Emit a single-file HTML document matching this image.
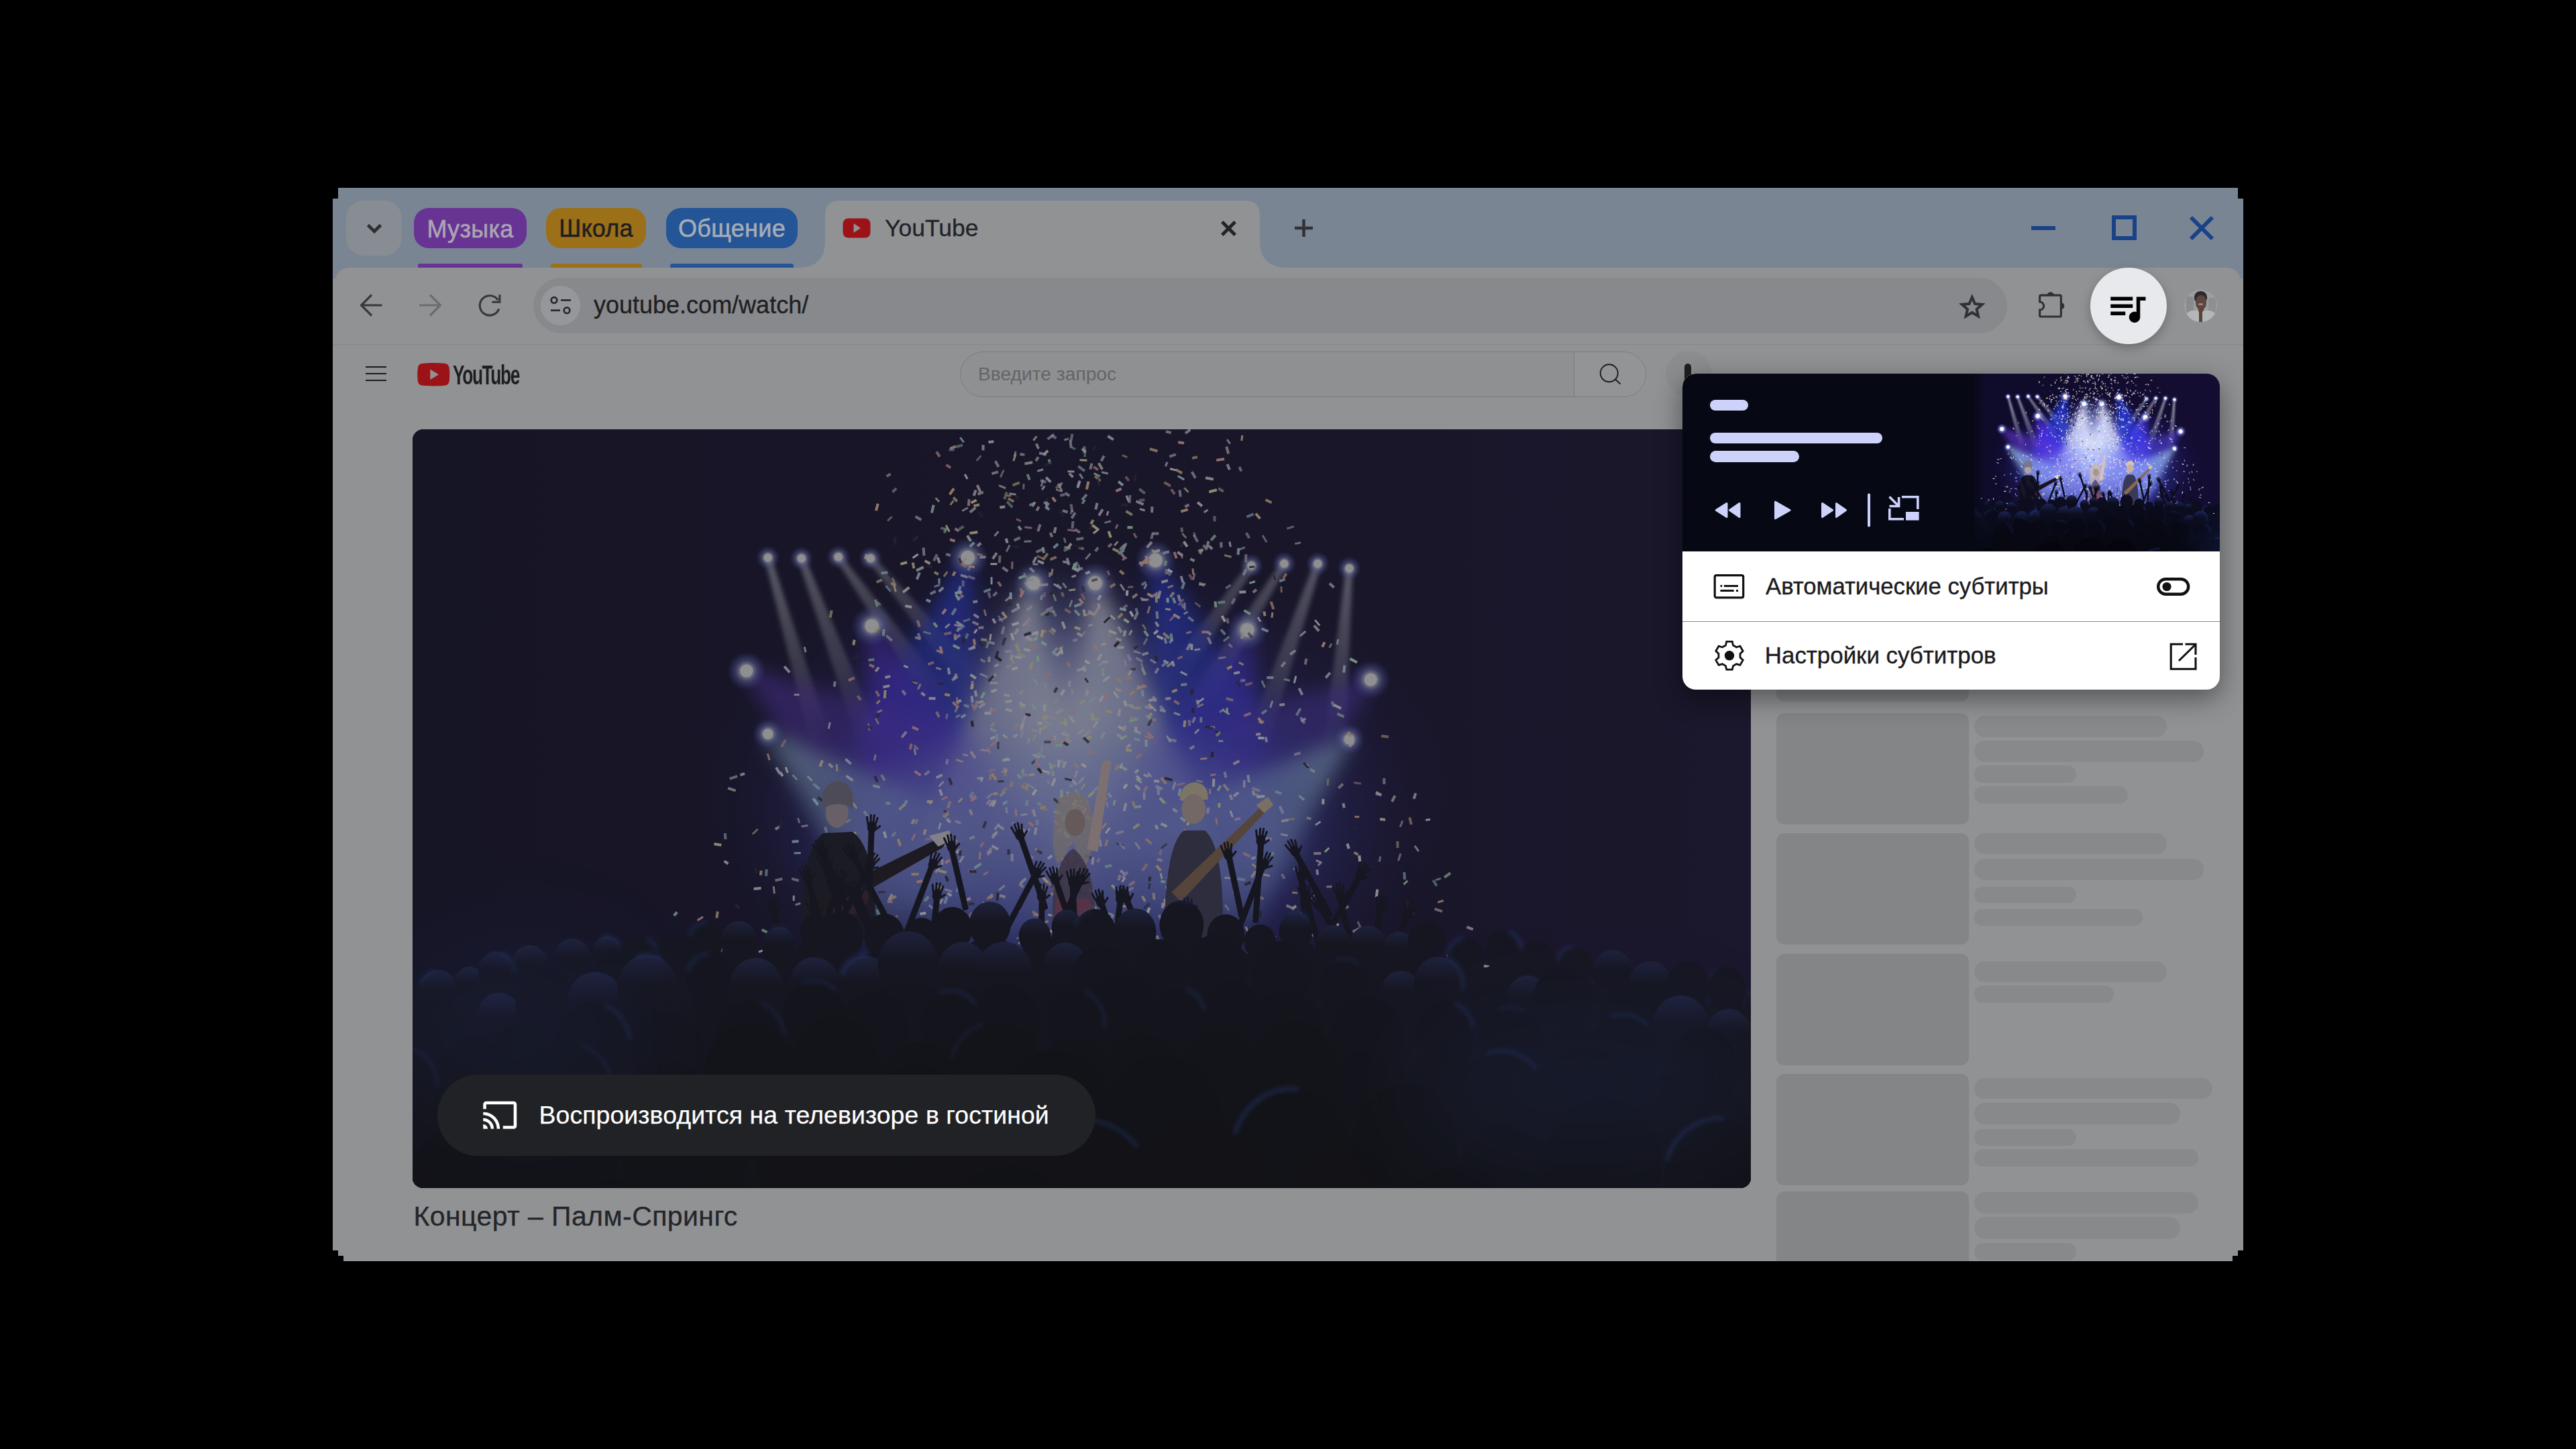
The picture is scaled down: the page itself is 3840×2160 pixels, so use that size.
<!DOCTYPE html>
<html><head><meta charset="utf-8">
<style>
*{margin:0;padding:0;box-sizing:border-box}
html,body{width:3840px;height:2160px;background:#000;overflow:hidden}
body{position:relative;font-family:"Liberation Sans",sans-serif}
.a{position:absolute}
.t{position:absolute;line-height:1;white-space:nowrap;font-family:"Liberation Sans",sans-serif}
svg{position:absolute;overflow:visible}
</style></head><body>
<!-- window -->
<div class="a" id="win" style="left:496px;top:280px;width:2848px;height:1600px;background:#7a8594;overflow:hidden">
</div>
<!-- tab strip items -->
<div class="a" id="dd" style="left:516px;top:299px;width:83px;height:82px;border-radius:26px;background:#888c93"></div>
<svg style="left:546px;top:333px" width="24" height="16"><path d="M2.5 2.5 L12 12 L21.5 2.5" fill="none" stroke="#2c2f33" stroke-width="4.6"/></svg>
<div class="a" style="left:617px;top:310px;width:168px;height:60px;border-radius:22px;background:#673494"></div>
<div class="t" style="left:617px;width:168px;text-align:center;top:323.5px;font-size:36px;color:#aaa4b2;-webkit-text-stroke:0.6px #aaa4b2;letter-spacing:0.3px">Музыка</div>
<div class="a" style="left:623px;top:393px;width:156px;height:6px;border-radius:3px 3px 0 0;background:#673494"></div>
<div class="a" style="left:814px;top:310px;width:149px;height:60px;border-radius:22px;background:#9b7019"></div>
<div class="t" style="left:814px;width:149px;text-align:center;top:323px;font-size:36px;color:#1f1f1f;-webkit-text-stroke:0.6px #1f1f1f;letter-spacing:0.2px">Школа</div>
<div class="a" style="left:821px;top:393px;width:136px;height:6px;border-radius:3px 3px 0 0;background:#9b7019"></div>
<div class="a" style="left:993px;top:310px;width:196px;height:60px;border-radius:22px;background:#235597"></div>
<div class="t" style="left:993px;width:196px;text-align:center;top:323px;font-size:36px;color:#a6acb6;-webkit-text-stroke:0.6px #a6acb6;letter-spacing:0.3px">Общение</div>
<div class="a" style="left:999px;top:393px;width:184px;height:6px;border-radius:3px 3px 0 0;background:#235597"></div>
<!-- active tab -->
<svg style="left:1190px;top:299px" width="760" height="101"><path d="M0 100 Q40 100 40 60 L40 22 Q40 0 62 0 L666 0 Q688 0 688 22 L688 60 Q688 100 728 100 Z" fill="#919294"/></svg>
<svg style="left:1256px;top:325px" width="42" height="30"><rect x="0.5" y="0.5" width="41" height="29" rx="8" fill="#9b1316"/><path d="M16.5 8 L27 15 L16.5 22 Z" fill="#919294"/></svg>
<div class="t" id="tabt" style="left:1319px;top:323px;font-size:35.5px;color:#222327;-webkit-text-stroke:0.3px #222327">YouTube</div>
<svg style="left:1820px;top:328.5px" width="23" height="23"><path d="M1.8 1.8 L21.2 21.2 M21.2 1.8 L1.8 21.2" stroke="#232427" stroke-width="5"/></svg>
<svg style="left:1930px;top:327px" width="27" height="26"><path d="M13.5 0 V26 M0 13 H27" stroke="#303236" stroke-width="4.5"/></svg>
<!-- window controls -->
<div class="a" style="left:3028px;top:337px;width:36px;height:6px;background:#1a4288"></div>
<div class="a" style="left:3148px;top:321px;width:37px;height:37px;border:6px solid #1a4288"></div>
<svg style="left:3264px;top:322px" width="36" height="36"><path d="M2 2 L34 34 M34 2 L2 34" stroke="#1a4288" stroke-width="6"/></svg>
<!-- toolbar -->
<div class="a" id="tb" style="left:500px;top:399px;width:2840px;height:115px;border-radius:20px 20px 0 0;background:#919294"></div>
<div class="a" style="left:496px;top:512px;width:2848px;height:1368px;background:#919294"></div><div class="a" style="left:496px;top:415px;width:8px;height:100px;background:#919294"></div><div class="a" style="left:3336px;top:415px;width:8px;height:100px;background:#919294"></div>
<div class="a" style="left:496px;top:512.5px;width:2848px;height:1.5px;background:#86878a"></div>
<svg style="left:529px;top:431px" width="48" height="48"><path d="M9 24H40.5 M25 8.5 L9.6 24 L25 39.5" fill="none" stroke="#36383b" stroke-width="3.2"/></svg>
<svg style="left:617px;top:431px" width="48" height="48"><path d="M8 24H39.5 M24 8.5 L39.4 24 L24 39.5" fill="none" stroke="#6b6d70" stroke-width="3.2"/></svg>
<svg style="left:706px;top:431px" width="48" height="48"><path d="M37.8 29.4 A14.7 14.7 0 1 1 36.3 16.4" fill="none" stroke="#36383b" stroke-width="3.1"/><path d="M27.5 19.3 H38.9 V8.2" fill="none" stroke="#36383b" stroke-width="3.1"/></svg>
<div class="a" id="omni" style="left:795px;top:414px;width:2197px;height:83px;border-radius:41.5px;background:#88898c"></div>
<div class="a" style="left:806px;top:426px;width:59px;height:59px;border-radius:50%;background:#96979a"></div>
<svg style="left:815px;top:437px" width="42" height="32"><g fill="none" stroke="#27292c" stroke-width="2.7"><circle cx="11" cy="10.5" r="4.3"/><path d="M21 10.5 H36"/><path d="M6 25.7 H20"/><circle cx="30" cy="25.7" r="4.3"/></g></svg>
<div class="t" id="url" style="left:885px;top:437px;font-size:36px;color:#1f2023;-webkit-text-stroke:0.35px #1f2023">youtube.com/watch/</div>
<svg style="left:2916px;top:433.6px" width="47.5" height="47.5" viewBox="0 -960 960 960"><path d="m354-287 126-76 126 77-33-144 111-96-146-13-58-136-58 135-146 13 111 97-33 143ZM233-120l65-281L80-590l288-25 112-265 112 265 288 25-218 189 65 281-247-149-247 149Z" fill="#2f3134"/></svg>
<svg style="left:3030px;top:428px" width="56" height="52"><path d="M12.5 12.15 H40.5 Q42.35 12.15 42.35 14 V42.2 Q42.35 44.05 40.5 44.05 H12.5 Q10.65 44.05 10.65 42.2 V34 A6 6 0 0 0 10.65 22 V14 Q10.65 12.15 12.5 12.15 Z" fill="none" stroke="#2f3134" stroke-width="3.1"/><path d="M21.5 12.5 A5.3 5.3 0 0 1 32.1 12.5 Z M42 22.8 A5.3 5.3 0 0 1 42 33.4 Z" fill="#2f3134"/></svg>
<!-- media button -->
<div class="a" style="left:3116px;top:399px;width:114px;height:114px;border-radius:50%;background:#e8e9ec;box-shadow:0 6px 16px rgba(0,0,0,0.25)"></div>
<svg style="left:3137.5px;top:425.5px" width="66" height="66" viewBox="0 0 24 24"><path d="M15 6H3v2h12V6zm0 4H3v2h12v-2zM3 16h8v-2H3v2zM17 6v8.18c-.31-.11-.65-.18-1-.18-1.66 0-3 1.34-3 3s1.34 3 3 3 3-1.34 3-3V8h3V6h-5z" fill="#000"/></svg>
<!-- avatar -->
<div class="a" id="avatar" style="left:3256px;top:432px;width:49px;height:48px;border-radius:50%;overflow:hidden;background:#9c9ea1">
  <div class="a" style="left:3px;top:10px;width:11px;height:24px;border-radius:4px;background:#85878b;opacity:.8"></div>
  <div class="a" style="left:36px;top:12px;width:11px;height:22px;border-radius:4px;background:#8a8c90;opacity:.8"></div>
  <div class="a" style="left:15px;top:1.5px;width:19px;height:17px;border-radius:50% 50% 35% 35%;background:#2b2a2c"></div>
  <div class="a" style="left:16.5px;top:8px;width:16px;height:22px;border-radius:45% 45% 48% 48%;background:#5e463e"></div>
  <div class="a" style="left:21px;top:20px;width:7px;height:3px;border-radius:2px;background:#b0a0a0;opacity:.7"></div>
  <div class="a" style="left:20.5px;top:27px;width:8px;height:22px;background:#5a423a"></div>
  <div class="a" style="left:3px;top:31px;width:19px;height:22px;border-radius:45% 15% 0 0;background:#b4b6b8"></div>
  <div class="a" style="left:27px;top:31px;width:20px;height:22px;border-radius:15% 45% 0 0;background:#b4b6b8"></div>
</div>
<!-- page header -->
<svg style="left:545px;top:545px" width="32" height="24"><path d="M0 2H31 M0 12H31 M0 22H31" stroke="#1a1a1b" stroke-width="2.2"/></svg>
<svg style="left:622px;top:541px" width="49" height="35"><path d="M47.5 6.5 C47 3.5 44.8 1.3 41.8 0.9 C37 0.3 30 0 24.2 0 C18.4 0 11.5 0.3 6.7 0.9 C3.7 1.3 1.5 3.5 1 6.5 C0.4 10 0.2 13.8 0.2 17.2 C0.2 20.6 0.4 24.5 1 28 C1.5 31 3.7 33.2 6.7 33.6 C11.5 34.2 18.4 34.5 24.2 34.5 C30 34.5 37 34.2 41.8 33.6 C44.8 33.2 47 31 47.5 28 C48.1 24.5 48.3 20.6 48.3 17.2 C48.3 13.8 48.1 10 47.5 6.5 Z" fill="#9b1316"/><path d="M19.3 9.5 L32 17.2 L19.3 24.9 Z" fill="#919294"/></svg>
<div class="t" id="ytw" style="left:675px;top:537.5px;font-size:41.5px;font-weight:bold;color:#1e1f22;letter-spacing:-2.2px;transform:scaleX(0.635);transform-origin:0 0">YouTube</div>
<div class="a" id="search" style="left:1431px;top:524px;width:1023px;height:68px;border-radius:34px;border:1.6px solid #7b7c7e;background:#8f9092"></div>
<div class="a" style="left:2346px;top:525px;width:107px;height:66px;border-radius:0 33px 33px 0;border-left:1.6px solid #7b7c7e;background:#939496"></div>
<div class="t" id="ph" style="left:1458px;top:543px;font-size:28.2px;color:#646567">Введите запрос</div>
<svg style="left:2383px;top:541px" width="36" height="36"><circle cx="15.7" cy="15.3" r="13" fill="none" stroke="#1c1d1f" stroke-width="1.9"/><path d="M25 24.5 L32.5 31.5" stroke="#1c1d1f" stroke-width="1.9"/></svg>
<div class="a" style="left:2483px;top:523px;width:68px;height:68px;border-radius:50%;background:#8c8d8f"></div>
<div class="a" style="left:2511px;top:542px;width:10px;height:30px;border-radius:5px;background:#1e1f21"></div>
<!-- video -->
<div class="a" id="video" style="left:615px;top:640px;width:1995px;height:1131px;border-radius:16px;overflow:hidden;background:#111">
<svg style="left:0;top:0" width="1995" height="1131" viewBox="0 0 1996 1131"><g id="scene">
<defs>
<linearGradient id="sbg" x1="0" y1="0" x2="1" y2="0"><stop offset="0" stop-color="#0d0a26"/><stop offset="0.5" stop-color="#110c2e"/><stop offset="1" stop-color="#160e34"/></linearGradient>
<radialGradient id="glow1" cx="0.5" cy="0.5" r="0.5"><stop offset="0" stop-color="#4a60f8" stop-opacity="1"/><stop offset="0.5" stop-color="#3a3ad0" stop-opacity="0.6"/><stop offset="1" stop-color="#2a1a80" stop-opacity="0"/></radialGradient>
<radialGradient id="core" cx="0.5" cy="0.5" r="0.5"><stop offset="0" stop-color="#f4f8ff" stop-opacity="1"/><stop offset="0.5" stop-color="#c0ccff" stop-opacity="0.65"/><stop offset="1" stop-color="#7080f0" stop-opacity="0"/></radialGradient>
<radialGradient id="spot" cx="0.5" cy="0.5" r="0.5"><stop offset="0" stop-color="#ffffff"/><stop offset="0.3" stop-color="#f4f6ff"/><stop offset="0.55" stop-color="#9aa6ff" stop-opacity="0.55"/><stop offset="1" stop-color="#5060ff" stop-opacity="0"/></radialGradient>
<filter id="b3" x="-50%" y="-50%" width="200%" height="200%"><feGaussianBlur stdDeviation="3"/></filter>
<filter id="b6" x="-50%" y="-50%" width="200%" height="200%"><feGaussianBlur stdDeviation="6"/></filter>
<filter id="b10" x="-50%" y="-50%" width="200%" height="200%"><feGaussianBlur stdDeviation="14"/></filter>
<filter id="b25" x="-50%" y="-50%" width="200%" height="200%"><feGaussianBlur stdDeviation="28"/></filter>
<filter id="b60" x="-50%" y="-50%" width="200%" height="200%"><feGaussianBlur stdDeviation="70"/></filter>
<linearGradient id="hd" x1="0" y1="0" x2="0" y2="1"><stop offset="0" stop-color="#1c2454"/><stop offset="0.45" stop-color="#0c0d1e"/><stop offset="1" stop-color="#0a0b18"/></linearGradient>
</defs>
<rect width="1996" height="1131" fill="url(#sbg)"/>
<ellipse cx="985" cy="540" rx="560" ry="360" fill="url(#glow1)" opacity="0.6"/>
<ellipse cx="985" cy="590" rx="380" ry="240" fill="#4858f0" opacity="0.45" filter="url(#b60)"/>
<linearGradient id="bm0" gradientUnits="userSpaceOnUse" x1="530" y1="191" x2="610" y2="470"><stop offset="0" stop-color="#e8ecff" stop-opacity="0.6"/><stop offset="0.6" stop-color="#e8ecff" stop-opacity="0.30"/><stop offset="1" stop-color="#e8ecff" stop-opacity="0"/></linearGradient>
<polygon points="525,192 595,474 625,466 535,190" fill="url(#bm0)" filter="url(#b3)"/>
<linearGradient id="bm1" gradientUnits="userSpaceOnUse" x1="580" y1="192" x2="680" y2="460"><stop offset="0" stop-color="#e8ecff" stop-opacity="0.55"/><stop offset="0.6" stop-color="#e8ecff" stop-opacity="0.28"/><stop offset="1" stop-color="#e8ecff" stop-opacity="0"/></linearGradient>
<polygon points="575,194 664,466 696,454 585,190" fill="url(#bm1)" filter="url(#b3)"/>
<linearGradient id="bm2" gradientUnits="userSpaceOnUse" x1="635" y1="190" x2="790" y2="410"><stop offset="0" stop-color="#e8ecff" stop-opacity="0.5"/><stop offset="0.6" stop-color="#e8ecff" stop-opacity="0.25"/><stop offset="1" stop-color="#e8ecff" stop-opacity="0"/></linearGradient>
<polygon points="631,193 775,420 805,400 639,187" fill="url(#bm2)" filter="url(#b3)"/>
<linearGradient id="bm3" gradientUnits="userSpaceOnUse" x1="683" y1="192" x2="830" y2="370"><stop offset="0" stop-color="#e8ecff" stop-opacity="0.45"/><stop offset="0.6" stop-color="#e8ecff" stop-opacity="0.23"/><stop offset="1" stop-color="#e8ecff" stop-opacity="0"/></linearGradient>
<polygon points="679,195 817,381 843,359 687,189" fill="url(#bm3)" filter="url(#b3)"/>
<linearGradient id="bm4" gradientUnits="userSpaceOnUse" x1="1251" y1="203" x2="1130" y2="380"><stop offset="0" stop-color="#e8ecff" stop-opacity="0.45"/><stop offset="0.6" stop-color="#e8ecff" stop-opacity="0.23"/><stop offset="1" stop-color="#e8ecff" stop-opacity="0"/></linearGradient>
<polygon points="1247,200 1116,370 1144,390 1255,206" fill="url(#bm4)" filter="url(#b3)"/>
<linearGradient id="bm5" gradientUnits="userSpaceOnUse" x1="1300" y1="200" x2="1165" y2="420"><stop offset="0" stop-color="#e8ecff" stop-opacity="0.5"/><stop offset="0.6" stop-color="#e8ecff" stop-opacity="0.25"/><stop offset="1" stop-color="#e8ecff" stop-opacity="0"/></linearGradient>
<polygon points="1296,197 1150,411 1180,429 1304,203" fill="url(#bm5)" filter="url(#b3)"/>
<linearGradient id="bm6" gradientUnits="userSpaceOnUse" x1="1350" y1="200" x2="1260" y2="465"><stop offset="0" stop-color="#e8ecff" stop-opacity="0.55"/><stop offset="0.6" stop-color="#e8ecff" stop-opacity="0.28"/><stop offset="1" stop-color="#e8ecff" stop-opacity="0"/></linearGradient>
<polygon points="1345,198 1244,460 1276,470 1355,202" fill="url(#bm6)" filter="url(#b3)"/>
<linearGradient id="bm7" gradientUnits="userSpaceOnUse" x1="1397" y1="207" x2="1375" y2="470"><stop offset="0" stop-color="#e8ecff" stop-opacity="0.6"/><stop offset="0.6" stop-color="#e8ecff" stop-opacity="0.30"/><stop offset="1" stop-color="#e8ecff" stop-opacity="0"/></linearGradient>
<polygon points="1392,207 1359,469 1391,471 1402,207" fill="url(#bm7)" filter="url(#b3)"/>
<linearGradient id="bm8" gradientUnits="userSpaceOnUse" x1="828" y1="191" x2="730" y2="580"><stop offset="0" stop-color="#2840ff" stop-opacity="0.85"/><stop offset="0.6" stop-color="#2840ff" stop-opacity="0.42"/><stop offset="1" stop-color="#2840ff" stop-opacity="0"/></linearGradient>
<polygon points="823,190 604,548 856,612 833,192" fill="url(#bm8)" filter="url(#b10)"/>
<linearGradient id="bm9" gradientUnits="userSpaceOnUse" x1="1108" y1="195" x2="1220" y2="580"><stop offset="0" stop-color="#2840ff" stop-opacity="0.85"/><stop offset="0.6" stop-color="#2840ff" stop-opacity="0.42"/><stop offset="1" stop-color="#2840ff" stop-opacity="0"/></linearGradient>
<polygon points="1103,196 1095,616 1345,544 1113,194" fill="url(#bm9)" filter="url(#b10)"/>
<linearGradient id="bm10" gradientUnits="userSpaceOnUse" x1="926" y1="229" x2="860" y2="720"><stop offset="0" stop-color="#f8faff" stop-opacity="1.0"/><stop offset="0.6" stop-color="#f8faff" stop-opacity="0.50"/><stop offset="1" stop-color="#f8faff" stop-opacity="0"/></linearGradient>
<polygon points="921,228 711,700 1009,740 931,230" fill="url(#bm10)" filter="url(#b10)"/>
<linearGradient id="bm11" gradientUnits="userSpaceOnUse" x1="1018" y1="229" x2="1090" y2="720"><stop offset="0" stop-color="#f8faff" stop-opacity="1.0"/><stop offset="0.6" stop-color="#f8faff" stop-opacity="0.50"/><stop offset="1" stop-color="#f8faff" stop-opacity="0"/></linearGradient>
<polygon points="1013,230 942,742 1238,698 1023,228" fill="url(#bm11)" filter="url(#b10)"/>
<linearGradient id="bm12" gradientUnits="userSpaceOnUse" x1="685" y1="293" x2="830" y2="720"><stop offset="0" stop-color="#5a30ff" stop-opacity="0.7"/><stop offset="0.6" stop-color="#5a30ff" stop-opacity="0.35"/><stop offset="1" stop-color="#5a30ff" stop-opacity="0"/></linearGradient>
<polygon points="680,295 660,778 1000,662 690,291" fill="url(#bm12)" filter="url(#b10)"/>
<linearGradient id="bm13" gradientUnits="userSpaceOnUse" x1="1245" y1="299" x2="1120" y2="720"><stop offset="0" stop-color="#4a38ff" stop-opacity="0.7"/><stop offset="0.6" stop-color="#4a38ff" stop-opacity="0.35"/><stop offset="1" stop-color="#4a38ff" stop-opacity="0"/></linearGradient>
<polygon points="1240,298 947,669 1293,771 1250,300" fill="url(#bm13)" filter="url(#b10)"/>
<linearGradient id="bm14" gradientUnits="userSpaceOnUse" x1="498" y1="360" x2="800" y2="590"><stop offset="0" stop-color="#6a38e0" stop-opacity="0.65"/><stop offset="0.6" stop-color="#6a38e0" stop-opacity="0.33"/><stop offset="1" stop-color="#6a38e0" stop-opacity="0"/></linearGradient>
<polygon points="495,364 709,709 891,471 501,356" fill="url(#bm14)" filter="url(#b10)"/>
<linearGradient id="bm15" gradientUnits="userSpaceOnUse" x1="1429" y1="373" x2="1150" y2="590"><stop offset="0" stop-color="#5a40e0" stop-opacity="0.65"/><stop offset="0.6" stop-color="#5a40e0" stop-opacity="0.33"/><stop offset="1" stop-color="#5a40e0" stop-opacity="0"/></linearGradient>
<polygon points="1426,369 1058,472 1242,708 1432,377" fill="url(#bm15)" filter="url(#b10)"/>
<linearGradient id="bm16" gradientUnits="userSpaceOnUse" x1="530" y1="454" x2="840" y2="730"><stop offset="0" stop-color="#a8d8ff" stop-opacity="0.7"/><stop offset="0.6" stop-color="#a8d8ff" stop-opacity="0.35"/><stop offset="1" stop-color="#a8d8ff" stop-opacity="0"/></linearGradient>
<polygon points="527,458 747,835 933,625 533,450" fill="url(#bm16)" filter="url(#b10)"/>
<linearGradient id="bm17" gradientUnits="userSpaceOnUse" x1="1397" y1="462" x2="1110" y2="720"><stop offset="0" stop-color="#a8d8ff" stop-opacity="0.7"/><stop offset="0.6" stop-color="#a8d8ff" stop-opacity="0.35"/><stop offset="1" stop-color="#a8d8ff" stop-opacity="0"/></linearGradient>
<polygon points="1394,458 1016,616 1204,824 1400,466" fill="url(#bm17)" filter="url(#b10)"/>
<ellipse cx="972" cy="450" rx="170" ry="250" fill="url(#core)" filter="url(#b25)"/>
<ellipse cx="975" cy="610" rx="340" ry="150" fill="#90a0ff" opacity="0.45" filter="url(#b25)"/>
<circle cx="530" cy="191" r="18" fill="url(#spot)" opacity="0.85"/>
<circle cx="530" cy="191" r="6.0" fill="#ffffff"/>
<circle cx="580" cy="192" r="18" fill="url(#spot)" opacity="0.85"/>
<circle cx="580" cy="192" r="6.0" fill="#ffffff"/>
<circle cx="635" cy="190" r="18" fill="url(#spot)" opacity="0.85"/>
<circle cx="635" cy="190" r="6.0" fill="#ffffff"/>
<circle cx="683" cy="192" r="18" fill="url(#spot)" opacity="0.85"/>
<circle cx="683" cy="192" r="6.0" fill="#ffffff"/>
<circle cx="828" cy="191" r="31" fill="url(#spot)" opacity="0.85"/>
<circle cx="828" cy="191" r="10.2" fill="#ffffff"/>
<circle cx="926" cy="229" r="31" fill="url(#spot)" opacity="0.85"/>
<circle cx="926" cy="229" r="10.2" fill="#ffffff"/>
<circle cx="1018" cy="229" r="31" fill="url(#spot)" opacity="0.85"/>
<circle cx="1018" cy="229" r="10.2" fill="#ffffff"/>
<circle cx="1108" cy="195" r="31" fill="url(#spot)" opacity="0.85"/>
<circle cx="1108" cy="195" r="10.2" fill="#ffffff"/>
<circle cx="1251" cy="203" r="18" fill="url(#spot)" opacity="0.85"/>
<circle cx="1251" cy="203" r="6.0" fill="#ffffff"/>
<circle cx="1300" cy="200" r="18" fill="url(#spot)" opacity="0.85"/>
<circle cx="1300" cy="200" r="6.0" fill="#ffffff"/>
<circle cx="1350" cy="200" r="18" fill="url(#spot)" opacity="0.85"/>
<circle cx="1350" cy="200" r="6.0" fill="#ffffff"/>
<circle cx="1397" cy="207" r="18" fill="url(#spot)" opacity="0.85"/>
<circle cx="1397" cy="207" r="6.0" fill="#ffffff"/>
<circle cx="685" cy="293" r="31" fill="url(#spot)" opacity="0.85"/>
<circle cx="685" cy="293" r="10.2" fill="#ffffff"/>
<circle cx="1245" cy="299" r="31" fill="url(#spot)" opacity="0.85"/>
<circle cx="1245" cy="299" r="10.2" fill="#ffffff"/>
<circle cx="498" cy="360" r="29" fill="url(#spot)" opacity="0.85"/>
<circle cx="498" cy="360" r="9.3" fill="#ffffff"/>
<circle cx="1429" cy="373" r="29" fill="url(#spot)" opacity="0.85"/>
<circle cx="1429" cy="373" r="9.3" fill="#ffffff"/>
<circle cx="530" cy="454" r="23" fill="url(#spot)" opacity="0.85"/>
<circle cx="530" cy="454" r="7.6" fill="#ffffff"/>
<circle cx="1397" cy="462" r="23" fill="url(#spot)" opacity="0.85"/>
<circle cx="1397" cy="462" r="7.6" fill="#ffffff"/>
<g><rect x="1149" y="259" width="7" height="4" fill="#f0f0ff" opacity="0.6" transform="rotate(66 1149 259)"/><rect x="1189" y="172" width="7" height="4" fill="#ffffff" opacity="0.8" transform="rotate(43 1189 172)"/><rect x="1131" y="661" width="10" height="4" fill="#c8ecff" opacity="0.8" transform="rotate(104 1131 661)"/><rect x="1059" y="37" width="8" height="3" fill="#ffd0a0" opacity="0.7" transform="rotate(21 1059 37)"/><rect x="788" y="145" width="9" height="4" fill="#c8ecff" opacity="0.6" transform="rotate(11 788 145)"/><rect x="836" y="397" width="10" height="4" fill="#e8d8ff" opacity="1.0" transform="rotate(84 836 397)"/><rect x="1068" y="240" width="8" height="4" fill="#ffffff" opacity="1.0" transform="rotate(95 1068 240)"/><rect x="719" y="230" width="12" height="3" fill="#fff0b0" opacity="0.9" transform="rotate(75 719 230)"/><rect x="1164" y="62" width="11" height="4" fill="#ffffff" opacity="0.7" transform="rotate(61 1164 62)"/><rect x="558" y="464" width="12" height="4" fill="#ffb8b8" opacity="0.6" transform="rotate(120 558 464)"/><rect x="1118" y="518" width="12" height="4" fill="#ffd0a0" opacity="0.8" transform="rotate(51 1118 518)"/><rect x="1158" y="278" width="10" height="4" fill="#c8ecff" opacity="0.7" transform="rotate(39 1158 278)"/><rect x="921" y="318" width="12" height="4" fill="#ffb8b8" opacity="0.8" transform="rotate(30 921 318)"/><rect x="1233" y="707" width="8" height="4" fill="#c8ecff" opacity="1.0" transform="rotate(65 1233 707)"/><rect x="679" y="186" width="8" height="4" fill="#ffffff" opacity="0.7" transform="rotate(106 679 186)"/><rect x="884" y="117" width="8" height="4" fill="#ffffff" opacity="0.9" transform="rotate(171 884 117)"/><rect x="872" y="365" width="11" height="4" fill="#c8ffd8" opacity="0.8" transform="rotate(123 872 365)"/><rect x="1218" y="319" width="7" height="3" fill="#e8d8ff" opacity="0.7" transform="rotate(38 1218 319)"/><rect x="1195" y="481" width="8" height="4" fill="#302838" opacity="1.0" transform="rotate(97 1195 481)"/><rect x="932" y="20" width="8" height="4" fill="#ffffff" opacity="0.6" transform="rotate(66 932 20)"/><rect x="875" y="794" width="9" height="4" fill="#e8d8ff" opacity="0.6" transform="rotate(15 875 794)"/><rect x="590" y="592" width="10" height="3" fill="#f0f0ff" opacity="0.7" transform="rotate(171 590 592)"/><rect x="1051" y="731" width="11" height="3" fill="#ffb8b8" opacity="0.6" transform="rotate(116 1051 731)"/><rect x="1166" y="415" width="8" height="4" fill="#302838" opacity="0.9" transform="rotate(90 1166 415)"/><rect x="849" y="649" width="12" height="4" fill="#c8ecff" opacity="0.9" transform="rotate(145 849 649)"/><rect x="721" y="160" width="12" height="4" fill="#302838" opacity="0.7" transform="rotate(85 721 160)"/><rect x="1012" y="765" width="9" height="4" fill="#e8d8ff" opacity="1.0" transform="rotate(178 1012 765)"/><rect x="861" y="376" width="12" height="4" fill="#e8d8ff" opacity="1.0" transform="rotate(0 861 376)"/><rect x="1258" y="640" width="7" height="4" fill="#c8ecff" opacity="0.9" transform="rotate(164 1258 640)"/><rect x="1155" y="382" width="9" height="4" fill="#c8ffd8" opacity="0.8" transform="rotate(175 1155 382)"/><rect x="1409" y="595" width="7" height="3" fill="#302838" opacity="0.6" transform="rotate(179 1409 595)"/><rect x="1047" y="724" width="11" height="4" fill="#f0f0ff" opacity="0.7" transform="rotate(118 1047 724)"/><rect x="869" y="439" width="7" height="4" fill="#fff0b0" opacity="0.6" transform="rotate(131 869 439)"/><rect x="1260" y="347" width="8" height="3" fill="#302838" opacity="0.7" transform="rotate(53 1260 347)"/><rect x="735" y="261" width="10" height="4" fill="#ffffff" opacity="0.9" transform="rotate(11 735 261)"/><rect x="1109" y="530" width="11" height="4" fill="#f0f0ff" opacity="0.7" transform="rotate(24 1109 530)"/><rect x="810" y="146" width="7" height="4" fill="#ffe0e8" opacity="0.8" transform="rotate(31 810 146)"/><rect x="862" y="445" width="10" height="4" fill="#c8ecff" opacity="0.8" transform="rotate(19 862 445)"/><rect x="1167" y="153" width="7" height="3" fill="#ffe0e8" opacity="0.6" transform="rotate(81 1167 153)"/><rect x="801" y="355" width="10" height="4" fill="#ffffff" opacity="0.8" transform="rotate(81 801 355)"/><rect x="819" y="406" width="8" height="4" fill="#f0f0ff" opacity="1.0" transform="rotate(158 819 406)"/><rect x="1083" y="714" width="9" height="4" fill="#c8ffd8" opacity="0.9" transform="rotate(57 1083 714)"/><rect x="1139" y="58" width="11" height="4" fill="#ffd0a0" opacity="0.9" transform="rotate(28 1139 58)"/><rect x="988" y="293" width="9" height="4" fill="#fff0b0" opacity="1.0" transform="rotate(17 988 293)"/><rect x="1157" y="792" width="11" height="3" fill="#e8d8ff" opacity="0.8" transform="rotate(78 1157 792)"/><rect x="934" y="337" width="9" height="4" fill="#c8ffd8" opacity="0.9" transform="rotate(83 934 337)"/><rect x="1055" y="265" width="10" height="4" fill="#c8ecff" opacity="1.0" transform="rotate(12 1055 265)"/><rect x="1179" y="777" width="7" height="4" fill="#c8ffd8" opacity="0.7" transform="rotate(49 1179 777)"/><rect x="1126" y="680" width="10" height="4" fill="#f0f0ff" opacity="0.8" transform="rotate(73 1126 680)"/><rect x="959" y="456" width="7" height="4" fill="#ffffff" opacity="0.6" transform="rotate(77 959 456)"/><rect x="889" y="508" width="11" height="3" fill="#ffe0e8" opacity="0.6" transform="rotate(154 889 508)"/><rect x="847" y="363" width="12" height="3" fill="#c8ecff" opacity="0.8" transform="rotate(23 847 363)"/><rect x="1311" y="751" width="12" height="3" fill="#ffd0a0" opacity="1.0" transform="rotate(33 1311 751)"/><rect x="999" y="244" width="10" height="3" fill="#ffb8b8" opacity="0.6" transform="rotate(62 999 244)"/><rect x="807" y="405" width="12" height="4" fill="#ffd0a0" opacity="0.8" transform="rotate(44 807 405)"/><rect x="695" y="655" width="11" height="4" fill="#c8ecff" opacity="0.9" transform="rotate(91 695 655)"/><rect x="1083" y="274" width="11" height="4" fill="#e8d8ff" opacity="0.8" transform="rotate(114 1083 274)"/><rect x="1017" y="786" width="10" height="4" fill="#ffd0a0" opacity="0.6" transform="rotate(78 1017 786)"/><rect x="949" y="673" width="11" height="4" fill="#ffb8b8" opacity="0.7" transform="rotate(51 949 673)"/><rect x="1160" y="215" width="9" height="4" fill="#ffb8b8" opacity="0.6" transform="rotate(58 1160 215)"/><rect x="994" y="174" width="8" height="4" fill="#ffd0a0" opacity="0.7" transform="rotate(15 994 174)"/><rect x="973" y="161" width="8" height="3" fill="#ffffff" opacity="0.6" transform="rotate(72 973 161)"/><rect x="989" y="240" width="10" height="3" fill="#fff0b0" opacity="0.9" transform="rotate(172 989 240)"/><rect x="882" y="526" width="9" height="3" fill="#302838" opacity="0.7" transform="rotate(177 882 526)"/><rect x="496" y="515" width="7" height="4" fill="#f0f0ff" opacity="0.9" transform="rotate(161 496 515)"/><rect x="696" y="111" width="11" height="4" fill="#ffd0a0" opacity="1.0" transform="rotate(105 696 111)"/><rect x="974" y="765" width="10" height="3" fill="#ffe0e8" opacity="0.9" transform="rotate(8 974 765)"/><rect x="929" y="301" width="7" height="4" fill="#ffffff" opacity="0.7" transform="rotate(44 929 301)"/><rect x="1017" y="638" width="11" height="4" fill="#ffe0e8" opacity="0.9" transform="rotate(96 1017 638)"/><rect x="516" y="597" width="11" height="3" fill="#ffd0a0" opacity="0.7" transform="rotate(136 516 597)"/><rect x="1081" y="781" width="9" height="4" fill="#ffffff" opacity="0.9" transform="rotate(86 1081 781)"/><rect x="930" y="494" width="8" height="3" fill="#302838" opacity="0.7" transform="rotate(134 930 494)"/><rect x="942" y="107" width="9" height="4" fill="#ffffff" opacity="0.7" transform="rotate(18 942 107)"/><rect x="787" y="233" width="9" height="3" fill="#ffe0e8" opacity="0.7" transform="rotate(161 787 233)"/><rect x="955" y="749" width="7" height="4" fill="#ffffff" opacity="1.0" transform="rotate(148 955 749)"/><rect x="468" y="795" width="12" height="3" fill="#ffb8b8" opacity="0.9" transform="rotate(16 468 795)"/><rect x="1428" y="762" width="8" height="4" fill="#e8d8ff" opacity="1.0" transform="rotate(92 1428 762)"/><rect x="1149" y="185" width="7" height="3" fill="#ffb8b8" opacity="0.8" transform="rotate(89 1149 185)"/><rect x="810" y="582" width="9" height="4" fill="#e8d8ff" opacity="0.7" transform="rotate(22 810 582)"/><rect x="1061" y="601" width="12" height="4" fill="#e8d8ff" opacity="0.7" transform="rotate(162 1061 601)"/><rect x="867" y="696" width="7" height="4" fill="#ffb8b8" opacity="0.9" transform="rotate(136 867 696)"/><rect x="913" y="81" width="8" height="3" fill="#e8d8ff" opacity="0.7" transform="rotate(92 913 81)"/><rect x="1335" y="342" width="9" height="4" fill="#ffe0e8" opacity="0.7" transform="rotate(100 1335 342)"/><rect x="1033" y="40" width="9" height="4" fill="#ffffff" opacity="0.7" transform="rotate(116 1033 40)"/><rect x="819" y="730" width="9" height="3" fill="#ffd0a0" opacity="0.9" transform="rotate(46 819 730)"/><rect x="956" y="208" width="10" height="3" fill="#fff0b0" opacity="0.8" transform="rotate(100 956 208)"/><rect x="1248" y="515" width="11" height="4" fill="#ffffff" opacity="0.7" transform="rotate(82 1248 515)"/><rect x="1101" y="342" width="10" height="3" fill="#e8d8ff" opacity="0.8" transform="rotate(31 1101 342)"/><rect x="978" y="191" width="11" height="4" fill="#f0f0ff" opacity="0.8" transform="rotate(74 978 191)"/><rect x="1208" y="168" width="8" height="4" fill="#e8d8ff" opacity="0.8" transform="rotate(90 1208 168)"/><rect x="781" y="101" width="8" height="3" fill="#ffffff" opacity="0.8" transform="rotate(45 781 101)"/><rect x="689" y="345" width="9" height="4" fill="#c8ffd8" opacity="0.7" transform="rotate(174 689 345)"/><rect x="1221" y="568" width="10" height="3" fill="#f0f0ff" opacity="1.0" transform="rotate(70 1221 568)"/><rect x="794" y="684" width="12" height="3" fill="#f0f0ff" opacity="0.7" transform="rotate(20 794 684)"/><rect x="1431" y="778" width="11" height="4" fill="#ffffff" opacity="0.6" transform="rotate(161 1431 778)"/><rect x="1265" y="456" width="7" height="4" fill="#f0f0ff" opacity="0.9" transform="rotate(173 1265 456)"/><rect x="952" y="509" width="7" height="4" fill="#c8ecff" opacity="0.8" transform="rotate(105 952 509)"/><rect x="864" y="632" width="7" height="4" fill="#e8d8ff" opacity="0.7" transform="rotate(179 864 632)"/><rect x="1198" y="516" width="8" height="3" fill="#ffb8b8" opacity="0.9" transform="rotate(173 1198 516)"/><rect x="771" y="708" width="10" height="3" fill="#e8d8ff" opacity="0.8" transform="rotate(41 771 708)"/><rect x="1142" y="181" width="9" height="4" fill="#f0f0ff" opacity="0.9" transform="rotate(36 1142 181)"/><rect x="1017" y="54" width="8" height="4" fill="#ffb8b8" opacity="0.8" transform="rotate(35 1017 54)"/><rect x="807" y="608" width="9" height="3" fill="#ffd0a0" opacity="0.8" transform="rotate(40 807 608)"/><rect x="1051" y="738" width="10" height="4" fill="#ffffff" opacity="0.7" transform="rotate(128 1051 738)"/><rect x="1011" y="719" width="11" height="4" fill="#e8d8ff" opacity="1.0" transform="rotate(180 1011 719)"/><rect x="875" y="153" width="9" height="3" fill="#e8d8ff" opacity="0.9" transform="rotate(131 875 153)"/><rect x="781" y="354" width="8" height="3" fill="#ffe0e8" opacity="0.8" transform="rotate(15 781 354)"/><rect x="1002" y="449" width="11" height="3" fill="#ffffff" opacity="0.6" transform="rotate(145 1002 449)"/><rect x="829" y="157" width="10" height="4" fill="#ffffff" opacity="0.9" transform="rotate(58 829 157)"/><rect x="998" y="649" width="7" height="3" fill="#ffe0e8" opacity="0.7" transform="rotate(166 998 649)"/><rect x="906" y="719" width="9" height="3" fill="#ffb8b8" opacity="0.8" transform="rotate(172 906 719)"/><rect x="767" y="597" width="8" height="4" fill="#ffe0e8" opacity="0.9" transform="rotate(107 767 597)"/><rect x="1276" y="765" width="8" height="4" fill="#fff0b0" opacity="1.0" transform="rotate(89 1276 765)"/><rect x="953" y="7" width="9" height="4" fill="#e8d8ff" opacity="0.7" transform="rotate(27 953 7)"/><rect x="1050" y="369" width="10" height="4" fill="#ffd0a0" opacity="0.8" transform="rotate(29 1050 369)"/><rect x="811" y="27" width="9" height="4" fill="#ffb8b8" opacity="1.0" transform="rotate(159 811 27)"/><rect x="1056" y="500" width="12" height="4" fill="#ffffff" opacity="0.7" transform="rotate(31 1056 500)"/><rect x="1234" y="496" width="10" height="4" fill="#ffe0e8" opacity="0.9" transform="rotate(152 1234 496)"/><rect x="930" y="624" width="8" height="3" fill="#fff0b0" opacity="0.8" transform="rotate(47 930 624)"/><rect x="1126" y="196" width="8" height="4" fill="#c8ffd8" opacity="0.7" transform="rotate(104 1126 196)"/><rect x="995" y="201" width="10" height="3" fill="#ffffff" opacity="0.6" transform="rotate(84 995 201)"/><rect x="1253" y="380" width="11" height="4" fill="#ffb8b8" opacity="0.6" transform="rotate(165 1253 380)"/><rect x="1211" y="186" width="11" height="3" fill="#fff0b0" opacity="0.8" transform="rotate(14 1211 186)"/><rect x="1079" y="359" width="8" height="4" fill="#302838" opacity="0.6" transform="rotate(170 1079 359)"/><rect x="948" y="568" width="9" height="3" fill="#ffd0a0" opacity="0.6" transform="rotate(180 948 568)"/><rect x="1056" y="731" width="11" height="4" fill="#302838" opacity="0.7" transform="rotate(74 1056 731)"/><rect x="1086" y="250" width="10" height="3" fill="#f0f0ff" opacity="0.8" transform="rotate(18 1086 250)"/><rect x="1259" y="124" width="10" height="4" fill="#ffd0a0" opacity="1.0" transform="rotate(49 1259 124)"/><rect x="1144" y="246" width="10" height="4" fill="#e8d8ff" opacity="0.9" transform="rotate(75 1144 246)"/><rect x="928" y="516" width="9" height="4" fill="#fff0b0" opacity="0.8" transform="rotate(170 928 516)"/><rect x="1080" y="339" width="11" height="4" fill="#f0f0ff" opacity="0.6" transform="rotate(29 1080 339)"/><rect x="846" y="114" width="9" height="4" fill="#fff0b0" opacity="0.9" transform="rotate(167 846 114)"/><rect x="1086" y="417" width="9" height="4" fill="#fff0b0" opacity="0.7" transform="rotate(174 1086 417)"/><rect x="929" y="670" width="7" height="4" fill="#ffd0a0" opacity="0.8" transform="rotate(57 929 670)"/><rect x="1219" y="310" width="11" height="3" fill="#c8ffd8" opacity="0.7" transform="rotate(141 1219 310)"/><rect x="800" y="492" width="8" height="4" fill="#f0f0ff" opacity="0.6" transform="rotate(102 800 492)"/><rect x="1031" y="120" width="11" height="4" fill="#e8d8ff" opacity="0.9" transform="rotate(121 1031 120)"/><rect x="899" y="94" width="10" height="4" fill="#302838" opacity="0.8" transform="rotate(55 899 94)"/><rect x="862" y="199" width="10" height="3" fill="#ffffff" opacity="1.0" transform="rotate(1 862 199)"/><rect x="1096" y="188" width="11" height="4" fill="#ffffff" opacity="0.7" transform="rotate(82 1096 188)"/><rect x="1164" y="320" width="9" height="4" fill="#ffffff" opacity="0.9" transform="rotate(91 1164 320)"/><rect x="1084" y="509" width="7" height="4" fill="#ffffff" opacity="0.8" transform="rotate(140 1084 509)"/><rect x="1295" y="602" width="11" height="3" fill="#ffe0e8" opacity="0.8" transform="rotate(12 1295 602)"/><rect x="843" y="155" width="12" height="4" fill="#fff0b0" opacity="1.0" transform="rotate(172 843 155)"/><rect x="958" y="549" width="11" height="4" fill="#302838" opacity="0.7" transform="rotate(45 958 549)"/><rect x="865" y="220" width="11" height="3" fill="#c8ecff" opacity="1.0" transform="rotate(90 865 220)"/><rect x="860" y="474" width="9" height="3" fill="#ffb8b8" opacity="0.9" transform="rotate(73 860 474)"/><rect x="866" y="544" width="11" height="3" fill="#f0f0ff" opacity="0.6" transform="rotate(141 866 544)"/><rect x="1139" y="39" width="10" height="4" fill="#f0f0ff" opacity="0.7" transform="rotate(161 1139 39)"/><rect x="934" y="504" width="9" height="4" fill="#302838" opacity="1.0" transform="rotate(48 934 504)"/><rect x="1185" y="492" width="10" height="3" fill="#ffd0a0" opacity="0.9" transform="rotate(174 1185 492)"/><rect x="926" y="717" width="11" height="4" fill="#ffd0a0" opacity="0.7" transform="rotate(40 926 717)"/><rect x="948" y="522" width="7" height="3" fill="#e8d8ff" opacity="0.6" transform="rotate(64 948 522)"/><rect x="826" y="427" width="8" height="4" fill="#ffffff" opacity="0.7" transform="rotate(149 826 427)"/><rect x="1121" y="749" width="8" height="3" fill="#ffd0a0" opacity="0.9" transform="rotate(17 1121 749)"/><rect x="817" y="626" width="7" height="4" fill="#ffd0a0" opacity="0.7" transform="rotate(101 817 626)"/><rect x="1096" y="463" width="10" height="4" fill="#ffffff" opacity="0.7" transform="rotate(89 1096 463)"/><rect x="906" y="35" width="7" height="4" fill="#c8ecff" opacity="0.8" transform="rotate(2 906 35)"/><rect x="1088" y="486" width="10" height="4" fill="#ffb8b8" opacity="0.7" transform="rotate(146 1088 486)"/><rect x="1217" y="51" width="9" height="4" fill="#ffffff" opacity="0.8" transform="rotate(68 1217 51)"/><rect x="981" y="64" width="8" height="4" fill="#ffe0e8" opacity="0.9" transform="rotate(47 981 64)"/><rect x="989" y="268" width="11" height="4" fill="#c8ffd8" opacity="0.8" transform="rotate(48 989 268)"/><rect x="599" y="549" width="12" height="4" fill="#c8ecff" opacity="1.0" transform="rotate(53 599 549)"/><rect x="1142" y="68" width="11" height="3" fill="#c8ecff" opacity="1.0" transform="rotate(29 1142 68)"/><rect x="1538" y="704" width="9" height="3" fill="#ffd0a0" opacity="0.9" transform="rotate(163 1538 704)"/><rect x="680" y="673" width="10" height="3" fill="#c8ecff" opacity="1.0" transform="rotate(5 680 673)"/><rect x="930" y="456" width="9" height="3" fill="#fff0b0" opacity="0.6" transform="rotate(112 930 456)"/><rect x="944" y="85" width="7" height="3" fill="#ffe0e8" opacity="0.9" transform="rotate(125 944 85)"/><rect x="1110" y="589" width="7" height="4" fill="#f0f0ff" opacity="0.9" transform="rotate(65 1110 589)"/><rect x="1525" y="713" width="12" height="4" fill="#ffe0e8" opacity="0.7" transform="rotate(19 1525 713)"/><rect x="1100" y="27" width="12" height="4" fill="#ffd0a0" opacity="0.9" transform="rotate(16 1100 27)"/><rect x="1057" y="230" width="11" height="3" fill="#ffffff" opacity="0.8" transform="rotate(57 1057 230)"/><rect x="1041" y="281" width="12" height="3" fill="#302838" opacity="1.0" transform="rotate(137 1041 281)"/><rect x="1172" y="403" width="7" height="4" fill="#e8d8ff" opacity="0.9" transform="rotate(79 1172 403)"/><rect x="751" y="375" width="7" height="4" fill="#302838" opacity="0.9" transform="rotate(129 751 375)"/><rect x="997" y="656" width="8" height="4" fill="#ffffff" opacity="0.6" transform="rotate(176 997 656)"/><rect x="997" y="77" width="11" height="4" fill="#f0f0ff" opacity="1.0" transform="rotate(107 997 77)"/><rect x="1126" y="208" width="8" height="4" fill="#ffd0a0" opacity="0.6" transform="rotate(90 1126 208)"/><rect x="914" y="613" width="9" height="4" fill="#e8d8ff" opacity="0.6" transform="rotate(101 914 613)"/><rect x="832" y="284" width="11" height="3" fill="#c8ecff" opacity="0.6" transform="rotate(160 832 284)"/><rect x="1097" y="243" width="9" height="4" fill="#ffd0a0" opacity="1.0" transform="rotate(31 1097 243)"/><rect x="784" y="187" width="11" height="4" fill="#e8d8ff" opacity="0.7" transform="rotate(116 784 187)"/><rect x="1057" y="417" width="11" height="4" fill="#ffffff" opacity="0.7" transform="rotate(100 1057 417)"/><rect x="1030" y="351" width="8" height="4" fill="#c8ecff" opacity="0.7" transform="rotate(159 1030 351)"/><rect x="758" y="214" width="11" height="4" fill="#c8ecff" opacity="0.9" transform="rotate(111 758 214)"/><rect x="798" y="579" width="8" height="4" fill="#ffe0e8" opacity="1.0" transform="rotate(47 798 579)"/><rect x="901" y="132" width="8" height="3" fill="#ffb8b8" opacity="0.7" transform="rotate(27 901 132)"/><rect x="1088" y="348" width="8" height="3" fill="#c8ffd8" opacity="0.6" transform="rotate(70 1088 348)"/><rect x="1372" y="683" width="9" height="3" fill="#ffffff" opacity="0.7" transform="rotate(177 1372 683)"/><rect x="779" y="113" width="12" height="4" fill="#c8ffd8" opacity="0.9" transform="rotate(103 779 113)"/><rect x="1251" y="677" width="10" height="4" fill="#302838" opacity="0.9" transform="rotate(158 1251 677)"/><rect x="816" y="682" width="9" height="3" fill="#c8ffd8" opacity="0.6" transform="rotate(113 816 682)"/><rect x="765" y="194" width="9" height="4" fill="#ffffff" opacity="0.9" transform="rotate(28 765 194)"/><rect x="833" y="364" width="10" height="4" fill="#ffffff" opacity="0.9" transform="rotate(33 833 364)"/><rect x="848" y="311" width="9" height="4" fill="#fff0b0" opacity="0.8" transform="rotate(7 848 311)"/><rect x="1155" y="573" width="9" height="4" fill="#ffffff" opacity="0.7" transform="rotate(82 1155 573)"/><rect x="945" y="410" width="10" height="4" fill="#ffffff" opacity="0.8" transform="rotate(94 945 410)"/><rect x="923" y="168" width="11" height="3" fill="#ffffff" opacity="0.7" transform="rotate(177 923 168)"/><rect x="830" y="202" width="9" height="3" fill="#ffd0a0" opacity="1.0" transform="rotate(14 830 202)"/><rect x="870" y="559" width="8" height="4" fill="#c8ecff" opacity="0.8" transform="rotate(169 870 559)"/><rect x="1184" y="795" width="12" height="4" fill="#ffe0e8" opacity="1.0" transform="rotate(30 1184 795)"/><rect x="784" y="648" width="10" height="3" fill="#ffd0a0" opacity="0.7" transform="rotate(173 784 648)"/><rect x="755" y="665" width="11" height="4" fill="#ffd0a0" opacity="0.9" transform="rotate(179 755 665)"/><rect x="808" y="100" width="8" height="4" fill="#fff0b0" opacity="0.8" transform="rotate(46 808 100)"/><rect x="1324" y="385" width="11" height="4" fill="#e8d8ff" opacity="0.9" transform="rotate(64 1324 385)"/><rect x="712" y="384" width="10" height="4" fill="#ffffff" opacity="0.9" transform="rotate(167 712 384)"/><rect x="1080" y="68" width="9" height="4" fill="#302838" opacity="0.7" transform="rotate(96 1080 68)"/><rect x="863" y="761" width="8" height="3" fill="#e8d8ff" opacity="0.9" transform="rotate(42 863 761)"/><rect x="819" y="628" width="8" height="4" fill="#302838" opacity="0.8" transform="rotate(96 819 628)"/><rect x="1545" y="782" width="10" height="4" fill="#c8ecff" opacity="0.8" transform="rotate(53 1545 782)"/><rect x="1251" y="425" width="11" height="4" fill="#ffb8b8" opacity="0.8" transform="rotate(159 1251 425)"/><rect x="1098" y="335" width="10" height="4" fill="#c8ecff" opacity="0.9" transform="rotate(163 1098 335)"/><rect x="770" y="399" width="10" height="4" fill="#ffffff" opacity="0.9" transform="rotate(1 770 399)"/><rect x="776" y="557" width="9" height="4" fill="#fff0b0" opacity="0.9" transform="rotate(180 776 557)"/><rect x="993" y="510" width="10" height="3" fill="#e8d8ff" opacity="0.9" transform="rotate(110 993 510)"/><rect x="1253" y="647" width="11" height="3" fill="#fff0b0" opacity="0.8" transform="rotate(38 1253 647)"/><rect x="1112" y="271" width="11" height="4" fill="#c8ecff" opacity="0.8" transform="rotate(85 1112 271)"/><rect x="915" y="227" width="7" height="3" fill="#e8d8ff" opacity="0.8" transform="rotate(64 915 227)"/><rect x="1131" y="403" width="8" height="4" fill="#ffe0e8" opacity="0.9" transform="rotate(175 1131 403)"/><rect x="925" y="265" width="10" height="4" fill="#f0f0ff" opacity="0.6" transform="rotate(141 925 265)"/><rect x="1213" y="708" width="10" height="3" fill="#c8ecff" opacity="0.6" transform="rotate(54 1213 708)"/><rect x="522" y="658" width="7" height="4" fill="#fff0b0" opacity="0.8" transform="rotate(98 522 658)"/><rect x="1055" y="501" width="10" height="4" fill="#ffd0a0" opacity="0.7" transform="rotate(123 1055 501)"/><rect x="884" y="507" width="10" height="4" fill="#ffd0a0" opacity="0.6" transform="rotate(76 884 507)"/><rect x="932" y="11" width="8" height="3" fill="#fff0b0" opacity="0.9" transform="rotate(128 932 11)"/><rect x="899" y="337" width="10" height="4" fill="#ffffff" opacity="0.8" transform="rotate(10 899 337)"/><rect x="1259" y="660" width="11" height="4" fill="#ffe0e8" opacity="0.8" transform="rotate(125 1259 660)"/><rect x="759" y="380" width="9" height="3" fill="#fff0b0" opacity="0.7" transform="rotate(116 759 380)"/><rect x="960" y="502" width="10" height="4" fill="#ffe0e8" opacity="0.7" transform="rotate(155 960 502)"/><rect x="1006" y="575" width="8" height="4" fill="#fff0b0" opacity="0.6" transform="rotate(34 1006 575)"/><rect x="1307" y="584" width="11" height="4" fill="#ffffff" opacity="0.7" transform="rotate(168 1307 584)"/><rect x="1174" y="574" width="7" height="3" fill="#ffe0e8" opacity="0.9" transform="rotate(117 1174 574)"/><rect x="886" y="311" width="12" height="4" fill="#302838" opacity="0.7" transform="rotate(110 886 311)"/><rect x="1316" y="582" width="9" height="3" fill="#ffd0a0" opacity="0.6" transform="rotate(174 1316 582)"/><rect x="716" y="131" width="9" height="3" fill="#ffb8b8" opacity="0.7" transform="rotate(136 716 131)"/><rect x="1025" y="49" width="11" height="4" fill="#ffffff" opacity="0.8" transform="rotate(60 1025 49)"/><rect x="797" y="665" width="9" height="4" fill="#302838" opacity="0.9" transform="rotate(68 797 665)"/><rect x="853" y="617" width="8" height="4" fill="#ffb8b8" opacity="0.7" transform="rotate(124 853 617)"/><rect x="666" y="338" width="11" height="3" fill="#302838" opacity="0.9" transform="rotate(150 666 338)"/><rect x="841" y="118" width="11" height="4" fill="#f0f0ff" opacity="0.8" transform="rotate(140 841 118)"/><rect x="1019" y="68" width="11" height="4" fill="#ffd0a0" opacity="0.8" transform="rotate(42 1019 68)"/><rect x="861" y="316" width="11" height="4" fill="#c8ffd8" opacity="0.6" transform="rotate(106 861 316)"/><rect x="1319" y="368" width="11" height="3" fill="#f0f0ff" opacity="1.0" transform="rotate(104 1319 368)"/><rect x="1168" y="257" width="10" height="3" fill="#ffb8b8" opacity="0.6" transform="rotate(38 1168 257)"/><rect x="808" y="290" width="10" height="3" fill="#e8d8ff" opacity="1.0" transform="rotate(8 808 290)"/><rect x="876" y="693" width="9" height="4" fill="#ffffff" opacity="0.7" transform="rotate(15 876 693)"/><rect x="951" y="276" width="7" height="4" fill="#302838" opacity="0.8" transform="rotate(156 951 276)"/><rect x="986" y="171" width="12" height="3" fill="#302838" opacity="0.8" transform="rotate(17 986 171)"/><rect x="1197" y="655" width="7" height="3" fill="#ffffff" opacity="0.6" transform="rotate(33 1197 655)"/><rect x="945" y="564" width="9" height="4" fill="#ffd0a0" opacity="0.9" transform="rotate(161 945 564)"/><rect x="1362" y="318" width="8" height="4" fill="#ffd0a0" opacity="1.0" transform="rotate(115 1362 318)"/><rect x="1373" y="405" width="8" height="4" fill="#c8ecff" opacity="0.7" transform="rotate(67 1373 405)"/><rect x="1042" y="138" width="10" height="3" fill="#f0f0ff" opacity="0.7" transform="rotate(165 1042 138)"/><rect x="957" y="568" width="10" height="4" fill="#ffffff" opacity="0.7" transform="rotate(10 957 568)"/><rect x="878" y="752" width="10" height="4" fill="#ffb8b8" opacity="0.7" transform="rotate(19 878 752)"/><rect x="839" y="312" width="9" height="4" fill="#ffd0a0" opacity="0.9" transform="rotate(79 839 312)"/><rect x="1111" y="639" width="8" height="4" fill="#e8d8ff" opacity="0.8" transform="rotate(14 1111 639)"/><rect x="1192" y="711" width="7" height="4" fill="#ffffff" opacity="0.9" transform="rotate(152 1192 711)"/><rect x="1246" y="778" width="9" height="3" fill="#e8d8ff" opacity="0.7" transform="rotate(21 1246 778)"/><rect x="1242" y="177" width="10" height="3" fill="#c8ffd8" opacity="0.7" transform="rotate(157 1242 177)"/><rect x="1086" y="197" width="7" height="4" fill="#ffb8b8" opacity="0.9" transform="rotate(53 1086 197)"/><rect x="794" y="393" width="8" height="4" fill="#ffd0a0" opacity="1.0" transform="rotate(10 794 393)"/><rect x="1573" y="740" width="10" height="4" fill="#e8d8ff" opacity="0.9" transform="rotate(21 1573 740)"/><rect x="979" y="346" width="8" height="4" fill="#ffb8b8" opacity="0.7" transform="rotate(75 979 346)"/><rect x="1105" y="115" width="9" height="4" fill="#f0f0ff" opacity="0.8" transform="rotate(92 1105 115)"/><rect x="957" y="229" width="9" height="3" fill="#f0f0ff" opacity="0.9" transform="rotate(33 957 229)"/><rect x="1050" y="616" width="11" height="3" fill="#302838" opacity="0.6" transform="rotate(14 1050 616)"/><rect x="1001" y="585" width="8" height="4" fill="#ffb8b8" opacity="0.7" transform="rotate(113 1001 585)"/><rect x="887" y="162" width="7" height="4" fill="#ffffff" opacity="0.9" transform="rotate(73 887 162)"/><rect x="885" y="415" width="10" height="4" fill="#ffffff" opacity="0.8" transform="rotate(16 885 415)"/><rect x="1092" y="107" width="8" height="4" fill="#e8d8ff" opacity="0.6" transform="rotate(177 1092 107)"/><rect x="1128" y="460" width="12" height="4" fill="#c8ecff" opacity="0.7" transform="rotate(13 1128 460)"/><rect x="788" y="653" width="11" height="3" fill="#ffffff" opacity="0.8" transform="rotate(128 788 653)"/><rect x="1221" y="233" width="9" height="3" fill="#c8ecff" opacity="0.7" transform="rotate(145 1221 233)"/><rect x="1299" y="774" width="8" height="3" fill="#ffffff" opacity="0.7" transform="rotate(18 1299 774)"/><rect x="983" y="16" width="11" height="4" fill="#ffffff" opacity="0.7" transform="rotate(84 983 16)"/><rect x="875" y="82" width="11" height="3" fill="#f0f0ff" opacity="0.8" transform="rotate(22 875 82)"/><rect x="1095" y="609" width="11" height="4" fill="#ffd0a0" opacity="0.7" transform="rotate(41 1095 609)"/><rect x="1066" y="458" width="11" height="3" fill="#c8ffd8" opacity="1.0" transform="rotate(149 1066 458)"/><rect x="706" y="555" width="7" height="4" fill="#c8ffd8" opacity="0.7" transform="rotate(9 706 555)"/><rect x="855" y="192" width="9" height="4" fill="#e8d8ff" opacity="0.9" transform="rotate(177 855 192)"/><rect x="1043" y="652" width="10" height="4" fill="#c8ffd8" opacity="0.7" transform="rotate(168 1043 652)"/><rect x="922" y="530" width="7" height="3" fill="#c8ecff" opacity="0.7" transform="rotate(34 922 530)"/><rect x="1110" y="404" width="12" height="4" fill="#ffffff" opacity="0.9" transform="rotate(169 1110 404)"/><rect x="1000" y="27" width="8" height="4" fill="#ffffff" opacity="0.8" transform="rotate(49 1000 27)"/><rect x="989" y="497" width="9" height="4" fill="#ffd0a0" opacity="0.7" transform="rotate(52 989 497)"/><rect x="1357" y="767" width="12" height="4" fill="#fff0b0" opacity="0.8" transform="rotate(15 1357 767)"/><rect x="556" y="352" width="12" height="4" fill="#f0f0ff" opacity="0.9" transform="rotate(49 556 352)"/><rect x="962" y="230" width="9" height="4" fill="#f0f0ff" opacity="0.8" transform="rotate(40 962 230)"/><rect x="675" y="568" width="10" height="4" fill="#c8ecff" opacity="0.7" transform="rotate(56 675 568)"/><rect x="1040" y="151" width="10" height="4" fill="#fff0b0" opacity="1.0" transform="rotate(71 1040 151)"/><rect x="1016" y="689" width="9" height="3" fill="#ffffff" opacity="0.7" transform="rotate(178 1016 689)"/><rect x="1355" y="697" width="9" height="3" fill="#ffe0e8" opacity="0.8" transform="rotate(70 1355 697)"/><rect x="1326" y="417" width="12" height="4" fill="#c8ecff" opacity="0.7" transform="rotate(120 1326 417)"/><rect x="966" y="493" width="11" height="4" fill="#ffffff" opacity="0.9" transform="rotate(93 966 493)"/><rect x="818" y="215" width="11" height="4" fill="#f0f0ff" opacity="0.8" transform="rotate(19 818 215)"/><rect x="746" y="469" width="9" height="4" fill="#ffb8b8" opacity="0.8" transform="rotate(103 746 469)"/><rect x="771" y="698" width="9" height="4" fill="#c8ffd8" opacity="0.7" transform="rotate(130 771 698)"/><rect x="853" y="421" width="10" height="4" fill="#ffffff" opacity="0.9" transform="rotate(1 853 421)"/><rect x="914" y="305" width="11" height="4" fill="#e8d8ff" opacity="0.7" transform="rotate(68 914 305)"/><rect x="1212" y="259" width="11" height="4" fill="#c8ffd8" opacity="0.7" transform="rotate(173 1212 259)"/><rect x="1054" y="713" width="8" height="4" fill="#ffb8b8" opacity="0.8" transform="rotate(54 1054 713)"/><rect x="976" y="431" width="12" height="4" fill="#c8ffd8" opacity="0.9" transform="rotate(93 976 431)"/><rect x="1300" y="371" width="9" height="3" fill="#c8ffd8" opacity="0.7" transform="rotate(12 1300 371)"/><rect x="1065" y="300" width="9" height="4" fill="#c8ffd8" opacity="1.0" transform="rotate(103 1065 300)"/><rect x="707" y="389" width="12" height="4" fill="#fff0b0" opacity="0.9" transform="rotate(95 707 389)"/><rect x="1090" y="290" width="9" height="3" fill="#ffd0a0" opacity="0.7" transform="rotate(56 1090 290)"/><rect x="791" y="716" width="12" height="4" fill="#ffb8b8" opacity="0.7" transform="rotate(76 791 716)"/><rect x="513" y="653" width="8" height="4" fill="#302838" opacity="0.6" transform="rotate(74 513 653)"/><rect x="531" y="483" width="10" height="3" fill="#ffb8b8" opacity="0.9" transform="rotate(74 531 483)"/><rect x="1190" y="442" width="7" height="3" fill="#f0f0ff" opacity="0.7" transform="rotate(5 1190 442)"/><rect x="874" y="454" width="11" height="4" fill="#c8ecff" opacity="0.7" transform="rotate(93 874 454)"/><rect x="1076" y="329" width="11" height="3" fill="#f0f0ff" opacity="0.7" transform="rotate(18 1076 329)"/><rect x="1078" y="392" width="9" height="4" fill="#ffd0a0" opacity="0.9" transform="rotate(144 1078 392)"/><rect x="802" y="616" width="9" height="3" fill="#302838" opacity="0.6" transform="rotate(48 802 616)"/><rect x="1335" y="499" width="7" height="3" fill="#ffffff" opacity="0.9" transform="rotate(71 1335 499)"/><rect x="875" y="352" width="7" height="4" fill="#ffffff" opacity="0.7" transform="rotate(154 875 352)"/><rect x="894" y="243" width="10" height="4" fill="#c8ecff" opacity="1.0" transform="rotate(89 894 243)"/><rect x="838" y="542" width="9" height="4" fill="#c8ecff" opacity="0.6" transform="rotate(128 838 542)"/><rect x="756" y="303" width="7" height="4" fill="#e8d8ff" opacity="0.7" transform="rotate(71 756 303)"/><rect x="817" y="427" width="7" height="3" fill="#c8ecff" opacity="0.7" transform="rotate(149 817 427)"/><rect x="1124" y="310" width="9" height="4" fill="#ffffff" opacity="0.7" transform="rotate(78 1124 310)"/><rect x="1157" y="273" width="7" height="3" fill="#ffffff" opacity="0.7" transform="rotate(150 1157 273)"/><rect x="1268" y="374" width="11" height="3" fill="#c8ffd8" opacity="0.7" transform="rotate(66 1268 374)"/><rect x="1121" y="302" width="12" height="4" fill="#fff0b0" opacity="0.8" transform="rotate(41 1121 302)"/><rect x="937" y="754" width="12" height="4" fill="#f0f0ff" opacity="1.0" transform="rotate(79 937 754)"/><rect x="896" y="197" width="11" height="3" fill="#ffb8b8" opacity="0.8" transform="rotate(92 896 197)"/><rect x="876" y="589" width="11" height="3" fill="#ffffff" opacity="0.7" transform="rotate(129 876 589)"/><rect x="1097" y="312" width="11" height="3" fill="#f0f0ff" opacity="0.6" transform="rotate(119 1097 312)"/><rect x="1085" y="731" width="11" height="4" fill="#ffe0e8" opacity="0.9" transform="rotate(35 1085 731)"/><rect x="1180" y="181" width="8" height="4" fill="#ffd0a0" opacity="0.9" transform="rotate(164 1180 181)"/><rect x="1312" y="689" width="8" height="3" fill="#ffd0a0" opacity="0.9" transform="rotate(5 1312 689)"/><rect x="1036" y="553" width="11" height="4" fill="#ffd0a0" opacity="0.8" transform="rotate(180 1036 553)"/><rect x="966" y="217" width="10" height="3" fill="#302838" opacity="0.8" transform="rotate(122 966 217)"/><rect x="952" y="242" width="9" height="4" fill="#302838" opacity="0.9" transform="rotate(32 952 242)"/><rect x="1032" y="398" width="10" height="4" fill="#ffffff" opacity="0.8" transform="rotate(121 1032 398)"/><rect x="809" y="89" width="11" height="4" fill="#ffd0a0" opacity="1.0" transform="rotate(125 809 89)"/><rect x="723" y="89" width="8" height="4" fill="#c8ffd8" opacity="0.6" transform="rotate(135 723 89)"/><rect x="826" y="798" width="10" height="4" fill="#e8d8ff" opacity="0.8" transform="rotate(171 826 798)"/><rect x="871" y="553" width="11" height="4" fill="#ffffff" opacity="0.8" transform="rotate(113 871 553)"/><rect x="1093" y="541" width="11" height="4" fill="#f0f0ff" opacity="0.7" transform="rotate(88 1093 541)"/><rect x="1245" y="209" width="10" height="4" fill="#c8ecff" opacity="0.8" transform="rotate(115 1245 209)"/><rect x="1128" y="771" width="7" height="4" fill="#ffffff" opacity="0.9" transform="rotate(25 1128 771)"/><rect x="1191" y="536" width="8" height="3" fill="#ffd0a0" opacity="0.8" transform="rotate(93 1191 536)"/><rect x="867" y="281" width="8" height="4" fill="#f0f0ff" opacity="0.9" transform="rotate(60 867 281)"/><rect x="1399" y="340" width="12" height="4" fill="#c8ffd8" opacity="1.0" transform="rotate(28 1399 340)"/><rect x="1164" y="665" width="9" height="3" fill="#c8ecff" opacity="0.7" transform="rotate(11 1164 665)"/><rect x="1155" y="770" width="8" height="4" fill="#f0f0ff" opacity="0.7" transform="rotate(102 1155 770)"/><rect x="990" y="794" width="11" height="4" fill="#ffffff" opacity="0.6" transform="rotate(101 990 794)"/><rect x="863" y="765" width="9" height="4" fill="#ffe0e8" opacity="0.7" transform="rotate(58 863 765)"/><rect x="590" y="516" width="10" height="3" fill="#ffffff" opacity="0.7" transform="rotate(44 590 516)"/><rect x="480" y="770" width="10" height="4" fill="#ffb8b8" opacity="0.6" transform="rotate(123 480 770)"/><rect x="912" y="594" width="11" height="3" fill="#e8d8ff" opacity="0.8" transform="rotate(66 912 594)"/><rect x="1149" y="670" width="8" height="3" fill="#c8ffd8" opacity="0.9" transform="rotate(19 1149 670)"/><rect x="1312" y="724" width="9" height="3" fill="#ffe0e8" opacity="0.8" transform="rotate(54 1312 724)"/><rect x="929" y="111" width="9" height="4" fill="#c8ecff" opacity="0.8" transform="rotate(153 929 111)"/><rect x="1489" y="578" width="11" height="4" fill="#ffd0a0" opacity="0.7" transform="rotate(77 1489 578)"/><rect x="995" y="44" width="11" height="3" fill="#fff0b0" opacity="1.0" transform="rotate(2 995 44)"/><rect x="1115" y="723" width="9" height="4" fill="#ffe0e8" opacity="0.7" transform="rotate(63 1115 723)"/><rect x="1154" y="434" width="10" height="4" fill="#fff0b0" opacity="0.9" transform="rotate(96 1154 434)"/><rect x="1403" y="779" width="11" height="3" fill="#ffb8b8" opacity="0.8" transform="rotate(122 1403 779)"/><rect x="913" y="452" width="9" height="4" fill="#e8d8ff" opacity="0.7" transform="rotate(118 913 452)"/><rect x="698" y="424" width="8" height="4" fill="#302838" opacity="0.7" transform="rotate(124 698 424)"/><rect x="705" y="298" width="10" height="4" fill="#c8ffd8" opacity="0.8" transform="rotate(95 705 298)"/><rect x="1056" y="209" width="8" height="4" fill="#ffd0a0" opacity="0.9" transform="rotate(40 1056 209)"/><rect x="768" y="201" width="8" height="4" fill="#302838" opacity="0.8" transform="rotate(20 768 201)"/><rect x="1010" y="453" width="11" height="4" fill="#f0f0ff" opacity="0.7" transform="rotate(144 1010 453)"/><rect x="905" y="440" width="8" height="4" fill="#ffd0a0" opacity="0.6" transform="rotate(130 905 440)"/><rect x="661" y="314" width="8" height="4" fill="#fff0b0" opacity="0.9" transform="rotate(101 661 314)"/><rect x="843" y="299" width="7" height="3" fill="#ffffff" opacity="1.0" transform="rotate(126 843 299)"/><rect x="863" y="240" width="11" height="4" fill="#c8ecff" opacity="0.8" transform="rotate(160 863 240)"/><rect x="1397" y="450" width="8" height="4" fill="#ffd0a0" opacity="0.9" transform="rotate(61 1397 450)"/><rect x="817" y="191" width="10" height="4" fill="#302838" opacity="0.8" transform="rotate(64 817 191)"/><rect x="884" y="283" width="10" height="3" fill="#e8d8ff" opacity="0.7" transform="rotate(164 884 283)"/><rect x="1106" y="155" width="9" height="4" fill="#ffffff" opacity="0.6" transform="rotate(105 1106 155)"/><rect x="1141" y="390" width="8" height="4" fill="#fff0b0" opacity="0.9" transform="rotate(157 1141 390)"/><rect x="1072" y="471" width="8" height="4" fill="#ffffff" opacity="0.7" transform="rotate(137 1072 471)"/><rect x="1187" y="121" width="7" height="3" fill="#c8ffd8" opacity="0.9" transform="rotate(147 1187 121)"/><rect x="628" y="674" width="12" height="4" fill="#302838" opacity="0.7" transform="rotate(81 628 674)"/><rect x="814" y="414" width="9" height="3" fill="#e8d8ff" opacity="0.7" transform="rotate(112 814 414)"/><rect x="1235" y="582" width="9" height="4" fill="#e8d8ff" opacity="0.7" transform="rotate(169 1235 582)"/><rect x="966" y="463" width="9" height="4" fill="#ffd0a0" opacity="0.7" transform="rotate(8 966 463)"/><rect x="1015" y="51" width="9" height="4" fill="#ffffff" opacity="0.7" transform="rotate(105 1015 51)"/><rect x="1098" y="732" width="8" height="4" fill="#ffb8b8" opacity="0.6" transform="rotate(103 1098 732)"/><rect x="920" y="634" width="8" height="4" fill="#e8d8ff" opacity="0.6" transform="rotate(25 920 634)"/><rect x="617" y="592" width="9" height="4" fill="#e8d8ff" opacity="0.6" transform="rotate(73 617 592)"/><rect x="970" y="537" width="11" height="4" fill="#c8ecff" opacity="1.0" transform="rotate(91 970 537)"/><rect x="1112" y="797" width="11" height="4" fill="#ffb8b8" opacity="0.8" transform="rotate(73 1112 797)"/><rect x="1154" y="744" width="10" height="3" fill="#302838" opacity="0.7" transform="rotate(130 1154 744)"/><rect x="1183" y="441" width="12" height="4" fill="#302838" opacity="0.7" transform="rotate(14 1183 441)"/><rect x="922" y="283" width="9" height="4" fill="#ffe0e8" opacity="0.9" transform="rotate(124 922 283)"/><rect x="916" y="671" width="11" height="4" fill="#c8ecff" opacity="0.9" transform="rotate(137 916 671)"/><rect x="1135" y="564" width="8" height="4" fill="#f0f0ff" opacity="0.8" transform="rotate(36 1135 564)"/><rect x="1122" y="518" width="12" height="4" fill="#302838" opacity="0.9" transform="rotate(14 1122 518)"/><rect x="1284" y="273" width="8" height="3" fill="#ffd0a0" opacity="1.0" transform="rotate(97 1284 273)"/><rect x="1153" y="258" width="11" height="3" fill="#e8d8ff" opacity="0.8" transform="rotate(88 1153 258)"/><rect x="1015" y="140" width="11" height="3" fill="#302838" opacity="0.9" transform="rotate(110 1015 140)"/><rect x="1372" y="320" width="7" height="3" fill="#c8ffd8" opacity="0.7" transform="rotate(118 1372 320)"/><rect x="811" y="491" width="11" height="3" fill="#fff0b0" opacity="0.7" transform="rotate(17 811 491)"/><rect x="1104" y="424" width="9" height="4" fill="#fff0b0" opacity="0.9" transform="rotate(122 1104 424)"/><rect x="793" y="526" width="10" height="3" fill="#ffffff" opacity="0.7" transform="rotate(133 793 526)"/><rect x="1027" y="611" width="11" height="4" fill="#f0f0ff" opacity="0.7" transform="rotate(82 1027 611)"/><rect x="799" y="424" width="8" height="3" fill="#e8d8ff" opacity="0.6" transform="rotate(100 799 424)"/><rect x="1475" y="750" width="10" height="3" fill="#fff0b0" opacity="0.7" transform="rotate(98 1475 750)"/><rect x="763" y="207" width="12" height="4" fill="#f0f0ff" opacity="0.9" transform="rotate(154 763 207)"/><rect x="853" y="23" width="8" height="4" fill="#e8d8ff" opacity="0.9" transform="rotate(90 853 23)"/><rect x="835" y="721" width="11" height="3" fill="#ffd0a0" opacity="0.6" transform="rotate(119 835 721)"/><rect x="1121" y="731" width="10" height="4" fill="#c8ffd8" opacity="0.8" transform="rotate(41 1121 731)"/><rect x="841" y="756" width="8" height="3" fill="#c8ecff" opacity="0.7" transform="rotate(78 841 756)"/><rect x="894" y="261" width="9" height="3" fill="#302838" opacity="0.8" transform="rotate(158 894 261)"/><rect x="1079" y="615" width="12" height="3" fill="#ffffff" opacity="0.6" transform="rotate(54 1079 615)"/><rect x="1090" y="388" width="10" height="4" fill="#c8ecff" opacity="0.8" transform="rotate(82 1090 388)"/><rect x="884" y="681" width="11" height="3" fill="#c8ffd8" opacity="0.8" transform="rotate(139 884 681)"/><rect x="1230" y="691" width="7" height="3" fill="#ffb8b8" opacity="0.6" transform="rotate(175 1230 691)"/><rect x="986" y="121" width="7" height="3" fill="#e8d8ff" opacity="0.6" transform="rotate(123 986 121)"/><rect x="865" y="514" width="9" height="4" fill="#ffd0a0" opacity="0.7" transform="rotate(105 865 514)"/><rect x="770" y="552" width="7" height="4" fill="#ffe0e8" opacity="0.8" transform="rotate(42 770 552)"/><rect x="1518" y="583" width="7" height="3" fill="#f0f0ff" opacity="1.0" transform="rotate(172 1518 583)"/><rect x="1121" y="343" width="8" height="4" fill="#f0f0ff" opacity="0.9" transform="rotate(27 1121 343)"/><rect x="410" y="795" width="12" height="3" fill="#c8ecff" opacity="0.9" transform="rotate(175 410 795)"/><rect x="896" y="585" width="8" height="3" fill="#ffffff" opacity="0.6" transform="rotate(48 896 585)"/><rect x="1269" y="157" width="12" height="3" fill="#ffffff" opacity="0.6" transform="rotate(59 1269 157)"/><rect x="1109" y="435" width="10" height="4" fill="#ffb8b8" opacity="0.9" transform="rotate(177 1109 435)"/><rect x="902" y="319" width="12" height="4" fill="#fff0b0" opacity="0.8" transform="rotate(69 902 319)"/><rect x="1266" y="718" width="10" height="3" fill="#302838" opacity="1.0" transform="rotate(90 1266 718)"/><rect x="1478" y="584" width="10" height="3" fill="#ffffff" opacity="0.6" transform="rotate(112 1478 584)"/><rect x="969" y="325" width="10" height="4" fill="#ffffff" opacity="0.9" transform="rotate(80 969 325)"/><rect x="1495" y="777" width="11" height="4" fill="#c8ecff" opacity="1.0" transform="rotate(107 1495 777)"/><rect x="993" y="660" width="11" height="4" fill="#f0f0ff" opacity="0.6" transform="rotate(64 993 660)"/><rect x="811" y="213" width="7" height="4" fill="#ffb8b8" opacity="1.0" transform="rotate(120 811 213)"/><rect x="711" y="210" width="11" height="4" fill="#302838" opacity="0.8" transform="rotate(63 711 210)"/><rect x="1234" y="177" width="10" height="4" fill="#c8ecff" opacity="0.9" transform="rotate(95 1234 177)"/><rect x="1438" y="539" width="8" height="4" fill="#ffd0a0" opacity="1.0" transform="rotate(32 1438 539)"/><rect x="1260" y="694" width="11" height="4" fill="#ffb8b8" opacity="0.7" transform="rotate(22 1260 694)"/><rect x="1042" y="300" width="9" height="4" fill="#ffd0a0" opacity="0.7" transform="rotate(94 1042 300)"/><rect x="876" y="798" width="9" height="4" fill="#ffd0a0" opacity="0.7" transform="rotate(137 876 798)"/><rect x="832" y="104" width="10" height="4" fill="#ffb8b8" opacity="0.9" transform="rotate(94 832 104)"/><rect x="1126" y="456" width="11" height="3" fill="#ffffff" opacity="0.7" transform="rotate(58 1126 456)"/><rect x="1023" y="73" width="11" height="3" fill="#302838" opacity="0.9" transform="rotate(76 1023 73)"/><rect x="1368" y="625" width="9" height="3" fill="#c8ffd8" opacity="1.0" transform="rotate(136 1368 625)"/><rect x="802" y="519" width="11" height="4" fill="#302838" opacity="0.8" transform="rotate(69 802 519)"/><rect x="1245" y="153" width="9" height="4" fill="#ffffff" opacity="0.6" transform="rotate(59 1245 153)"/><rect x="934" y="304" width="10" height="4" fill="#ffffff" opacity="0.9" transform="rotate(162 934 304)"/><rect x="1203" y="86" width="9" height="4" fill="#c8ffd8" opacity="0.6" transform="rotate(32 1203 86)"/><rect x="855" y="393" width="10" height="4" fill="#c8ffd8" opacity="0.9" transform="rotate(121 855 393)"/><rect x="1160" y="433" width="9" height="4" fill="#ffe0e8" opacity="0.6" transform="rotate(83 1160 433)"/><rect x="903" y="457" width="7" height="4" fill="#ffffff" opacity="0.7" transform="rotate(153 903 457)"/><rect x="951" y="44" width="7" height="4" fill="#c8ffd8" opacity="0.8" transform="rotate(75 951 44)"/><rect x="681" y="653" width="11" height="3" fill="#ffffff" opacity="0.8" transform="rotate(60 681 653)"/><rect x="798" y="149" width="7" height="4" fill="#c8ffd8" opacity="0.7" transform="rotate(120 798 149)"/><rect x="925" y="409" width="9" height="3" fill="#c8ffd8" opacity="0.9" transform="rotate(55 925 409)"/><rect x="982" y="685" width="7" height="4" fill="#ffffff" opacity="0.8" transform="rotate(67 982 685)"/><rect x="1163" y="568" width="8" height="4" fill="#f0f0ff" opacity="0.8" transform="rotate(62 1163 568)"/><rect x="986" y="531" width="7" height="4" fill="#c8ecff" opacity="0.6" transform="rotate(148 986 531)"/><rect x="955" y="637" width="8" height="4" fill="#ffffff" opacity="0.8" transform="rotate(144 955 637)"/><rect x="971" y="325" width="8" height="3" fill="#fff0b0" opacity="0.6" transform="rotate(154 971 325)"/><rect x="799" y="690" width="7" height="4" fill="#f0f0ff" opacity="1.0" transform="rotate(32 799 690)"/><rect x="1085" y="590" width="11" height="4" fill="#fff0b0" opacity="0.8" transform="rotate(144 1085 590)"/><rect x="1085" y="117" width="8" height="3" fill="#ffffff" opacity="0.9" transform="rotate(17 1085 117)"/><rect x="904" y="332" width="12" height="4" fill="#fff0b0" opacity="0.6" transform="rotate(28 904 332)"/><rect x="901" y="33" width="8" height="3" fill="#f0f0ff" opacity="0.7" transform="rotate(105 901 33)"/><rect x="917" y="575" width="10" height="3" fill="#c8ecff" opacity="0.9" transform="rotate(170 917 575)"/><rect x="1134" y="313" width="7" height="4" fill="#f0f0ff" opacity="0.7" transform="rotate(115 1134 313)"/><rect x="1036" y="555" width="8" height="3" fill="#e8d8ff" opacity="0.6" transform="rotate(72 1036 555)"/><rect x="1072" y="98" width="12" height="4" fill="#e8d8ff" opacity="0.7" transform="rotate(95 1072 98)"/><rect x="1216" y="14" width="8" height="3" fill="#ffe0e8" opacity="0.8" transform="rotate(55 1216 14)"/><rect x="755" y="161" width="9" height="4" fill="#302838" opacity="1.0" transform="rotate(138 755 161)"/><rect x="1382" y="740" width="12" height="4" fill="#ffffff" opacity="0.9" transform="rotate(170 1382 740)"/><rect x="1049" y="385" width="9" height="4" fill="#ffe0e8" opacity="0.9" transform="rotate(20 1049 385)"/><rect x="576" y="579" width="8" height="3" fill="#ffffff" opacity="0.6" transform="rotate(71 576 579)"/><rect x="1093" y="411" width="7" height="4" fill="#e8d8ff" opacity="0.8" transform="rotate(24 1093 411)"/><rect x="977" y="61" width="10" height="3" fill="#ffffff" opacity="0.9" transform="rotate(1 977 61)"/><rect x="817" y="243" width="8" height="3" fill="#ffb8b8" opacity="0.7" transform="rotate(43 817 243)"/><rect x="1178" y="429" width="8" height="4" fill="#c8ecff" opacity="0.7" transform="rotate(91 1178 429)"/><rect x="1127" y="227" width="10" height="4" fill="#f0f0ff" opacity="0.9" transform="rotate(164 1127 227)"/><rect x="1020" y="401" width="12" height="4" fill="#c8ecff" opacity="0.8" transform="rotate(142 1020 401)"/><rect x="959" y="673" width="12" height="4" fill="#302838" opacity="0.6" transform="rotate(112 959 673)"/><rect x="1319" y="712" width="8" height="4" fill="#ffffff" opacity="0.9" transform="rotate(141 1319 712)"/><rect x="1175" y="657" width="7" height="4" fill="#fff0b0" opacity="0.7" transform="rotate(18 1175 657)"/><rect x="714" y="652" width="9" height="4" fill="#c8ffd8" opacity="1.0" transform="rotate(2 714 652)"/><rect x="1405" y="629" width="7" height="4" fill="#fff0b0" opacity="0.8" transform="rotate(27 1405 629)"/><rect x="764" y="176" width="12" height="4" fill="#e8d8ff" opacity="0.8" transform="rotate(86 764 176)"/><rect x="874" y="601" width="10" height="4" fill="#e8d8ff" opacity="0.6" transform="rotate(142 874 601)"/><rect x="872" y="466" width="11" height="4" fill="#ffb8b8" opacity="0.8" transform="rotate(139 872 466)"/><rect x="1549" y="663" width="11" height="4" fill="#c8ffd8" opacity="0.8" transform="rotate(144 1549 663)"/><rect x="824" y="309" width="10" height="4" fill="#302838" opacity="0.9" transform="rotate(92 824 309)"/><rect x="1096" y="425" width="12" height="4" fill="#c8ecff" opacity="0.9" transform="rotate(45 1096 425)"/><rect x="961" y="192" width="10" height="4" fill="#ffd0a0" opacity="0.8" transform="rotate(158 961 192)"/><rect x="1397" y="712" width="9" height="4" fill="#c8ffd8" opacity="0.7" transform="rotate(139 1397 712)"/><rect x="1083" y="325" width="7" height="4" fill="#302838" opacity="0.7" transform="rotate(151 1083 325)"/><rect x="766" y="723" width="9" height="4" fill="#ffffff" opacity="1.0" transform="rotate(171 766 723)"/><rect x="1068" y="335" width="10" height="4" fill="#e8d8ff" opacity="0.7" transform="rotate(60 1068 335)"/><rect x="939" y="315" width="9" height="4" fill="#c8ffd8" opacity="1.0" transform="rotate(34 939 315)"/><rect x="1004" y="529" width="11" height="3" fill="#fff0b0" opacity="0.6" transform="rotate(123 1004 529)"/><rect x="933" y="312" width="8" height="4" fill="#c8ffd8" opacity="1.0" transform="rotate(147 933 312)"/><rect x="1082" y="247" width="9" height="4" fill="#fff0b0" opacity="0.8" transform="rotate(142 1082 247)"/><rect x="1382" y="313" width="8" height="3" fill="#e8d8ff" opacity="0.9" transform="rotate(102 1382 313)"/><rect x="1018" y="541" width="12" height="4" fill="#fff0b0" opacity="0.9" transform="rotate(136 1018 541)"/><rect x="1336" y="743" width="7" height="4" fill="#e8d8ff" opacity="1.0" transform="rotate(80 1336 743)"/><rect x="820" y="244" width="11" height="4" fill="#ffffff" opacity="0.9" transform="rotate(169 820 244)"/><rect x="711" y="726" width="12" height="3" fill="#f0f0ff" opacity="0.9" transform="rotate(150 711 726)"/><rect x="992" y="302" width="9" height="4" fill="#ffffff" opacity="0.8" transform="rotate(27 992 302)"/><rect x="1057" y="110" width="10" height="4" fill="#302838" opacity="0.8" transform="rotate(8 1057 110)"/><rect x="904" y="513" width="8" height="4" fill="#c8ffd8" opacity="0.8" transform="rotate(52 904 513)"/><rect x="910" y="439" width="12" height="4" fill="#e8d8ff" opacity="1.0" transform="rotate(89 910 439)"/><rect x="1049" y="553" width="8" height="3" fill="#f0f0ff" opacity="0.9" transform="rotate(104 1049 553)"/><rect x="1138" y="278" width="11" height="3" fill="#ffb8b8" opacity="0.7" transform="rotate(133 1138 278)"/><rect x="1262" y="726" width="10" height="4" fill="#fff0b0" opacity="0.7" transform="rotate(140 1262 726)"/><rect x="1148" y="218" width="10" height="4" fill="#e8d8ff" opacity="0.9" transform="rotate(73 1148 218)"/><rect x="846" y="315" width="9" height="4" fill="#302838" opacity="0.7" transform="rotate(48 846 315)"/><rect x="1146" y="360" width="11" height="3" fill="#ffffff" opacity="0.9" transform="rotate(27 1146 360)"/><rect x="687" y="529" width="11" height="4" fill="#c8ffd8" opacity="0.8" transform="rotate(14 687 529)"/><rect x="914" y="423" width="8" height="4" fill="#302838" opacity="0.9" transform="rotate(7 914 423)"/><rect x="1243" y="244" width="10" height="4" fill="#f0f0ff" opacity="1.0" transform="rotate(176 1243 244)"/><rect x="1122" y="77" width="11" height="4" fill="#ffd0a0" opacity="0.7" transform="rotate(30 1122 77)"/><rect x="549" y="594" width="8" height="4" fill="#e8d8ff" opacity="0.9" transform="rotate(151 549 594)"/><rect x="807" y="320" width="11" height="4" fill="#c8ffd8" opacity="0.9" transform="rotate(26 807 320)"/><rect x="990" y="536" width="12" height="3" fill="#c8ffd8" opacity="0.6" transform="rotate(61 990 536)"/><rect x="1013" y="459" width="8" height="4" fill="#fff0b0" opacity="0.9" transform="rotate(141 1013 459)"/><rect x="1157" y="121" width="11" height="4" fill="#ffd0a0" opacity="1.0" transform="rotate(162 1157 121)"/><rect x="923" y="305" width="11" height="4" fill="#302838" opacity="0.9" transform="rotate(161 923 305)"/><rect x="1325" y="484" width="10" height="4" fill="#e8d8ff" opacity="0.7" transform="rotate(163 1325 484)"/><rect x="1437" y="541" width="9" height="4" fill="#e8d8ff" opacity="0.9" transform="rotate(13 1437 541)"/><rect x="942" y="175" width="9" height="4" fill="#ffffff" opacity="0.8" transform="rotate(80 942 175)"/><rect x="940" y="472" width="10" height="4" fill="#e8d8ff" opacity="0.7" transform="rotate(87 940 472)"/><rect x="946" y="772" width="10" height="3" fill="#ffb8b8" opacity="0.9" transform="rotate(100 946 772)"/><rect x="1116" y="672" width="7" height="4" fill="#c8ffd8" opacity="0.8" transform="rotate(5 1116 672)"/><rect x="762" y="300" width="12" height="3" fill="#c8ffd8" opacity="0.6" transform="rotate(16 762 300)"/><rect x="855" y="410" width="11" height="4" fill="#e8d8ff" opacity="1.0" transform="rotate(145 855 410)"/><rect x="896" y="526" width="8" height="4" fill="#ffd0a0" opacity="0.8" transform="rotate(104 896 526)"/><rect x="851" y="704" width="10" height="3" fill="#ffe0e8" opacity="0.9" transform="rotate(30 851 704)"/><rect x="875" y="589" width="10" height="4" fill="#c8ecff" opacity="0.9" transform="rotate(36 875 589)"/><rect x="1126" y="619" width="11" height="3" fill="#302838" opacity="0.6" transform="rotate(142 1126 619)"/><rect x="1405" y="576" width="7" height="3" fill="#ffd0a0" opacity="0.9" transform="rotate(2 1405 576)"/><rect x="692" y="430" width="10" height="3" fill="#fff0b0" opacity="0.6" transform="rotate(64 692 430)"/><rect x="863" y="553" width="9" height="3" fill="#e8d8ff" opacity="0.9" transform="rotate(128 863 553)"/><rect x="1151" y="729" width="11" height="4" fill="#ffe0e8" opacity="0.7" transform="rotate(148 1151 729)"/><rect x="988" y="423" width="9" height="4" fill="#ffb8b8" opacity="0.7" transform="rotate(169 988 423)"/><rect x="1288" y="756" width="12" height="4" fill="#c8ffd8" opacity="0.8" transform="rotate(132 1288 756)"/><rect x="849" y="171" width="7" height="4" fill="#ffffff" opacity="0.8" transform="rotate(141 849 171)"/><rect x="907" y="163" width="10" height="4" fill="#f0f0ff" opacity="0.7" transform="rotate(155 907 163)"/><rect x="579" y="708" width="8" height="3" fill="#ffe0e8" opacity="0.8" transform="rotate(163 579 708)"/><rect x="1010" y="78" width="12" height="4" fill="#ffd0a0" opacity="1.0" transform="rotate(103 1010 78)"/><rect x="901" y="566" width="11" height="3" fill="#ffd0a0" opacity="0.8" transform="rotate(85 901 566)"/><rect x="1029" y="690" width="12" height="4" fill="#302838" opacity="1.0" transform="rotate(85 1029 690)"/><rect x="945" y="113" width="8" height="4" fill="#c8ecff" opacity="0.8" transform="rotate(41 945 113)"/><rect x="939" y="507" width="11" height="3" fill="#ffffff" opacity="1.0" transform="rotate(17 939 507)"/><rect x="1101" y="192" width="10" height="4" fill="#ffb8b8" opacity="1.0" transform="rotate(115 1101 192)"/><rect x="949" y="33" width="9" height="4" fill="#ffe0e8" opacity="1.0" transform="rotate(137 949 33)"/><rect x="1024" y="150" width="10" height="3" fill="#ffffff" opacity="1.0" transform="rotate(142 1024 150)"/><rect x="852" y="519" width="7" height="4" fill="#f0f0ff" opacity="0.9" transform="rotate(110 852 519)"/><rect x="932" y="436" width="7" height="4" fill="#ffffff" opacity="0.9" transform="rotate(4 932 436)"/><rect x="1153" y="167" width="11" height="4" fill="#302838" opacity="1.0" transform="rotate(121 1153 167)"/><rect x="717" y="781" width="7" height="4" fill="#ffe0e8" opacity="0.9" transform="rotate(153 717 781)"/><rect x="941" y="247" width="8" height="4" fill="#c8ecff" opacity="0.7" transform="rotate(104 941 247)"/><rect x="842" y="91" width="9" height="4" fill="#ffe0e8" opacity="0.9" transform="rotate(110 842 91)"/><rect x="783" y="730" width="11" height="4" fill="#c8ffd8" opacity="0.9" transform="rotate(6 783 730)"/><rect x="1348" y="641" width="8" height="3" fill="#e8d8ff" opacity="0.9" transform="rotate(24 1348 641)"/><rect x="1131" y="757" width="10" height="4" fill="#e8d8ff" opacity="0.9" transform="rotate(112 1131 757)"/><rect x="990" y="219" width="7" height="3" fill="#e8d8ff" opacity="1.0" transform="rotate(160 990 219)"/><rect x="1124" y="1" width="8" height="4" fill="#ffffff" opacity="0.7" transform="rotate(14 1124 1)"/><rect x="838" y="660" width="9" height="4" fill="#f0f0ff" opacity="0.7" transform="rotate(174 838 660)"/><rect x="1171" y="43" width="8" height="4" fill="#ffd0a0" opacity="0.8" transform="rotate(168 1171 43)"/><rect x="1015" y="230" width="8" height="4" fill="#ffffff" opacity="0.7" transform="rotate(178 1015 230)"/><rect x="968" y="491" width="8" height="4" fill="#e8d8ff" opacity="0.8" transform="rotate(51 968 491)"/><rect x="1256" y="206" width="8" height="3" fill="#302838" opacity="0.9" transform="rotate(174 1256 206)"/><rect x="1028" y="62" width="10" height="3" fill="#ffffff" opacity="0.8" transform="rotate(13 1028 62)"/><rect x="485" y="519" width="12" height="4" fill="#c8ffd8" opacity="0.7" transform="rotate(162 485 519)"/><rect x="963" y="327" width="10" height="4" fill="#ffffff" opacity="0.6" transform="rotate(131 963 327)"/><rect x="1014" y="274" width="11" height="3" fill="#ffd0a0" opacity="0.9" transform="rotate(154 1014 274)"/><rect x="949" y="268" width="10" height="4" fill="#ffd0a0" opacity="0.6" transform="rotate(13 949 268)"/><rect x="916" y="529" width="7" height="4" fill="#ffb8b8" opacity="0.6" transform="rotate(151 916 529)"/><rect x="1169" y="522" width="10" height="3" fill="#fff0b0" opacity="0.6" transform="rotate(12 1169 522)"/><rect x="761" y="749" width="8" height="4" fill="#fff0b0" opacity="0.7" transform="rotate(133 761 749)"/><rect x="1211" y="418" width="8" height="3" fill="#c8ffd8" opacity="0.7" transform="rotate(143 1211 418)"/><rect x="1413" y="746" width="11" height="4" fill="#ffffff" opacity="0.7" transform="rotate(154 1413 746)"/><rect x="1038" y="210" width="7" height="3" fill="#ffb8b8" opacity="0.7" transform="rotate(68 1038 210)"/><rect x="974" y="93" width="8" height="4" fill="#ffffff" opacity="0.7" transform="rotate(31 974 93)"/><rect x="913" y="213" width="9" height="3" fill="#f0f0ff" opacity="0.6" transform="rotate(61 913 213)"/><rect x="982" y="178" width="11" height="4" fill="#c8ffd8" opacity="0.6" transform="rotate(154 982 178)"/><rect x="701" y="420" width="8" height="3" fill="#ffe0e8" opacity="0.7" transform="rotate(156 701 420)"/><rect x="1119" y="628" width="8" height="4" fill="#ffb8b8" opacity="0.6" transform="rotate(114 1119 628)"/><rect x="909" y="530" width="12" height="4" fill="#ffd0a0" opacity="0.6" transform="rotate(32 909 530)"/><rect x="1097" y="649" width="12" height="4" fill="#ffd0a0" opacity="0.6" transform="rotate(124 1097 649)"/><rect x="755" y="187" width="10" height="3" fill="#ffffff" opacity="1.0" transform="rotate(145 755 187)"/><rect x="992" y="686" width="9" height="4" fill="#302838" opacity="0.7" transform="rotate(33 992 686)"/><rect x="952" y="367" width="11" height="3" fill="#ffb8b8" opacity="0.9" transform="rotate(176 952 367)"/><rect x="705" y="599" width="10" height="4" fill="#ffffff" opacity="0.9" transform="rotate(72 705 599)"/><rect x="918" y="288" width="9" height="4" fill="#c8ecff" opacity="0.9" transform="rotate(134 918 288)"/><rect x="999" y="497" width="8" height="4" fill="#ffffff" opacity="1.0" transform="rotate(36 999 497)"/><rect x="1286" y="217" width="7" height="3" fill="#302838" opacity="0.9" transform="rotate(74 1286 217)"/><rect x="938" y="299" width="8" height="4" fill="#ffb8b8" opacity="0.8" transform="rotate(0 938 299)"/><rect x="692" y="485" width="9" height="3" fill="#c8ffd8" opacity="0.7" transform="rotate(101 692 485)"/><rect x="1034" y="418" width="10" height="4" fill="#fff0b0" opacity="0.7" transform="rotate(10 1034 418)"/><rect x="1017" y="64" width="10" height="3" fill="#c8ffd8" opacity="0.9" transform="rotate(27 1017 64)"/><rect x="785" y="656" width="12" height="4" fill="#fff0b0" opacity="0.9" transform="rotate(13 785 656)"/><rect x="681" y="696" width="11" height="4" fill="#ffe0e8" opacity="0.8" transform="rotate(118 681 696)"/><rect x="1114" y="357" width="9" height="4" fill="#f0f0ff" opacity="0.7" transform="rotate(122 1114 357)"/><rect x="1032" y="770" width="11" height="4" fill="#ffb8b8" opacity="0.9" transform="rotate(33 1032 770)"/><rect x="1081" y="515" width="9" height="4" fill="#ffffff" opacity="0.9" transform="rotate(46 1081 515)"/><rect x="634" y="499" width="11" height="3" fill="#ffd0a0" opacity="0.9" transform="rotate(86 634 499)"/><rect x="1067" y="712" width="9" height="3" fill="#ffe0e8" opacity="1.0" transform="rotate(175 1067 712)"/><rect x="1073" y="766" width="12" height="4" fill="#e8d8ff" opacity="0.9" transform="rotate(42 1073 766)"/><rect x="1186" y="304" width="9" height="4" fill="#ffb8b8" opacity="0.9" transform="rotate(180 1186 304)"/><rect x="1146" y="90" width="10" height="4" fill="#f0f0ff" opacity="0.7" transform="rotate(82 1146 90)"/><rect x="812" y="285" width="11" height="4" fill="#ffffff" opacity="0.8" transform="rotate(32 812 285)"/><rect x="1039" y="541" width="8" height="4" fill="#c8ecff" opacity="0.8" transform="rotate(53 1039 541)"/><rect x="750" y="508" width="11" height="4" fill="#ffb8b8" opacity="0.9" transform="rotate(35 750 508)"/><rect x="1037" y="519" width="9" height="4" fill="#ffffff" opacity="0.6" transform="rotate(138 1037 519)"/><rect x="1064" y="476" width="9" height="4" fill="#fff0b0" opacity="0.9" transform="rotate(5 1064 476)"/><rect x="1037" y="720" width="7" height="3" fill="#ffffff" opacity="0.7" transform="rotate(16 1037 720)"/><rect x="854" y="268" width="10" height="3" fill="#ffb8b8" opacity="0.8" transform="rotate(75 854 268)"/><rect x="1123" y="266" width="8" height="3" fill="#fff0b0" opacity="1.0" transform="rotate(9 1123 266)"/><rect x="896" y="633" width="11" height="4" fill="#f0f0ff" opacity="0.7" transform="rotate(89 896 633)"/><rect x="994" y="644" width="9" height="3" fill="#ffe0e8" opacity="0.7" transform="rotate(3 994 644)"/><rect x="466" y="642" width="7" height="4" fill="#ffffff" opacity="0.9" transform="rotate(34 466 642)"/><rect x="1004" y="633" width="10" height="4" fill="#302838" opacity="0.7" transform="rotate(25 1004 633)"/><rect x="1064" y="173" width="11" height="4" fill="#f0f0ff" opacity="0.8" transform="rotate(135 1064 173)"/><rect x="981" y="427" width="11" height="3" fill="#ffffff" opacity="0.9" transform="rotate(52 981 427)"/><rect x="930" y="492" width="12" height="3" fill="#ffb8b8" opacity="0.9" transform="rotate(56 930 492)"/><rect x="814" y="370" width="10" height="4" fill="#f0f0ff" opacity="0.8" transform="rotate(145 814 370)"/><rect x="1334" y="577" width="7" height="4" fill="#f0f0ff" opacity="0.6" transform="rotate(16 1334 577)"/><rect x="1100" y="189" width="8" height="3" fill="#f0f0ff" opacity="0.9" transform="rotate(58 1100 189)"/><rect x="1350" y="696" width="10" height="4" fill="#ffd0a0" opacity="0.6" transform="rotate(56 1350 696)"/><rect x="985" y="387" width="8" height="3" fill="#e8d8ff" opacity="0.9" transform="rotate(86 985 387)"/><rect x="1326" y="428" width="11" height="4" fill="#ffffff" opacity="0.6" transform="rotate(57 1326 428)"/><rect x="1183" y="70" width="12" height="4" fill="#ffffff" opacity="0.9" transform="rotate(11 1183 70)"/><rect x="1260" y="240" width="7" height="4" fill="#ffe0e8" opacity="0.8" transform="rotate(139 1260 240)"/><rect x="936" y="116" width="7" height="4" fill="#ffe0e8" opacity="0.8" transform="rotate(121 936 116)"/><rect x="692" y="253" width="11" height="4" fill="#c8ffd8" opacity="0.7" transform="rotate(73 692 253)"/><rect x="773" y="612" width="8" height="3" fill="#ffb8b8" opacity="0.6" transform="rotate(175 773 612)"/><rect x="1112" y="754" width="12" height="4" fill="#fff0b0" opacity="0.7" transform="rotate(70 1112 754)"/><rect x="926" y="483" width="11" height="4" fill="#ffffff" opacity="0.7" transform="rotate(23 926 483)"/><rect x="1152" y="86" width="9" height="3" fill="#fff0b0" opacity="0.8" transform="rotate(46 1152 86)"/><rect x="792" y="781" width="11" height="4" fill="#ffffff" opacity="0.9" transform="rotate(123 792 781)"/><rect x="830" y="657" width="11" height="4" fill="#302838" opacity="0.9" transform="rotate(2 830 657)"/><rect x="1027" y="798" width="11" height="4" fill="#c8ffd8" opacity="0.8" transform="rotate(54 1027 798)"/><rect x="1162" y="303" width="8" height="3" fill="#ffd0a0" opacity="0.8" transform="rotate(164 1162 303)"/><rect x="450" y="616" width="11" height="4" fill="#fff0b0" opacity="1.0" transform="rotate(9 450 616)"/><rect x="751" y="604" width="11" height="3" fill="#ffb8b8" opacity="0.8" transform="rotate(118 751 604)"/><rect x="842" y="107" width="9" height="4" fill="#fff0b0" opacity="1.0" transform="rotate(153 842 107)"/><rect x="1441" y="686" width="12" height="4" fill="#f0f0ff" opacity="1.0" transform="rotate(98 1441 686)"/><rect x="1316" y="783" width="9" height="4" fill="#e8d8ff" opacity="0.9" transform="rotate(151 1316 783)"/><rect x="925" y="199" width="8" height="3" fill="#c8ecff" opacity="0.9" transform="rotate(5 925 199)"/><rect x="817" y="296" width="7" height="4" fill="#ffffff" opacity="0.7" transform="rotate(115 817 296)"/><rect x="756" y="763" width="9" height="4" fill="#e8d8ff" opacity="0.8" transform="rotate(161 756 763)"/><rect x="789" y="587" width="10" height="3" fill="#f0f0ff" opacity="0.9" transform="rotate(106 789 587)"/><rect x="1239" y="9" width="8" height="3" fill="#ffd0a0" opacity="1.0" transform="rotate(98 1239 9)"/><rect x="1390" y="557" width="7" height="4" fill="#c8ffd8" opacity="0.9" transform="rotate(78 1390 557)"/><rect x="1475" y="799" width="8" height="3" fill="#ffe0e8" opacity="0.9" transform="rotate(93 1475 799)"/><rect x="980" y="178" width="8" height="4" fill="#c8ffd8" opacity="0.8" transform="rotate(179 980 178)"/><rect x="550" y="510" width="7" height="4" fill="#f0f0ff" opacity="1.0" transform="rotate(59 550 510)"/><rect x="1117" y="586" width="10" height="4" fill="#f0f0ff" opacity="1.0" transform="rotate(26 1117 586)"/><rect x="1329" y="720" width="8" height="3" fill="#ffe0e8" opacity="1.0" transform="rotate(117 1329 720)"/><rect x="570" y="695" width="8" height="3" fill="#c8ecff" opacity="1.0" transform="rotate(90 570 695)"/><rect x="1375" y="409" width="12" height="4" fill="#ffffff" opacity="0.9" transform="rotate(26 1375 409)"/><rect x="862" y="339" width="8" height="4" fill="#ffe0e8" opacity="0.8" transform="rotate(92 862 339)"/><rect x="865" y="619" width="11" height="4" fill="#f0f0ff" opacity="0.9" transform="rotate(30 865 619)"/><rect x="881" y="204" width="10" height="4" fill="#ffe0e8" opacity="0.8" transform="rotate(36 881 204)"/><rect x="973" y="599" width="11" height="4" fill="#f0f0ff" opacity="0.9" transform="rotate(49 973 599)"/><rect x="935" y="42" width="7" height="4" fill="#ffffff" opacity="0.7" transform="rotate(122 935 42)"/><rect x="1024" y="434" width="9" height="4" fill="#c8ffd8" opacity="0.7" transform="rotate(179 1024 434)"/><rect x="836" y="285" width="10" height="4" fill="#ffe0e8" opacity="0.8" transform="rotate(26 836 285)"/><rect x="1064" y="404" width="8" height="4" fill="#ffffff" opacity="1.0" transform="rotate(79 1064 404)"/><rect x="946" y="378" width="9" height="4" fill="#e8d8ff" opacity="0.7" transform="rotate(90 946 378)"/><rect x="1295" y="561" width="12" height="4" fill="#e8d8ff" opacity="0.8" transform="rotate(64 1295 561)"/><rect x="1189" y="564" width="9" height="4" fill="#ffffff" opacity="0.6" transform="rotate(99 1189 564)"/><rect x="755" y="284" width="10" height="4" fill="#ffb8b8" opacity="0.8" transform="rotate(72 755 284)"/><rect x="990" y="125" width="10" height="4" fill="#e8d8ff" opacity="0.8" transform="rotate(122 990 125)"/><rect x="969" y="472" width="10" height="4" fill="#c8ffd8" opacity="0.8" transform="rotate(170 969 472)"/><rect x="960" y="521" width="12" height="4" fill="#ffffff" opacity="0.9" transform="rotate(111 960 521)"/><rect x="1106" y="397" width="9" height="4" fill="#e8d8ff" opacity="0.8" transform="rotate(63 1106 397)"/><rect x="772" y="511" width="9" height="4" fill="#e8d8ff" opacity="0.7" transform="rotate(141 772 511)"/><rect x="1026" y="640" width="7" height="4" fill="#e8d8ff" opacity="0.6" transform="rotate(113 1026 640)"/><rect x="1005" y="302" width="7" height="3" fill="#ffb8b8" opacity="0.7" transform="rotate(133 1005 302)"/><rect x="1115" y="182" width="11" height="4" fill="#f0f0ff" opacity="1.0" transform="rotate(164 1115 182)"/><rect x="1053" y="441" width="12" height="4" fill="#ffffff" opacity="0.9" transform="rotate(27 1053 441)"/><rect x="1155" y="598" width="7" height="4" fill="#ffb8b8" opacity="0.8" transform="rotate(136 1155 598)"/><rect x="793" y="567" width="10" height="3" fill="#302838" opacity="0.7" transform="rotate(29 793 567)"/><rect x="1110" y="286" width="8" height="4" fill="#ffffff" opacity="0.8" transform="rotate(59 1110 286)"/><rect x="949" y="186" width="12" height="4" fill="#fff0b0" opacity="0.7" transform="rotate(127 949 186)"/><rect x="1101" y="714" width="10" height="4" fill="#ffffff" opacity="1.0" transform="rotate(112 1101 714)"/><rect x="681" y="438" width="11" height="3" fill="#ffd0a0" opacity="0.6" transform="rotate(79 681 438)"/><rect x="627" y="270" width="11" height="4" fill="#fff0b0" opacity="0.7" transform="rotate(101 627 270)"/><rect x="1360" y="551" width="8" height="4" fill="#f0f0ff" opacity="1.0" transform="rotate(90 1360 551)"/><rect x="1149" y="751" width="11" height="3" fill="#e8d8ff" opacity="0.9" transform="rotate(68 1149 751)"/><rect x="752" y="768" width="12" height="4" fill="#c8ffd8" opacity="0.7" transform="rotate(111 752 768)"/><rect x="1103" y="153" width="10" height="4" fill="#e8d8ff" opacity="0.8" transform="rotate(1 1103 153)"/><rect x="985" y="255" width="11" height="3" fill="#f0f0ff" opacity="0.7" transform="rotate(110 985 255)"/><rect x="912" y="391" width="7" height="4" fill="#ffe0e8" opacity="0.7" transform="rotate(136 912 391)"/><rect x="725" y="726" width="12" height="3" fill="#ffb8b8" opacity="0.6" transform="rotate(140 725 726)"/><rect x="833" y="701" width="10" height="4" fill="#ffe0e8" opacity="0.9" transform="rotate(159 833 701)"/><rect x="920" y="584" width="9" height="4" fill="#ffb8b8" opacity="0.9" transform="rotate(39 920 584)"/><rect x="891" y="626" width="8" height="4" fill="#302838" opacity="0.8" transform="rotate(90 891 626)"/><rect x="867" y="554" width="10" height="3" fill="#ffe0e8" opacity="0.9" transform="rotate(123 867 554)"/><rect x="901" y="37" width="11" height="3" fill="#fff0b0" opacity="0.9" transform="rotate(108 901 37)"/><rect x="1217" y="281" width="8" height="4" fill="#ffe0e8" opacity="0.6" transform="rotate(80 1217 281)"/><rect x="540" y="681" width="11" height="3" fill="#ffe0e8" opacity="0.8" transform="rotate(84 540 681)"/><rect x="654" y="583" width="8" height="3" fill="#fff0b0" opacity="0.6" transform="rotate(147 654 583)"/><rect x="1534" y="671" width="8" height="3" fill="#c8ecff" opacity="0.7" transform="rotate(163 1534 671)"/><rect x="1096" y="200" width="12" height="4" fill="#ffd0a0" opacity="0.9" transform="rotate(175 1096 200)"/><rect x="917" y="307" width="10" height="4" fill="#ffffff" opacity="0.8" transform="rotate(38 917 307)"/><rect x="802" y="644" width="8" height="4" fill="#ffb8b8" opacity="1.0" transform="rotate(148 802 644)"/><rect x="751" y="128" width="10" height="4" fill="#ffffff" opacity="0.7" transform="rotate(30 751 128)"/><rect x="1242" y="376" width="7" height="4" fill="#e8d8ff" opacity="0.7" transform="rotate(175 1242 376)"/><rect x="838" y="709" width="9" height="4" fill="#302838" opacity="0.7" transform="rotate(177 838 709)"/><rect x="875" y="226" width="8" height="4" fill="#ffb8b8" opacity="0.8" transform="rotate(57 875 226)"/><rect x="1234" y="364" width="9" height="4" fill="#ffffff" opacity="0.9" transform="rotate(169 1234 364)"/><rect x="739" y="760" width="11" height="4" fill="#ffb8b8" opacity="0.8" transform="rotate(65 739 760)"/><rect x="819" y="234" width="11" height="4" fill="#c8ecff" opacity="0.8" transform="rotate(106 819 234)"/><rect x="1065" y="443" width="8" height="4" fill="#ffe0e8" opacity="0.9" transform="rotate(120 1065 443)"/><rect x="1343" y="794" width="10" height="4" fill="#c8ffd8" opacity="0.6" transform="rotate(0 1343 794)"/><rect x="867" y="716" width="9" height="4" fill="#302838" opacity="0.7" transform="rotate(96 867 716)"/><rect x="802" y="162" width="8" height="4" fill="#ffb8b8" opacity="1.0" transform="rotate(18 802 162)"/><rect x="952" y="468" width="10" height="4" fill="#302838" opacity="0.6" transform="rotate(179 952 468)"/><rect x="1380" y="785" width="8" height="3" fill="#ffffff" opacity="0.9" transform="rotate(66 1380 785)"/><rect x="1317" y="795" width="12" height="4" fill="#e8d8ff" opacity="0.7" transform="rotate(118 1317 795)"/><rect x="679" y="441" width="8" height="3" fill="#302838" opacity="0.7" transform="rotate(28 679 441)"/><rect x="1445" y="637" width="8" height="3" fill="#ffffff" opacity="0.6" transform="rotate(102 1445 637)"/><rect x="956" y="330" width="7" height="4" fill="#c8ecff" opacity="0.9" transform="rotate(43 956 330)"/><rect x="976" y="716" width="9" height="4" fill="#c8ffd8" opacity="0.8" transform="rotate(150 976 716)"/><rect x="1003" y="268" width="10" height="4" fill="#ffffff" opacity="0.8" transform="rotate(81 1003 268)"/><rect x="821" y="483" width="8" height="3" fill="#ffe0e8" opacity="0.7" transform="rotate(15 821 483)"/><rect x="1272" y="271" width="7" height="4" fill="#fff0b0" opacity="0.9" transform="rotate(80 1272 271)"/><rect x="1137" y="244" width="9" height="4" fill="#fff0b0" opacity="0.8" transform="rotate(127 1137 244)"/><rect x="1001" y="588" width="11" height="4" fill="#ffffff" opacity="0.7" transform="rotate(142 1001 588)"/><rect x="1241" y="268" width="11" height="4" fill="#c8ffd8" opacity="0.9" transform="rotate(30 1241 268)"/><rect x="1165" y="207" width="9" height="3" fill="#ffd0a0" opacity="0.9" transform="rotate(84 1165 207)"/><rect x="1018" y="319" width="10" height="4" fill="#ffd0a0" opacity="0.7" transform="rotate(60 1018 319)"/><rect x="1067" y="264" width="7" height="4" fill="#ffe0e8" opacity="0.6" transform="rotate(152 1067 264)"/><rect x="970" y="80" width="9" height="3" fill="#ffffff" opacity="0.8" transform="rotate(121 970 80)"/><rect x="1297" y="234" width="9" height="3" fill="#ffd0a0" opacity="0.7" transform="rotate(87 1297 234)"/><rect x="762" y="788" width="11" height="4" fill="#e8d8ff" opacity="0.6" transform="rotate(142 762 788)"/><rect x="1066" y="192" width="8" height="3" fill="#ffb8b8" opacity="0.8" transform="rotate(149 1066 192)"/><rect x="888" y="106" width="12" height="4" fill="#c8ffd8" opacity="0.6" transform="rotate(47 888 106)"/><rect x="1039" y="122" width="7" height="3" fill="#f0f0ff" opacity="0.9" transform="rotate(106 1039 122)"/><rect x="648" y="515" width="12" height="4" fill="#ffffff" opacity="0.8" transform="rotate(35 648 515)"/><rect x="1161" y="582" width="10" height="4" fill="#fff0b0" opacity="0.9" transform="rotate(112 1161 582)"/><rect x="1137" y="403" width="9" height="4" fill="#ffb8b8" opacity="0.8" transform="rotate(33 1137 403)"/><rect x="852" y="95" width="9" height="4" fill="#f0f0ff" opacity="0.8" transform="rotate(157 852 95)"/><rect x="1049" y="232" width="9" height="4" fill="#ffd0a0" opacity="0.8" transform="rotate(147 1049 232)"/><rect x="839" y="170" width="9" height="4" fill="#c8ecff" opacity="0.9" transform="rotate(136 839 170)"/><rect x="1068" y="661" width="12" height="4" fill="#e8d8ff" opacity="0.7" transform="rotate(132 1068 661)"/><rect x="977" y="555" width="9" height="3" fill="#ffd0a0" opacity="0.8" transform="rotate(173 977 555)"/><rect x="1090" y="695" width="9" height="4" fill="#fff0b0" opacity="0.8" transform="rotate(61 1090 695)"/><rect x="872" y="390" width="9" height="4" fill="#ffffff" opacity="0.9" transform="rotate(161 872 390)"/><rect x="1096" y="231" width="8" height="3" fill="#e8d8ff" opacity="0.9" transform="rotate(115 1096 231)"/><rect x="1302" y="225" width="9" height="4" fill="#c8ecff" opacity="0.8" transform="rotate(160 1302 225)"/><rect x="845" y="122" width="10" height="3" fill="#302838" opacity="0.8" transform="rotate(49 845 122)"/><rect x="1296" y="791" width="8" height="4" fill="#e8d8ff" opacity="0.6" transform="rotate(132 1296 791)"/><rect x="974" y="266" width="10" height="4" fill="#ffd0a0" opacity="0.6" transform="rotate(34 974 266)"/><rect x="1002" y="458" width="11" height="4" fill="#302838" opacity="0.8" transform="rotate(43 1002 458)"/><rect x="1121" y="706" width="8" height="4" fill="#ffe0e8" opacity="0.9" transform="rotate(93 1121 706)"/><rect x="1100" y="408" width="9" height="4" fill="#ffe0e8" opacity="1.0" transform="rotate(65 1100 408)"/><rect x="1081" y="266" width="9" height="4" fill="#c8ecff" opacity="0.7" transform="rotate(76 1081 266)"/><rect x="1333" y="302" width="11" height="3" fill="#ffffff" opacity="0.8" transform="rotate(140 1333 302)"/><rect x="1062" y="182" width="10" height="4" fill="#c8ffd8" opacity="0.8" transform="rotate(152 1062 182)"/><rect x="1255" y="128" width="11" height="4" fill="#c8ecff" opacity="0.7" transform="rotate(158 1255 128)"/><rect x="933" y="555" width="7" height="4" fill="#c8ffd8" opacity="0.6" transform="rotate(33 933 555)"/><rect x="906" y="406" width="10" height="4" fill="#ffffff" opacity="0.8" transform="rotate(30 906 406)"/><rect x="1333" y="433" width="8" height="4" fill="#f0f0ff" opacity="0.8" transform="rotate(153 1333 433)"/><rect x="969" y="451" width="12" height="4" fill="#f0f0ff" opacity="0.9" transform="rotate(21 969 451)"/><rect x="1091" y="513" width="8" height="4" fill="#ffffff" opacity="0.7" transform="rotate(21 1091 513)"/><rect x="793" y="766" width="8" height="4" fill="#c8ffd8" opacity="0.8" transform="rotate(120 793 766)"/><rect x="1127" y="207" width="8" height="4" fill="#ffffff" opacity="1.0" transform="rotate(30 1127 207)"/><rect x="802" y="768" width="9" height="4" fill="#ffd0a0" opacity="0.7" transform="rotate(36 802 768)"/><rect x="613" y="649" width="10" height="4" fill="#e8d8ff" opacity="0.9" transform="rotate(139 613 649)"/><rect x="707" y="232" width="11" height="3" fill="#c8ecff" opacity="0.7" transform="rotate(49 707 232)"/><rect x="913" y="437" width="10" height="4" fill="#ffffff" opacity="0.7" transform="rotate(103 913 437)"/><rect x="932" y="594" width="11" height="4" fill="#ffffff" opacity="0.7" transform="rotate(99 932 594)"/><rect x="1106" y="522" width="8" height="4" fill="#f0f0ff" opacity="1.0" transform="rotate(6 1106 522)"/><rect x="934" y="582" width="8" height="4" fill="#c8ecff" opacity="0.6" transform="rotate(94 934 582)"/><rect x="1392" y="352" width="11" height="4" fill="#c8ecff" opacity="0.9" transform="rotate(96 1392 352)"/><rect x="821" y="251" width="8" height="4" fill="#ffe0e8" opacity="0.6" transform="rotate(164 821 251)"/><rect x="849" y="40" width="10" height="3" fill="#c8ecff" opacity="0.6" transform="rotate(132 849 40)"/><rect x="479" y="792" width="8" height="4" fill="#c8ecff" opacity="0.9" transform="rotate(146 479 792)"/><rect x="1111" y="246" width="12" height="4" fill="#fff0b0" opacity="0.8" transform="rotate(87 1111 246)"/><rect x="804" y="305" width="11" height="4" fill="#ffb8b8" opacity="0.7" transform="rotate(169 804 305)"/><rect x="922" y="596" width="11" height="3" fill="#c8ecff" opacity="0.8" transform="rotate(125 922 596)"/><rect x="745" y="633" width="9" height="4" fill="#e8d8ff" opacity="0.9" transform="rotate(138 745 633)"/><rect x="1035" y="321" width="8" height="4" fill="#fff0b0" opacity="1.0" transform="rotate(164 1035 321)"/><rect x="1275" y="420" width="9" height="4" fill="#c8ecff" opacity="0.7" transform="rotate(142 1275 420)"/><rect x="1347" y="283" width="11" height="3" fill="#ffffff" opacity="0.9" transform="rotate(50 1347 283)"/><rect x="701" y="226" width="9" height="4" fill="#fff0b0" opacity="0.7" transform="rotate(157 701 226)"/><rect x="746" y="442" width="10" height="4" fill="#ffb8b8" opacity="0.9" transform="rotate(23 746 442)"/><rect x="1303" y="348" width="9" height="4" fill="#ffe0e8" opacity="0.8" transform="rotate(128 1303 348)"/><rect x="817" y="717" width="9" height="3" fill="#c8ecff" opacity="0.9" transform="rotate(18 817 717)"/><rect x="1198" y="129" width="8" height="4" fill="#c8ecff" opacity="0.6" transform="rotate(88 1198 129)"/><rect x="1223" y="355" width="8" height="4" fill="#ffd0a0" opacity="1.0" transform="rotate(153 1223 355)"/><rect x="750" y="582" width="8" height="4" fill="#ffffff" opacity="0.7" transform="rotate(117 750 582)"/><rect x="1150" y="646" width="9" height="3" fill="#ffffff" opacity="0.9" transform="rotate(146 1150 646)"/><rect x="970" y="671" width="11" height="3" fill="#ffb8b8" opacity="0.6" transform="rotate(45 970 671)"/><rect x="976" y="667" width="7" height="4" fill="#c8ffd8" opacity="0.7" transform="rotate(40 976 667)"/><rect x="1085" y="87" width="11" height="4" fill="#c8ffd8" opacity="0.6" transform="rotate(38 1085 87)"/><rect x="1175" y="329" width="9" height="3" fill="#ffffff" opacity="0.8" transform="rotate(171 1175 329)"/><rect x="885" y="541" width="10" height="4" fill="#c8ffd8" opacity="0.7" transform="rotate(136 885 541)"/><rect x="1077" y="725" width="7" height="3" fill="#f0f0ff" opacity="1.0" transform="rotate(172 1077 725)"/><rect x="852" y="407" width="8" height="4" fill="#ffffff" opacity="0.8" transform="rotate(162 852 407)"/><rect x="818" y="11" width="9" height="3" fill="#c8ecff" opacity="0.9" transform="rotate(54 818 11)"/><rect x="708" y="306" width="11" height="4" fill="#ffffff" opacity="0.6" transform="rotate(42 708 306)"/><rect x="888" y="536" width="9" height="4" fill="#ffd0a0" opacity="0.6" transform="rotate(145 888 536)"/><rect x="1235" y="55" width="7" height="4" fill="#c8ffd8" opacity="0.7" transform="rotate(66 1235 55)"/><rect x="957" y="509" width="8" height="4" fill="#ffe0e8" opacity="0.8" transform="rotate(88 957 509)"/><rect x="1138" y="182" width="10" height="4" fill="#ffb8b8" opacity="0.9" transform="rotate(71 1138 182)"/><rect x="942" y="667" width="10" height="4" fill="#fff0b0" opacity="1.0" transform="rotate(47 942 667)"/><rect x="1004" y="352" width="8" height="4" fill="#c8ecff" opacity="1.0" transform="rotate(77 1004 352)"/><rect x="874" y="65" width="10" height="4" fill="#ffe0e8" opacity="0.8" transform="rotate(164 874 65)"/><rect x="844" y="82" width="11" height="4" fill="#ffe0e8" opacity="0.9" transform="rotate(66 844 82)"/><rect x="1103" y="178" width="7" height="3" fill="#fff0b0" opacity="0.8" transform="rotate(35 1103 178)"/><rect x="1183" y="232" width="10" height="3" fill="#ffe0e8" opacity="0.8" transform="rotate(174 1183 232)"/><rect x="942" y="435" width="10" height="3" fill="#c8ffd8" opacity="0.6" transform="rotate(11 942 435)"/><rect x="797" y="51" width="8" height="4" fill="#ffb8b8" opacity="0.8" transform="rotate(34 797 51)"/><rect x="813" y="365" width="9" height="4" fill="#ffe0e8" opacity="0.8" transform="rotate(115 813 365)"/><rect x="792" y="641" width="8" height="4" fill="#e8d8ff" opacity="0.9" transform="rotate(91 792 641)"/><rect x="993" y="198" width="12" height="4" fill="#c8ecff" opacity="0.8" transform="rotate(107 993 198)"/><rect x="1213" y="792" width="11" height="4" fill="#ffd0a0" opacity="1.0" transform="rotate(37 1213 792)"/><rect x="949" y="102" width="7" height="3" fill="#302838" opacity="0.7" transform="rotate(127 949 102)"/><rect x="842" y="744" width="10" height="3" fill="#ffd0a0" opacity="0.7" transform="rotate(144 842 744)"/><rect x="1080" y="520" width="10" height="3" fill="#c8ffd8" opacity="1.0" transform="rotate(34 1080 520)"/><rect x="1116" y="548" width="10" height="4" fill="#c8ffd8" opacity="0.9" transform="rotate(51 1116 548)"/><rect x="1301" y="412" width="8" height="4" fill="#f0f0ff" opacity="0.9" transform="rotate(174 1301 412)"/><rect x="1074" y="372" width="11" height="4" fill="#ffb8b8" opacity="0.9" transform="rotate(169 1074 372)"/><rect x="807" y="714" width="9" height="3" fill="#fff0b0" opacity="1.0" transform="rotate(108 807 714)"/><rect x="906" y="676" width="8" height="4" fill="#ffe0e8" opacity="0.7" transform="rotate(38 906 676)"/><rect x="870" y="420" width="8" height="4" fill="#ffb8b8" opacity="0.9" transform="rotate(176 870 420)"/><rect x="970" y="242" width="7" height="4" fill="#ffd0a0" opacity="0.6" transform="rotate(68 970 242)"/><rect x="1187" y="300" width="7" height="4" fill="#ffffff" opacity="0.7" transform="rotate(41 1187 300)"/><rect x="750" y="475" width="10" height="3" fill="#ffffff" opacity="0.7" transform="rotate(81 750 475)"/><rect x="1039" y="298" width="12" height="4" fill="#ffffff" opacity="0.9" transform="rotate(22 1039 298)"/><rect x="558" y="503" width="9" height="3" fill="#ffffff" opacity="1.0" transform="rotate(72 558 503)"/><rect x="799" y="213" width="9" height="3" fill="#ffd0a0" opacity="0.8" transform="rotate(127 799 213)"/><rect x="544" y="503" width="11" height="4" fill="#e8d8ff" opacity="1.0" transform="rotate(59 544 503)"/><rect x="698" y="405" width="7" height="3" fill="#ffb8b8" opacity="1.0" transform="rotate(134 698 405)"/><rect x="1389" y="530" width="9" height="4" fill="#ffe0e8" opacity="0.7" transform="rotate(137 1389 530)"/><rect x="821" y="551" width="8" height="3" fill="#fff0b0" opacity="0.9" transform="rotate(134 821 551)"/><rect x="1053" y="168" width="8" height="3" fill="#ffffff" opacity="0.8" transform="rotate(131 1053 168)"/><rect x="1340" y="505" width="8" height="4" fill="#ffffff" opacity="0.6" transform="rotate(31 1340 505)"/><rect x="983" y="25" width="7" height="3" fill="#c8ffd8" opacity="0.6" transform="rotate(25 983 25)"/><rect x="785" y="190" width="9" height="4" fill="#f0f0ff" opacity="0.9" transform="rotate(71 785 190)"/><rect x="815" y="630" width="12" height="3" fill="#ffffff" opacity="0.9" transform="rotate(152 815 630)"/><rect x="1066" y="558" width="12" height="4" fill="#ffffff" opacity="0.8" transform="rotate(105 1066 558)"/><rect x="775" y="767" width="12" height="4" fill="#ffe0e8" opacity="0.6" transform="rotate(95 775 767)"/><rect x="840" y="324" width="8" height="4" fill="#ffe0e8" opacity="0.8" transform="rotate(144 840 324)"/><rect x="552" y="585" width="11" height="3" fill="#302838" opacity="0.8" transform="rotate(109 552 585)"/><rect x="1048" y="221" width="12" height="4" fill="#302838" opacity="0.7" transform="rotate(161 1048 221)"/><rect x="1230" y="375" width="10" height="3" fill="#302838" opacity="0.7" transform="rotate(55 1230 375)"/><rect x="1162" y="320" width="11" height="4" fill="#f0f0ff" opacity="0.8" transform="rotate(119 1162 320)"/><rect x="870" y="508" width="11" height="3" fill="#ffb8b8" opacity="0.6" transform="rotate(162 870 508)"/><rect x="908" y="758" width="7" height="3" fill="#c8ecff" opacity="0.6" transform="rotate(158 908 758)"/><rect x="1021" y="25" width="9" height="3" fill="#302838" opacity="0.8" transform="rotate(127 1021 25)"/><rect x="802" y="616" width="10" height="3" fill="#ffe0e8" opacity="0.9" transform="rotate(145 802 616)"/><rect x="819" y="198" width="9" height="4" fill="#ffb8b8" opacity="0.8" transform="rotate(31 819 198)"/><rect x="960" y="748" width="7" height="3" fill="#fff0b0" opacity="1.0" transform="rotate(89 960 748)"/><rect x="1524" y="671" width="10" height="4" fill="#c8ffd8" opacity="0.6" transform="rotate(59 1524 671)"/><rect x="993" y="561" width="10" height="3" fill="#fff0b0" opacity="0.8" transform="rotate(144 993 561)"/><rect x="1047" y="390" width="11" height="3" fill="#ffffff" opacity="1.0" transform="rotate(55 1047 390)"/><rect x="866" y="694" width="11" height="3" fill="#ffd0a0" opacity="0.9" transform="rotate(138 866 694)"/><rect x="1209" y="417" width="12" height="3" fill="#c8ffd8" opacity="0.9" transform="rotate(33 1209 417)"/><rect x="783" y="679" width="8" height="4" fill="#fff0b0" opacity="0.9" transform="rotate(24 783 679)"/><rect x="933" y="194" width="10" height="4" fill="#ffffff" opacity="0.9" transform="rotate(22 933 194)"/><rect x="1113" y="245" width="11" height="4" fill="#ffe0e8" opacity="0.7" transform="rotate(147 1113 245)"/><rect x="1066" y="144" width="8" height="4" fill="#c8ffd8" opacity="1.0" transform="rotate(1 1066 144)"/><rect x="1169" y="531" width="9" height="3" fill="#c8ffd8" opacity="0.7" transform="rotate(61 1169 531)"/><rect x="801" y="571" width="11" height="4" fill="#c8ffd8" opacity="0.7" transform="rotate(126 801 571)"/><rect x="1135" y="234" width="9" height="3" fill="#ffb8b8" opacity="0.9" transform="rotate(158 1135 234)"/><rect x="1133" y="304" width="12" height="4" fill="#c8ffd8" opacity="0.8" transform="rotate(81 1133 304)"/><rect x="986" y="205" width="10" height="4" fill="#ffffff" opacity="0.8" transform="rotate(28 986 205)"/><rect x="1091" y="385" width="9" height="4" fill="#ffe0e8" opacity="0.8" transform="rotate(161 1091 385)"/><rect x="974" y="446" width="9" height="3" fill="#e8d8ff" opacity="0.7" transform="rotate(74 974 446)"/><rect x="903" y="357" width="9" height="4" fill="#ffffff" opacity="1.0" transform="rotate(163 903 357)"/><rect x="883" y="490" width="8" height="4" fill="#ffffff" opacity="0.9" transform="rotate(3 883 490)"/><rect x="914" y="220" width="10" height="4" fill="#c8ffd8" opacity="0.9" transform="rotate(158 914 220)"/><rect x="722" y="602" width="8" height="4" fill="#c8ecff" opacity="0.6" transform="rotate(132 722 602)"/><rect x="1028" y="248" width="8" height="4" fill="#ffffff" opacity="0.9" transform="rotate(119 1028 248)"/><rect x="913" y="507" width="7" height="4" fill="#c8ffd8" opacity="0.8" transform="rotate(105 913 507)"/><rect x="1079" y="529" width="10" height="4" fill="#f0f0ff" opacity="0.9" transform="rotate(43 1079 529)"/><rect x="836" y="434" width="9" height="4" fill="#302838" opacity="1.0" transform="rotate(80 836 434)"/><rect x="1066" y="409" width="10" height="4" fill="#ffe0e8" opacity="0.7" transform="rotate(10 1066 409)"/><rect x="1033" y="711" width="9" height="4" fill="#ffe0e8" opacity="0.6" transform="rotate(96 1033 711)"/><rect x="1380" y="422" width="11" height="4" fill="#c8ffd8" opacity="0.7" transform="rotate(25 1380 422)"/><rect x="1179" y="180" width="7" height="4" fill="#ffffff" opacity="0.7" transform="rotate(113 1179 180)"/><rect x="1087" y="788" width="8" height="4" fill="#e8d8ff" opacity="0.9" transform="rotate(29 1087 788)"/><rect x="1271" y="607" width="11" height="4" fill="#e8d8ff" opacity="0.7" transform="rotate(12 1271 607)"/><rect x="1287" y="538" width="10" height="4" fill="#c8ecff" opacity="0.7" transform="rotate(18 1287 538)"/><rect x="976" y="496" width="10" height="4" fill="#ffffff" opacity="0.7" transform="rotate(114 976 496)"/><rect x="1012" y="186" width="11" height="3" fill="#ffffff" opacity="0.7" transform="rotate(130 1012 186)"/><rect x="1261" y="458" width="9" height="4" fill="#ffffff" opacity="1.0" transform="rotate(2 1261 458)"/><rect x="739" y="554" width="9" height="4" fill="#c8ecff" opacity="0.8" transform="rotate(117 739 554)"/><rect x="760" y="391" width="7" height="4" fill="#ffffff" opacity="0.8" transform="rotate(39 760 391)"/><rect x="888" y="556" width="8" height="4" fill="#c8ecff" opacity="0.8" transform="rotate(144 888 556)"/><rect x="1257" y="228" width="9" height="3" fill="#c8ffd8" opacity="1.0" transform="rotate(163 1257 228)"/><rect x="1136" y="274" width="11" height="4" fill="#ffe0e8" opacity="0.9" transform="rotate(31 1136 274)"/><rect x="1093" y="299" width="10" height="4" fill="#c8ffd8" opacity="0.9" transform="rotate(55 1093 299)"/><rect x="1305" y="216" width="8" height="4" fill="#ffb8b8" opacity="0.8" transform="rotate(125 1305 216)"/><rect x="599" y="527" width="12" height="4" fill="#c8ecff" opacity="0.7" transform="rotate(40 599 527)"/><rect x="970" y="638" width="11" height="4" fill="#ffb8b8" opacity="0.8" transform="rotate(51 970 638)"/><rect x="1213" y="510" width="9" height="4" fill="#ffffff" opacity="0.6" transform="rotate(77 1213 510)"/><rect x="813" y="399" width="11" height="3" fill="#ffb8b8" opacity="0.8" transform="rotate(76 813 399)"/><rect x="1198" y="449" width="9" height="3" fill="#302838" opacity="1.0" transform="rotate(24 1198 449)"/><rect x="1007" y="552" width="8" height="3" fill="#ffd0a0" opacity="0.7" transform="rotate(94 1007 552)"/><rect x="1201" y="667" width="9" height="4" fill="#ffd0a0" opacity="0.7" transform="rotate(120 1201 667)"/><rect x="796" y="184" width="7" height="4" fill="#ffffff" opacity="0.7" transform="rotate(15 796 184)"/><rect x="970" y="119" width="8" height="4" fill="#c8ffd8" opacity="0.8" transform="rotate(17 970 119)"/><rect x="1072" y="270" width="9" height="4" fill="#ffffff" opacity="1.0" transform="rotate(62 1072 270)"/><rect x="888" y="94" width="11" height="4" fill="#fff0b0" opacity="0.6" transform="rotate(108 888 94)"/><rect x="968" y="82" width="10" height="4" fill="#ffd0a0" opacity="0.6" transform="rotate(135 968 82)"/><rect x="818" y="308" width="11" height="4" fill="#f0f0ff" opacity="0.7" transform="rotate(146 818 308)"/><rect x="1057" y="665" width="8" height="4" fill="#ffe0e8" opacity="0.7" transform="rotate(105 1057 665)"/><rect x="1165" y="765" width="7" height="4" fill="#ffffff" opacity="0.8" transform="rotate(131 1165 765)"/><rect x="1034" y="529" width="8" height="4" fill="#f0f0ff" opacity="0.8" transform="rotate(74 1034 529)"/><rect x="976" y="796" width="8" height="4" fill="#fff0b0" opacity="0.8" transform="rotate(120 976 796)"/><rect x="841" y="389" width="9" height="4" fill="#f0f0ff" opacity="0.9" transform="rotate(78 841 389)"/><rect x="1598" y="798" width="11" height="4" fill="#ffffff" opacity="0.9" transform="rotate(8 1598 798)"/><rect x="1396" y="617" width="8" height="4" fill="#f0f0ff" opacity="1.0" transform="rotate(73 1396 617)"/><rect x="792" y="701" width="8" height="4" fill="#f0f0ff" opacity="0.8" transform="rotate(117 792 701)"/><rect x="1076" y="428" width="8" height="4" fill="#c8ecff" opacity="0.6" transform="rotate(25 1076 428)"/><rect x="1128" y="251" width="7" height="4" fill="#c8ecff" opacity="1.0" transform="rotate(87 1128 251)"/><rect x="1185" y="607" width="9" height="4" fill="#302838" opacity="0.8" transform="rotate(37 1185 607)"/><rect x="928" y="371" width="10" height="3" fill="#c8ecff" opacity="1.0" transform="rotate(60 928 371)"/><rect x="1001" y="353" width="8" height="4" fill="#f0f0ff" opacity="0.8" transform="rotate(60 1001 353)"/><rect x="1202" y="463" width="7" height="3" fill="#c8ffd8" opacity="0.8" transform="rotate(1 1202 463)"/><rect x="1274" y="458" width="8" height="4" fill="#f0f0ff" opacity="0.8" transform="rotate(76 1274 458)"/><rect x="865" y="415" width="8" height="3" fill="#e8d8ff" opacity="0.8" transform="rotate(110 865 415)"/><rect x="974" y="577" width="9" height="4" fill="#c8ecff" opacity="0.7" transform="rotate(107 974 577)"/><rect x="1034" y="452" width="11" height="4" fill="#c8ecff" opacity="1.0" transform="rotate(121 1034 452)"/><rect x="1064" y="669" width="8" height="3" fill="#ffffff" opacity="0.9" transform="rotate(126 1064 669)"/><rect x="1090" y="355" width="11" height="4" fill="#ffffff" opacity="0.7" transform="rotate(66 1090 355)"/><rect x="1117" y="732" width="12" height="4" fill="#ffffff" opacity="0.9" transform="rotate(39 1117 732)"/><rect x="471" y="533" width="12" height="4" fill="#c8ffd8" opacity="0.8" transform="rotate(18 471 533)"/><rect x="1061" y="327" width="10" height="4" fill="#ffffff" opacity="0.8" transform="rotate(180 1061 327)"/><rect x="838" y="274" width="9" height="4" fill="#e8d8ff" opacity="0.9" transform="rotate(33 838 274)"/><rect x="871" y="773" width="11" height="3" fill="#ffb8b8" opacity="0.6" transform="rotate(157 871 773)"/><rect x="782" y="328" width="9" height="3" fill="#fff0b0" opacity="0.8" transform="rotate(22 782 328)"/><rect x="705" y="691" width="10" height="3" fill="#302838" opacity="0.7" transform="rotate(176 705 691)"/><rect x="606" y="547" width="8" height="4" fill="#302838" opacity="0.8" transform="rotate(38 606 547)"/><rect x="1077" y="154" width="8" height="3" fill="#ffb8b8" opacity="0.8" transform="rotate(60 1077 154)"/><rect x="789" y="323" width="11" height="4" fill="#ffb8b8" opacity="1.0" transform="rotate(77 789 323)"/><rect x="1015" y="141" width="12" height="4" fill="#fff0b0" opacity="1.0" transform="rotate(37 1015 141)"/><rect x="1273" y="103" width="10" height="4" fill="#ffd0a0" opacity="0.9" transform="rotate(25 1273 103)"/><rect x="985" y="616" width="8" height="4" fill="#ffb8b8" opacity="0.7" transform="rotate(135 985 616)"/><rect x="742" y="237" width="12" height="4" fill="#ffffff" opacity="0.9" transform="rotate(142 742 237)"/><rect x="991" y="558" width="11" height="4" fill="#fff0b0" opacity="0.6" transform="rotate(20 991 558)"/><rect x="1052" y="453" width="10" height="4" fill="#f0f0ff" opacity="0.8" transform="rotate(35 1052 453)"/><rect x="910" y="603" width="9" height="3" fill="#ffe0e8" opacity="0.7" transform="rotate(177 910 603)"/><rect x="1055" y="318" width="10" height="4" fill="#302838" opacity="1.0" transform="rotate(134 1055 318)"/><rect x="568" y="514" width="10" height="3" fill="#ffffff" opacity="0.6" transform="rotate(49 568 514)"/><rect x="870" y="460" width="8" height="4" fill="#f0f0ff" opacity="1.0" transform="rotate(156 870 460)"/><rect x="823" y="409" width="8" height="4" fill="#c8ecff" opacity="0.7" transform="rotate(20 823 409)"/><rect x="884" y="294" width="12" height="4" fill="#e8d8ff" opacity="0.7" transform="rotate(104 884 294)"/><rect x="977" y="665" width="7" height="3" fill="#fff0b0" opacity="0.8" transform="rotate(26 977 665)"/><rect x="939" y="681" width="10" height="4" fill="#ffd0a0" opacity="0.7" transform="rotate(74 939 681)"/><rect x="909" y="236" width="8" height="4" fill="#ffb8b8" opacity="0.7" transform="rotate(80 909 236)"/><rect x="750" y="308" width="9" height="4" fill="#ffffff" opacity="0.7" transform="rotate(16 750 308)"/><rect x="875" y="691" width="12" height="4" fill="#302838" opacity="0.9" transform="rotate(96 875 691)"/><rect x="632" y="694" width="8" height="3" fill="#ffe0e8" opacity="0.6" transform="rotate(156 632 694)"/><rect x="906" y="81" width="11" height="4" fill="#fff0b0" opacity="0.7" transform="rotate(159 906 81)"/><rect x="970" y="599" width="9" height="4" fill="#ffd0a0" opacity="0.8" transform="rotate(166 970 599)"/><rect x="1131" y="650" width="9" height="3" fill="#ffffff" opacity="0.9" transform="rotate(92 1131 650)"/><rect x="921" y="283" width="11" height="4" fill="#ffb8b8" opacity="0.7" transform="rotate(100 921 283)"/><rect x="717" y="694" width="10" height="4" fill="#ffffff" opacity="0.8" transform="rotate(118 717 694)"/><rect x="645" y="648" width="10" height="4" fill="#c8ecff" opacity="0.6" transform="rotate(100 645 648)"/><rect x="932" y="538" width="10" height="4" fill="#ffffff" opacity="1.0" transform="rotate(125 932 538)"/><rect x="942" y="180" width="12" height="4" fill="#f0f0ff" opacity="0.7" transform="rotate(158 942 180)"/><rect x="520" y="686" width="11" height="4" fill="#ffffff" opacity="0.9" transform="rotate(174 520 686)"/><rect x="1083" y="768" width="9" height="4" fill="#e8d8ff" opacity="0.9" transform="rotate(88 1083 768)"/><rect x="682" y="349" width="8" height="4" fill="#ffd0a0" opacity="0.8" transform="rotate(23 682 349)"/><rect x="1016" y="423" width="11" height="4" fill="#fff0b0" opacity="0.9" transform="rotate(88 1016 423)"/><rect x="986" y="7" width="11" height="4" fill="#ffffff" opacity="0.6" transform="rotate(102 986 7)"/><rect x="941" y="61" width="9" height="3" fill="#f0f0ff" opacity="0.9" transform="rotate(164 941 61)"/><rect x="1198" y="745" width="10" height="4" fill="#c8ecff" opacity="0.8" transform="rotate(97 1198 745)"/><rect x="1117" y="661" width="9" height="3" fill="#c8ecff" opacity="1.0" transform="rotate(76 1117 661)"/><rect x="1061" y="767" width="8" height="3" fill="#ffffff" opacity="0.7" transform="rotate(4 1061 767)"/><rect x="1059" y="736" width="11" height="4" fill="#fff0b0" opacity="0.9" transform="rotate(103 1059 736)"/><rect x="783" y="377" width="9" height="3" fill="#302838" opacity="0.8" transform="rotate(7 783 377)"/><rect x="843" y="258" width="7" height="4" fill="#c8ecff" opacity="0.9" transform="rotate(168 843 258)"/><rect x="829" y="217" width="11" height="4" fill="#e8d8ff" opacity="0.6" transform="rotate(20 829 217)"/><rect x="616" y="732" width="12" height="4" fill="#ffb8b8" opacity="0.9" transform="rotate(59 616 732)"/><rect x="1159" y="114" width="7" height="4" fill="#e8d8ff" opacity="0.8" transform="rotate(155 1159 114)"/><rect x="1123" y="787" width="9" height="4" fill="#ffb8b8" opacity="1.0" transform="rotate(96 1123 787)"/><rect x="949" y="428" width="7" height="4" fill="#ffe0e8" opacity="0.9" transform="rotate(125 949 428)"/><rect x="708" y="702" width="8" height="4" fill="#ffb8b8" opacity="0.8" transform="rotate(3 708 702)"/><rect x="834" y="204" width="8" height="4" fill="#e8d8ff" opacity="0.6" transform="rotate(117 834 204)"/><rect x="1130" y="57" width="9" height="3" fill="#ffffff" opacity="1.0" transform="rotate(14 1130 57)"/><rect x="1002" y="359" width="11" height="4" fill="#ffffff" opacity="0.7" transform="rotate(168 1002 359)"/><rect x="1147" y="536" width="11" height="4" fill="#c8ecff" opacity="0.9" transform="rotate(101 1147 536)"/><rect x="714" y="68" width="7" height="4" fill="#c8ffd8" opacity="0.7" transform="rotate(149 714 68)"/><rect x="884" y="329" width="10" height="4" fill="#f0f0ff" opacity="0.6" transform="rotate(1 884 329)"/><rect x="1357" y="646" width="8" height="3" fill="#e8d8ff" opacity="0.8" transform="rotate(136 1357 646)"/><rect x="694" y="256" width="7" height="3" fill="#ffffff" opacity="0.6" transform="rotate(43 694 256)"/><rect x="1220" y="167" width="8" height="3" fill="#e8d8ff" opacity="1.0" transform="rotate(79 1220 167)"/><rect x="1136" y="348" width="12" height="4" fill="#fff0b0" opacity="0.8" transform="rotate(143 1136 348)"/><rect x="1025" y="259" width="8" height="4" fill="#ffe0e8" opacity="1.0" transform="rotate(82 1025 259)"/><rect x="823" y="637" width="11" height="3" fill="#ffffff" opacity="0.8" transform="rotate(122 823 637)"/><rect x="1248" y="302" width="9" height="4" fill="#302838" opacity="0.6" transform="rotate(52 1248 302)"/><rect x="1459" y="796" width="10" height="3" fill="#c8ecff" opacity="0.9" transform="rotate(40 1459 796)"/><rect x="748" y="198" width="9" height="4" fill="#fff0b0" opacity="0.9" transform="rotate(79 748 198)"/><rect x="1060" y="276" width="9" height="4" fill="#ffd0a0" opacity="0.9" transform="rotate(134 1060 276)"/><rect x="982" y="375" width="9" height="4" fill="#f0f0ff" opacity="0.7" transform="rotate(94 982 375)"/><rect x="1342" y="752" width="9" height="3" fill="#c8ecff" opacity="0.9" transform="rotate(38 1342 752)"/><rect x="1262" y="434" width="8" height="4" fill="#e8d8ff" opacity="0.7" transform="rotate(1 1262 434)"/><rect x="1041" y="595" width="10" height="3" fill="#ffffff" opacity="1.0" transform="rotate(127 1041 595)"/><rect x="913" y="623" width="9" height="4" fill="#ffffff" opacity="0.8" transform="rotate(76 913 623)"/><rect x="949" y="734" width="8" height="3" fill="#ffd0a0" opacity="0.9" transform="rotate(150 949 734)"/><rect x="660" y="372" width="10" height="4" fill="#ffb8b8" opacity="0.8" transform="rotate(156 660 372)"/><rect x="948" y="272" width="12" height="4" fill="#c8ffd8" opacity="0.6" transform="rotate(147 948 272)"/><rect x="1076" y="685" width="11" height="4" fill="#ffe0e8" opacity="0.6" transform="rotate(151 1076 685)"/><rect x="709" y="215" width="10" height="4" fill="#c8ecff" opacity="0.8" transform="rotate(172 709 215)"/><rect x="1161" y="2" width="9" height="4" fill="#f0f0ff" opacity="0.8" transform="rotate(144 1161 2)"/><rect x="825" y="66" width="8" height="3" fill="#ffffff" opacity="1.0" transform="rotate(61 825 66)"/><rect x="875" y="277" width="11" height="3" fill="#c8ecff" opacity="0.6" transform="rotate(55 875 277)"/><rect x="797" y="269" width="9" height="4" fill="#ffb8b8" opacity="1.0" transform="rotate(126 797 269)"/><rect x="1049" y="310" width="9" height="3" fill="#ffffff" opacity="0.8" transform="rotate(19 1049 310)"/><rect x="857" y="585" width="11" height="4" fill="#302838" opacity="0.7" transform="rotate(111 857 585)"/><rect x="897" y="337" width="8" height="4" fill="#ffffff" opacity="0.7" transform="rotate(116 897 337)"/><rect x="1100" y="746" width="10" height="3" fill="#ffffff" opacity="0.8" transform="rotate(54 1100 746)"/><rect x="1117" y="241" width="12" height="4" fill="#f0f0ff" opacity="0.9" transform="rotate(104 1117 241)"/><rect x="993" y="634" width="8" height="3" fill="#fff0b0" opacity="0.9" transform="rotate(40 993 634)"/><rect x="1078" y="676" width="10" height="4" fill="#ffb8b8" opacity="0.8" transform="rotate(147 1078 676)"/><rect x="1117" y="549" width="11" height="3" fill="#fff0b0" opacity="0.7" transform="rotate(47 1117 549)"/><rect x="979" y="15" width="7" height="3" fill="#c8ecff" opacity="0.8" transform="rotate(162 979 15)"/><rect x="665" y="666" width="9" height="3" fill="#ffe0e8" opacity="0.8" transform="rotate(170 665 666)"/><rect x="1104" y="433" width="11" height="4" fill="#302838" opacity="0.7" transform="rotate(118 1104 433)"/><rect x="1350" y="692" width="12" height="3" fill="#e8d8ff" opacity="0.7" transform="rotate(138 1350 692)"/><rect x="854" y="782" width="8" height="3" fill="#c8ffd8" opacity="0.6" transform="rotate(73 854 782)"/><rect x="932" y="187" width="11" height="3" fill="#ffd0a0" opacity="0.7" transform="rotate(24 932 187)"/><rect x="1067" y="530" width="8" height="4" fill="#ffffff" opacity="1.0" transform="rotate(125 1067 530)"/><rect x="1072" y="428" width="8" height="3" fill="#ffd0a0" opacity="1.0" transform="rotate(63 1072 428)"/><rect x="1152" y="529" width="12" height="3" fill="#ffd0a0" opacity="0.6" transform="rotate(167 1152 529)"/><rect x="942" y="75" width="11" height="3" fill="#e8d8ff" opacity="0.8" transform="rotate(106 942 75)"/><rect x="942" y="299" width="11" height="4" fill="#fff0b0" opacity="1.0" transform="rotate(101 942 299)"/><rect x="576" y="616" width="10" height="4" fill="#c8ecff" opacity="0.9" transform="rotate(175 576 616)"/><rect x="878" y="727" width="9" height="4" fill="#c8ffd8" opacity="0.6" transform="rotate(132 878 727)"/><rect x="970" y="330" width="12" height="4" fill="#ffffff" opacity="0.9" transform="rotate(133 970 330)"/><rect x="1205" y="557" width="7" height="4" fill="#fff0b0" opacity="0.9" transform="rotate(90 1205 557)"/><rect x="952" y="426" width="9" height="3" fill="#e8d8ff" opacity="0.8" transform="rotate(31 952 426)"/><rect x="1085" y="382" width="8" height="4" fill="#ffd0a0" opacity="0.8" transform="rotate(111 1085 382)"/><rect x="1174" y="448" width="9" height="3" fill="#ffffff" opacity="0.8" transform="rotate(134 1174 448)"/><rect x="966" y="119" width="12" height="3" fill="#302838" opacity="0.7" transform="rotate(60 966 119)"/><rect x="701" y="514" width="10" height="4" fill="#fff0b0" opacity="0.6" transform="rotate(60 701 514)"/><rect x="917" y="427" width="11" height="4" fill="#f0f0ff" opacity="0.7" transform="rotate(116 917 427)"/><rect x="954" y="295" width="8" height="4" fill="#ffffff" opacity="0.7" transform="rotate(40 954 295)"/><rect x="837" y="375" width="11" height="4" fill="#ffb8b8" opacity="0.9" transform="rotate(91 837 375)"/><rect x="1414" y="635" width="9" height="4" fill="#ffffff" opacity="1.0" transform="rotate(85 1414 635)"/><rect x="1267" y="295" width="11" height="4" fill="#c8ecff" opacity="0.9" transform="rotate(23 1267 295)"/><rect x="1077" y="459" width="9" height="4" fill="#c8ecff" opacity="0.7" transform="rotate(19 1077 459)"/><rect x="894" y="407" width="10" height="4" fill="#ffffff" opacity="0.8" transform="rotate(172 894 407)"/><rect x="738" y="200" width="10" height="4" fill="#fff0b0" opacity="1.0" transform="rotate(165 738 200)"/><rect x="632" y="376" width="8" height="4" fill="#ffffff" opacity="0.7" transform="rotate(97 632 376)"/><rect x="1101" y="738" width="9" height="4" fill="#ffe0e8" opacity="0.9" transform="rotate(46 1101 738)"/><rect x="984" y="111" width="12" height="4" fill="#ffffff" opacity="0.6" transform="rotate(81 984 111)"/><rect x="904" y="259" width="8" height="4" fill="#ffffff" opacity="0.9" transform="rotate(73 904 259)"/><rect x="1054" y="76" width="9" height="4" fill="#c8ecff" opacity="1.0" transform="rotate(40 1054 76)"/><rect x="878" y="188" width="11" height="4" fill="#ffffff" opacity="0.6" transform="rotate(94 878 188)"/><rect x="1351" y="656" width="8" height="4" fill="#e8d8ff" opacity="0.9" transform="rotate(85 1351 656)"/><rect x="1014" y="270" width="10" height="3" fill="#ffd0a0" opacity="0.7" transform="rotate(60 1014 270)"/><rect x="1355" y="634" width="11" height="4" fill="#ffe0e8" opacity="0.8" transform="rotate(179 1355 634)"/><rect x="984" y="171" width="8" height="4" fill="#ffe0e8" opacity="1.0" transform="rotate(124 984 171)"/><rect x="962" y="778" width="8" height="3" fill="#e8d8ff" opacity="0.6" transform="rotate(156 962 778)"/><rect x="621" y="717" width="7" height="4" fill="#f0f0ff" opacity="0.9" transform="rotate(110 621 717)"/><rect x="905" y="143" width="7" height="4" fill="#c8ffd8" opacity="0.9" transform="rotate(52 905 143)"/><rect x="624" y="437" width="10" height="3" fill="#e8d8ff" opacity="0.9" transform="rotate(102 624 437)"/><rect x="1498" y="543" width="9" height="4" fill="#ffffff" opacity="0.8" transform="rotate(108 1498 543)"/><rect x="875" y="466" width="11" height="3" fill="#302838" opacity="0.7" transform="rotate(91 875 466)"/><rect x="1214" y="399" width="11" height="4" fill="#fff0b0" opacity="0.6" transform="rotate(17 1214 399)"/><rect x="836" y="408" width="11" height="4" fill="#ffb8b8" opacity="0.7" transform="rotate(64 836 408)"/><rect x="948" y="722" width="12" height="3" fill="#ffffff" opacity="0.9" transform="rotate(13 948 722)"/><rect x="932" y="21" width="8" height="3" fill="#ffe0e8" opacity="0.7" transform="rotate(68 932 21)"/><rect x="1323" y="545" width="10" height="3" fill="#ffffff" opacity="0.7" transform="rotate(39 1323 545)"/><rect x="861" y="242" width="9" height="4" fill="#e8d8ff" opacity="0.6" transform="rotate(76 861 242)"/><rect x="823" y="225" width="9" height="4" fill="#e8d8ff" opacity="0.6" transform="rotate(88 823 225)"/><rect x="1041" y="768" width="10" height="4" fill="#c8ffd8" opacity="0.7" transform="rotate(45 1041 768)"/><rect x="1004" y="25" width="10" height="4" fill="#ffffff" opacity="0.6" transform="rotate(90 1004 25)"/><rect x="1115" y="416" width="9" height="4" fill="#c8ecff" opacity="0.9" transform="rotate(16 1115 416)"/><rect x="1006" y="565" width="12" height="4" fill="#ffe0e8" opacity="0.9" transform="rotate(116 1006 565)"/><rect x="1168" y="215" width="10" height="3" fill="#ffe0e8" opacity="0.7" transform="rotate(104 1168 215)"/><rect x="954" y="51" width="12" height="4" fill="#302838" opacity="0.6" transform="rotate(158 954 51)"/><rect x="998" y="262" width="11" height="4" fill="#c8ecff" opacity="0.9" transform="rotate(161 998 262)"/><rect x="1471" y="614" width="10" height="4" fill="#fff0b0" opacity="0.6" transform="rotate(89 1471 614)"/><rect x="1240" y="630" width="11" height="4" fill="#ffb8b8" opacity="0.8" transform="rotate(26 1240 630)"/><rect x="921" y="530" width="8" height="4" fill="#fff0b0" opacity="0.7" transform="rotate(129 921 530)"/><rect x="793" y="237" width="9" height="4" fill="#ffffff" opacity="0.8" transform="rotate(137 793 237)"/><rect x="1011" y="214" width="7" height="4" fill="#ffffff" opacity="0.9" transform="rotate(157 1011 214)"/><rect x="728" y="799" width="12" height="4" fill="#302838" opacity="0.7" transform="rotate(144 728 799)"/><rect x="961" y="146" width="9" height="4" fill="#ffffff" opacity="0.8" transform="rotate(102 961 146)"/><rect x="882" y="394" width="9" height="4" fill="#ffffff" opacity="0.7" transform="rotate(4 882 394)"/><rect x="922" y="205" width="9" height="4" fill="#ffe0e8" opacity="0.8" transform="rotate(44 922 205)"/><rect x="985" y="521" width="10" height="4" fill="#f0f0ff" opacity="0.9" transform="rotate(48 985 521)"/><rect x="1102" y="667" width="7" height="4" fill="#302838" opacity="0.9" transform="rotate(100 1102 667)"/><rect x="841" y="548" width="9" height="4" fill="#e8d8ff" opacity="0.6" transform="rotate(158 841 548)"/><rect x="1127" y="49" width="7" height="3" fill="#e8d8ff" opacity="0.9" transform="rotate(112 1127 49)"/><rect x="717" y="221" width="10" height="3" fill="#f0f0ff" opacity="0.6" transform="rotate(65 717 221)"/><rect x="1007" y="98" width="11" height="4" fill="#c8ecff" opacity="0.8" transform="rotate(130 1007 98)"/><rect x="791" y="517" width="10" height="4" fill="#e8d8ff" opacity="1.0" transform="rotate(156 791 517)"/><rect x="1104" y="169" width="11" height="4" fill="#ffffff" opacity="0.8" transform="rotate(131 1104 169)"/><rect x="883" y="61" width="12" height="3" fill="#f0f0ff" opacity="0.6" transform="rotate(114 883 61)"/><rect x="1180" y="411" width="10" height="3" fill="#fff0b0" opacity="0.7" transform="rotate(156 1180 411)"/><rect x="911" y="758" width="11" height="4" fill="#fff0b0" opacity="0.9" transform="rotate(113 911 758)"/><rect x="637" y="694" width="7" height="4" fill="#ffffff" opacity="0.7" transform="rotate(134 637 694)"/><rect x="1093" y="795" width="9" height="3" fill="#c8ffd8" opacity="0.7" transform="rotate(171 1093 795)"/><rect x="1015" y="292" width="7" height="3" fill="#f0f0ff" opacity="0.8" transform="rotate(160 1015 292)"/><rect x="787" y="222" width="8" height="3" fill="#c8ffd8" opacity="0.9" transform="rotate(91 787 222)"/><rect x="937" y="725" width="11" height="4" fill="#ffb8b8" opacity="0.8" transform="rotate(176 937 725)"/><rect x="1181" y="402" width="11" height="3" fill="#ffffff" opacity="0.9" transform="rotate(144 1181 402)"/><rect x="1202" y="762" width="8" height="3" fill="#e8d8ff" opacity="0.7" transform="rotate(99 1202 762)"/><rect x="783" y="32" width="9" height="4" fill="#ffb8b8" opacity="0.8" transform="rotate(57 783 32)"/><rect x="1492" y="717" width="9" height="4" fill="#302838" opacity="0.7" transform="rotate(59 1492 717)"/><rect x="924" y="446" width="9" height="3" fill="#fff0b0" opacity="0.7" transform="rotate(20 924 446)"/><rect x="647" y="490" width="11" height="4" fill="#c8ecff" opacity="0.9" transform="rotate(42 647 490)"/><rect x="566" y="668" width="11" height="4" fill="#ffffff" opacity="0.6" transform="rotate(15 566 668)"/><rect x="1064" y="343" width="10" height="4" fill="#e8d8ff" opacity="0.6" transform="rotate(79 1064 343)"/><rect x="1088" y="380" width="7" height="4" fill="#ffb8b8" opacity="1.0" transform="rotate(11 1088 380)"/><rect x="950" y="298" width="10" height="3" fill="#ffd0a0" opacity="0.7" transform="rotate(38 950 298)"/><rect x="1011" y="707" width="12" height="4" fill="#fff0b0" opacity="0.8" transform="rotate(30 1011 707)"/><rect x="1149" y="154" width="9" height="3" fill="#fff0b0" opacity="0.7" transform="rotate(48 1149 154)"/><rect x="1149" y="340" width="8" height="3" fill="#ffb8b8" opacity="0.8" transform="rotate(157 1149 340)"/><rect x="1269" y="662" width="10" height="3" fill="#fff0b0" opacity="0.9" transform="rotate(13 1269 662)"/><rect x="947" y="444" width="9" height="4" fill="#fff0b0" opacity="0.7" transform="rotate(147 947 444)"/><rect x="1071" y="410" width="8" height="3" fill="#f0f0ff" opacity="0.7" transform="rotate(39 1071 410)"/><rect x="919" y="66" width="9" height="4" fill="#c8ffd8" opacity="0.8" transform="rotate(70 919 66)"/><rect x="992" y="554" width="10" height="4" fill="#ffffff" opacity="1.0" transform="rotate(128 992 554)"/><rect x="1153" y="228" width="11" height="4" fill="#c8ecff" opacity="0.8" transform="rotate(109 1153 228)"/><rect x="1172" y="107" width="9" height="4" fill="#ffe0e8" opacity="1.0" transform="rotate(40 1172 107)"/><rect x="965" y="793" width="10" height="4" fill="#ffffff" opacity="1.0" transform="rotate(2 965 793)"/><rect x="1188" y="696" width="12" height="3" fill="#302838" opacity="0.9" transform="rotate(22 1188 696)"/><rect x="972" y="465" width="8" height="4" fill="#302838" opacity="0.9" transform="rotate(31 972 465)"/><rect x="922" y="460" width="9" height="4" fill="#c8ecff" opacity="0.8" transform="rotate(106 922 460)"/><rect x="1000" y="209" width="12" height="4" fill="#ffffff" opacity="0.7" transform="rotate(171 1000 209)"/><rect x="1233" y="543" width="9" height="4" fill="#f0f0ff" opacity="0.9" transform="rotate(143 1233 543)"/><rect x="622" y="497" width="8" height="4" fill="#f0f0ff" opacity="0.8" transform="rotate(43 622 497)"/><rect x="1485" y="674" width="8" height="3" fill="#c8ffd8" opacity="0.9" transform="rotate(136 1485 674)"/><rect x="1286" y="632" width="7" height="4" fill="#c8ffd8" opacity="0.6" transform="rotate(132 1286 632)"/><rect x="713" y="370" width="8" height="4" fill="#f0f0ff" opacity="0.9" transform="rotate(167 713 370)"/><rect x="1165" y="387" width="9" height="4" fill="#302838" opacity="0.9" transform="rotate(95 1165 387)"/><rect x="989" y="147" width="9" height="4" fill="#f0f0ff" opacity="0.7" transform="rotate(34 989 147)"/><rect x="434" y="783" width="8" height="4" fill="#ffffff" opacity="0.8" transform="rotate(149 434 783)"/><rect x="1029" y="336" width="11" height="4" fill="#ffffff" opacity="0.8" transform="rotate(119 1029 336)"/><rect x="1181" y="171" width="9" height="4" fill="#ffe0e8" opacity="0.7" transform="rotate(52 1181 171)"/><rect x="1129" y="741" width="10" height="4" fill="#c8ecff" opacity="0.9" transform="rotate(58 1129 741)"/><rect x="1078" y="724" width="9" height="3" fill="#f0f0ff" opacity="0.6" transform="rotate(108 1078 724)"/><rect x="1038" y="8" width="10" height="4" fill="#f0f0ff" opacity="0.9" transform="rotate(33 1038 8)"/><rect x="823" y="146" width="8" height="4" fill="#c8ffd8" opacity="0.6" transform="rotate(146 823 146)"/><rect x="1005" y="30" width="11" height="3" fill="#c8ffd8" opacity="0.6" transform="rotate(95 1005 30)"/><rect x="779" y="211" width="7" height="4" fill="#fff0b0" opacity="0.8" transform="rotate(27 779 211)"/><rect x="958" y="9" width="12" height="4" fill="#ffe0e8" opacity="0.7" transform="rotate(145 958 9)"/><rect x="800" y="28" width="8" height="4" fill="#e8d8ff" opacity="0.6" transform="rotate(1 800 28)"/><rect x="892" y="251" width="9" height="3" fill="#ffe0e8" opacity="0.8" transform="rotate(140 892 251)"/><rect x="987" y="137" width="11" height="4" fill="#e8d8ff" opacity="0.7" transform="rotate(95 987 137)"/><rect x="973" y="99" width="7" height="4" fill="#e8d8ff" opacity="0.7" transform="rotate(169 973 99)"/><rect x="1044" y="678" width="10" height="4" fill="#c8ffd8" opacity="0.9" transform="rotate(43 1044 678)"/><rect x="1167" y="474" width="8" height="4" fill="#f0f0ff" opacity="0.7" transform="rotate(149 1167 474)"/><rect x="952" y="213" width="7" height="3" fill="#ffe0e8" opacity="0.8" transform="rotate(93 952 213)"/><rect x="1370" y="796" width="10" height="4" fill="#302838" opacity="0.8" transform="rotate(29 1370 796)"/><rect x="1346" y="291" width="11" height="4" fill="#ffffff" opacity="0.8" transform="rotate(48 1346 291)"/><rect x="918" y="777" width="11" height="4" fill="#f0f0ff" opacity="0.9" transform="rotate(85 918 777)"/><rect x="434" y="728" width="10" height="3" fill="#ffb8b8" opacity="1.0" transform="rotate(147 434 728)"/><rect x="1127" y="211" width="7" height="4" fill="#f0f0ff" opacity="0.6" transform="rotate(46 1127 211)"/><rect x="1155" y="549" width="9" height="4" fill="#e8d8ff" opacity="1.0" transform="rotate(145 1155 549)"/><rect x="957" y="459" width="9" height="4" fill="#ffb8b8" opacity="0.7" transform="rotate(91 957 459)"/><rect x="665" y="396" width="8" height="4" fill="#ffd0a0" opacity="0.6" transform="rotate(50 665 396)"/><rect x="976" y="459" width="9" height="4" fill="#ffe0e8" opacity="0.8" transform="rotate(37 976 459)"/><rect x="971" y="228" width="9" height="3" fill="#c8ffd8" opacity="0.8" transform="rotate(54 971 228)"/><rect x="960" y="694" width="9" height="4" fill="#ffd0a0" opacity="0.8" transform="rotate(171 960 694)"/><rect x="1318" y="331" width="10" height="4" fill="#e8d8ff" opacity="0.9" transform="rotate(142 1318 331)"/><rect x="1230" y="668" width="12" height="4" fill="#c8ecff" opacity="0.6" transform="rotate(7 1230 668)"/><rect x="919" y="553" width="9" height="4" fill="#c8ecff" opacity="0.7" transform="rotate(101 919 553)"/><rect x="1120" y="733" width="7" height="4" fill="#ffb8b8" opacity="0.9" transform="rotate(21 1120 733)"/><rect x="1323" y="711" width="11" height="3" fill="#302838" opacity="1.0" transform="rotate(98 1323 711)"/><rect x="1263" y="429" width="10" height="4" fill="#ffd0a0" opacity="1.0" transform="rotate(53 1263 429)"/><rect x="870" y="337" width="11" height="4" fill="#302838" opacity="1.0" transform="rotate(33 870 337)"/><rect x="1284" y="405" width="11" height="3" fill="#e8d8ff" opacity="0.9" transform="rotate(108 1284 405)"/><rect x="1255" y="538" width="8" height="4" fill="#f0f0ff" opacity="0.8" transform="rotate(71 1255 538)"/><rect x="1111" y="649" width="10" height="4" fill="#ffd0a0" opacity="1.0" transform="rotate(51 1111 649)"/><rect x="1058" y="90" width="9" height="4" fill="#ffb8b8" opacity="1.0" transform="rotate(156 1058 90)"/><rect x="944" y="243" width="7" height="3" fill="#ffb8b8" opacity="0.6" transform="rotate(90 944 243)"/><rect x="552" y="672" width="11" height="4" fill="#ffe0e8" opacity="0.7" transform="rotate(166 552 672)"/><rect x="799" y="697" width="11" height="4" fill="#c8ecff" opacity="0.8" transform="rotate(108 799 697)"/><rect x="849" y="521" width="7" height="3" fill="#ffffff" opacity="0.7" transform="rotate(172 849 521)"/><rect x="1405" y="468" width="9" height="4" fill="#ffffff" opacity="0.7" transform="rotate(135 1405 468)"/><rect x="873" y="185" width="11" height="4" fill="#ffffff" opacity="0.8" transform="rotate(124 873 185)"/><rect x="1009" y="269" width="10" height="4" fill="#f0f0ff" opacity="0.8" transform="rotate(37 1009 269)"/><rect x="943" y="426" width="8" height="3" fill="#fff0b0" opacity="0.9" transform="rotate(94 943 426)"/><rect x="1189" y="167" width="10" height="4" fill="#f0f0ff" opacity="0.8" transform="rotate(104 1189 167)"/><rect x="956" y="765" width="7" height="3" fill="#c8ffd8" opacity="0.9" transform="rotate(77 956 765)"/><rect x="996" y="251" width="9" height="4" fill="#ffb8b8" opacity="1.0" transform="rotate(53 996 251)"/><rect x="852" y="297" width="8" height="4" fill="#ffe0e8" opacity="0.8" transform="rotate(173 852 297)"/><rect x="1199" y="256" width="9" height="4" fill="#c8ffd8" opacity="0.9" transform="rotate(83 1199 256)"/><rect x="1411" y="733" width="11" height="3" fill="#c8ecff" opacity="0.6" transform="rotate(66 1411 733)"/><rect x="1228" y="253" width="9" height="4" fill="#e8d8ff" opacity="0.7" transform="rotate(118 1228 253)"/><rect x="798" y="549" width="9" height="3" fill="#ffb8b8" opacity="0.9" transform="rotate(151 798 549)"/><rect x="990" y="720" width="7" height="4" fill="#ffe0e8" opacity="0.7" transform="rotate(4 990 720)"/><rect x="1174" y="227" width="9" height="4" fill="#ffe0e8" opacity="0.8" transform="rotate(26 1174 227)"/><rect x="1055" y="616" width="12" height="3" fill="#f0f0ff" opacity="0.6" transform="rotate(45 1055 616)"/><rect x="1443" y="579" width="8" height="4" fill="#ffe0e8" opacity="1.0" transform="rotate(7 1443 579)"/><rect x="1095" y="229" width="8" height="4" fill="#ffffff" opacity="0.6" transform="rotate(145 1095 229)"/><rect x="966" y="435" width="11" height="4" fill="#fff0b0" opacity="0.6" transform="rotate(8 966 435)"/><rect x="1003" y="406" width="8" height="3" fill="#fff0b0" opacity="0.9" transform="rotate(153 1003 406)"/><rect x="889" y="101" width="10" height="4" fill="#ffd0a0" opacity="0.8" transform="rotate(29 889 101)"/><rect x="837" y="380" width="8" height="4" fill="#fff0b0" opacity="1.0" transform="rotate(102 837 380)"/><rect x="1197" y="521" width="12" height="4" fill="#ffffff" opacity="0.9" transform="rotate(93 1197 521)"/><rect x="1125" y="771" width="8" height="4" fill="#c8ecff" opacity="0.9" transform="rotate(5 1125 771)"/><rect x="1304" y="708" width="9" height="4" fill="#ffe0e8" opacity="0.8" transform="rotate(23 1304 708)"/><rect x="865" y="625" width="12" height="4" fill="#ffe0e8" opacity="0.7" transform="rotate(118 865 625)"/><rect x="1101" y="677" width="9" height="3" fill="#302838" opacity="0.8" transform="rotate(99 1101 677)"/><rect x="808" y="107" width="8" height="3" fill="#ffd0a0" opacity="0.9" transform="rotate(127 808 107)"/><rect x="834" y="479" width="12" height="4" fill="#ffe0e8" opacity="0.8" transform="rotate(55 834 479)"/><rect x="1151" y="254" width="12" height="3" fill="#ffe0e8" opacity="0.6" transform="rotate(130 1151 254)"/><rect x="457" y="719" width="10" height="4" fill="#fff0b0" opacity="0.8" transform="rotate(98 457 719)"/><rect x="797" y="142" width="11" height="3" fill="#fff0b0" opacity="1.0" transform="rotate(63 797 142)"/><rect x="594" y="763" width="7" height="4" fill="#fff0b0" opacity="0.7" transform="rotate(4 594 763)"/><rect x="1136" y="421" width="10" height="3" fill="#c8ffd8" opacity="0.9" transform="rotate(20 1136 421)"/><rect x="935" y="33" width="11" height="4" fill="#f0f0ff" opacity="0.8" transform="rotate(14 935 33)"/><rect x="463" y="768" width="11" height="3" fill="#ffb8b8" opacity="0.7" transform="rotate(97 463 768)"/><rect x="833" y="566" width="9" height="4" fill="#ffe0e8" opacity="0.8" transform="rotate(68 833 566)"/><rect x="859" y="661" width="8" height="3" fill="#ffb8b8" opacity="0.8" transform="rotate(147 859 661)"/><rect x="967" y="650" width="11" height="3" fill="#c8ecff" opacity="0.6" transform="rotate(111 967 650)"/><rect x="694" y="770" width="9" height="4" fill="#ffe0e8" opacity="1.0" transform="rotate(21 694 770)"/><rect x="1101" y="762" width="10" height="4" fill="#ffd0a0" opacity="0.7" transform="rotate(5 1101 762)"/><rect x="973" y="519" width="11" height="3" fill="#302838" opacity="0.8" transform="rotate(15 973 519)"/><rect x="1262" y="279" width="8" height="3" fill="#ffffff" opacity="0.9" transform="rotate(60 1262 279)"/><rect x="1389" y="757" width="8" height="4" fill="#ffffff" opacity="1.0" transform="rotate(141 1389 757)"/><rect x="905" y="290" width="11" height="4" fill="#ffffff" opacity="1.0" transform="rotate(162 905 290)"/><rect x="1001" y="164" width="11" height="4" fill="#f0f0ff" opacity="0.7" transform="rotate(171 1001 164)"/><rect x="829" y="118" width="10" height="3" fill="#ffffff" opacity="0.7" transform="rotate(151 829 118)"/><rect x="956" y="268" width="11" height="4" fill="#c8ecff" opacity="0.6" transform="rotate(61 956 268)"/><rect x="1080" y="105" width="12" height="4" fill="#ffffff" opacity="0.8" transform="rotate(24 1080 105)"/><rect x="1057" y="656" width="8" height="4" fill="#ffffff" opacity="0.7" transform="rotate(42 1057 656)"/><rect x="1023" y="436" width="11" height="3" fill="#ffffff" opacity="0.8" transform="rotate(126 1023 436)"/><rect x="905" y="268" width="12" height="4" fill="#e8d8ff" opacity="0.9" transform="rotate(152 905 268)"/><rect x="569" y="394" width="8" height="3" fill="#ffffff" opacity="0.8" transform="rotate(2 569 394)"/><rect x="992" y="509" width="10" height="4" fill="#e8d8ff" opacity="0.6" transform="rotate(100 992 509)"/><rect x="1216" y="415" width="7" height="3" fill="#fff0b0" opacity="1.0" transform="rotate(86 1216 415)"/><rect x="1475" y="633" width="11" height="3" fill="#c8ecff" opacity="0.7" transform="rotate(108 1475 633)"/><rect x="946" y="70" width="10" height="4" fill="#ffffff" opacity="0.9" transform="rotate(44 946 70)"/><rect x="1110" y="337" width="8" height="4" fill="#302838" opacity="0.9" transform="rotate(75 1110 337)"/><rect x="994" y="53" width="12" height="4" fill="#c8ecff" opacity="0.7" transform="rotate(37 994 53)"/><rect x="781" y="243" width="9" height="4" fill="#ffffff" opacity="0.7" transform="rotate(153 781 243)"/><rect x="767" y="252" width="7" height="4" fill="#c8ffd8" opacity="0.9" transform="rotate(25 767 252)"/><rect x="1167" y="156" width="12" height="4" fill="#e8d8ff" opacity="0.7" transform="rotate(62 1167 156)"/><rect x="925" y="51" width="12" height="4" fill="#ffffff" opacity="0.8" transform="rotate(171 925 51)"/><rect x="1007" y="477" width="11" height="4" fill="#ffb8b8" opacity="0.8" transform="rotate(22 1007 477)"/><rect x="1074" y="360" width="9" height="4" fill="#f0f0ff" opacity="0.9" transform="rotate(121 1074 360)"/><rect x="778" y="349" width="9" height="4" fill="#ffd0a0" opacity="0.7" transform="rotate(159 778 349)"/><rect x="1044" y="172" width="7" height="4" fill="#ffe0e8" opacity="0.7" transform="rotate(140 1044 172)"/><rect x="801" y="575" width="11" height="3" fill="#ffb8b8" opacity="0.8" transform="rotate(164 801 575)"/><rect x="1367" y="521" width="10" height="3" fill="#ffd0a0" opacity="0.6" transform="rotate(94 1367 521)"/><rect x="1077" y="447" width="11" height="4" fill="#c8ecff" opacity="1.0" transform="rotate(25 1077 447)"/><rect x="938" y="444" width="10" height="3" fill="#ffffff" opacity="0.6" transform="rotate(95 938 444)"/><rect x="693" y="389" width="9" height="4" fill="#ffd0a0" opacity="0.7" transform="rotate(60 693 389)"/><rect x="689" y="629" width="8" height="4" fill="#ffe0e8" opacity="0.7" transform="rotate(78 689 629)"/><rect x="1282" y="256" width="12" height="4" fill="#ffd0a0" opacity="0.8" transform="rotate(70 1282 256)"/><rect x="871" y="46" width="10" height="4" fill="#e8d8ff" opacity="0.8" transform="rotate(62 871 46)"/><rect x="811" y="305" width="9" height="4" fill="#ffb8b8" opacity="0.9" transform="rotate(87 811 305)"/><rect x="468" y="602" width="9" height="4" fill="#c8ecff" opacity="0.7" transform="rotate(85 468 602)"/><rect x="962" y="402" width="7" height="4" fill="#c8ecff" opacity="0.6" transform="rotate(103 962 402)"/><rect x="749" y="470" width="9" height="3" fill="#ffd0a0" opacity="0.7" transform="rotate(44 749 470)"/><rect x="930" y="109" width="8" height="3" fill="#ffffff" opacity="0.8" transform="rotate(121 930 109)"/><rect x="1169" y="430" width="9" height="4" fill="#ffffff" opacity="0.6" transform="rotate(116 1169 430)"/><rect x="1451" y="520" width="9" height="4" fill="#c8ecff" opacity="0.7" transform="rotate(90 1451 520)"/><rect x="1004" y="370" width="8" height="3" fill="#302838" opacity="0.8" transform="rotate(53 1004 370)"/><rect x="926" y="226" width="9" height="4" fill="#c8ecff" opacity="0.7" transform="rotate(177 926 226)"/><rect x="1241" y="303" width="10" height="4" fill="#ffe0e8" opacity="0.8" transform="rotate(105 1241 303)"/><rect x="1258" y="542" width="9" height="3" fill="#ffd0a0" opacity="0.8" transform="rotate(42 1258 542)"/><rect x="1029" y="782" width="9" height="4" fill="#ffffff" opacity="0.8" transform="rotate(24 1029 782)"/><rect x="1101" y="708" width="12" height="4" fill="#302838" opacity="0.6" transform="rotate(137 1101 708)"/><rect x="1075" y="236" width="8" height="3" fill="#ffb8b8" opacity="0.7" transform="rotate(176 1075 236)"/><rect x="1355" y="586" width="9" height="3" fill="#e8d8ff" opacity="1.0" transform="rotate(146 1355 586)"/><rect x="986" y="633" width="8" height="4" fill="#fff0b0" opacity="0.8" transform="rotate(107 986 633)"/><rect x="398" y="786" width="9" height="4" fill="#e8d8ff" opacity="1.0" transform="rotate(144 398 786)"/><rect x="1087" y="564" width="11" height="4" fill="#c8ffd8" opacity="0.8" transform="rotate(172 1087 564)"/><rect x="913" y="144" width="11" height="3" fill="#ffb8b8" opacity="0.8" transform="rotate(7 913 144)"/><rect x="1185" y="627" width="10" height="4" fill="#302838" opacity="0.6" transform="rotate(88 1185 627)"/><rect x="650" y="609" width="11" height="4" fill="#ffffff" opacity="0.8" transform="rotate(86 650 609)"/><rect x="1024" y="268" width="11" height="4" fill="#ffe0e8" opacity="0.8" transform="rotate(121 1024 268)"/><rect x="864" y="305" width="10" height="3" fill="#ffe0e8" opacity="1.0" transform="rotate(98 864 305)"/><rect x="1244" y="741" width="11" height="3" fill="#ffffff" opacity="0.8" transform="rotate(65 1244 741)"/><rect x="873" y="602" width="11" height="4" fill="#ffffff" opacity="0.7" transform="rotate(130 873 602)"/><rect x="1041" y="370" width="12" height="4" fill="#ffffff" opacity="0.8" transform="rotate(145 1041 370)"/><rect x="938" y="142" width="11" height="4" fill="#e8d8ff" opacity="0.8" transform="rotate(108 938 142)"/><rect x="913" y="241" width="11" height="4" fill="#ffb8b8" opacity="1.0" transform="rotate(116 913 241)"/><rect x="842" y="184" width="9" height="3" fill="#ffd0a0" opacity="0.7" transform="rotate(14 842 184)"/><rect x="1188" y="309" width="11" height="4" fill="#e8d8ff" opacity="0.8" transform="rotate(65 1188 309)"/><rect x="966" y="737" width="8" height="3" fill="#ffe0e8" opacity="0.7" transform="rotate(120 966 737)"/><rect x="627" y="632" width="8" height="4" fill="#ffffff" opacity="0.8" transform="rotate(157 627 632)"/><rect x="848" y="630" width="11" height="3" fill="#ffd0a0" opacity="0.8" transform="rotate(95 848 630)"/><rect x="1404" y="525" width="11" height="3" fill="#ffb8b8" opacity="0.6" transform="rotate(9 1404 525)"/><rect x="934" y="481" width="12" height="4" fill="#c8ecff" opacity="0.9" transform="rotate(34 934 481)"/><rect x="821" y="25" width="10" height="4" fill="#c8ffd8" opacity="0.6" transform="rotate(163 821 25)"/><rect x="889" y="493" width="9" height="4" fill="#ffffff" opacity="0.8" transform="rotate(161 889 493)"/><rect x="1481" y="660" width="11" height="4" fill="#c8ecff" opacity="0.7" transform="rotate(86 1481 660)"/><rect x="905" y="298" width="10" height="4" fill="#ffffff" opacity="0.7" transform="rotate(121 905 298)"/><rect x="893" y="339" width="11" height="3" fill="#fff0b0" opacity="0.7" transform="rotate(60 893 339)"/><rect x="991" y="552" width="8" height="4" fill="#e8d8ff" opacity="0.6" transform="rotate(10 991 552)"/><rect x="1144" y="777" width="9" height="3" fill="#c8ffd8" opacity="1.0" transform="rotate(91 1144 777)"/><rect x="1156" y="743" width="10" height="4" fill="#c8ffd8" opacity="0.7" transform="rotate(62 1156 743)"/><rect x="396" y="721" width="7" height="4" fill="#c8ecff" opacity="0.9" transform="rotate(131 396 721)"/><rect x="715" y="227" width="8" height="4" fill="#ffd0a0" opacity="0.9" transform="rotate(34 715 227)"/><rect x="761" y="675" width="9" height="4" fill="#ffb8b8" opacity="1.0" transform="rotate(167 761 675)"/><rect x="860" y="315" width="9" height="4" fill="#c8ecff" opacity="0.8" transform="rotate(16 860 315)"/><rect x="1038" y="612" width="10" height="4" fill="#ffd0a0" opacity="0.7" transform="rotate(104 1038 612)"/><rect x="1102" y="411" width="11" height="3" fill="#ffffff" opacity="0.8" transform="rotate(45 1102 411)"/><rect x="528" y="776" width="12" height="3" fill="#f0f0ff" opacity="1.0" transform="rotate(157 528 776)"/><rect x="1338" y="703" width="12" height="4" fill="#ffe0e8" opacity="0.8" transform="rotate(135 1338 703)"/><rect x="1161" y="698" width="9" height="4" fill="#ffe0e8" opacity="0.8" transform="rotate(106 1161 698)"/><rect x="984" y="655" width="10" height="4" fill="#ffffff" opacity="0.9" transform="rotate(3 984 655)"/><rect x="1318" y="651" width="7" height="3" fill="#c8ecff" opacity="0.6" transform="rotate(108 1318 651)"/><rect x="1060" y="498" width="9" height="3" fill="#ffffff" opacity="0.7" transform="rotate(115 1060 498)"/><rect x="964" y="80" width="12" height="3" fill="#f0f0ff" opacity="0.8" transform="rotate(61 964 80)"/><rect x="662" y="604" width="7" height="4" fill="#fff0b0" opacity="1.0" transform="rotate(171 662 604)"/><rect x="1200" y="92" width="12" height="4" fill="#fff0b0" opacity="1.0" transform="rotate(166 1200 92)"/><rect x="1002" y="520" width="11" height="3" fill="#e8d8ff" opacity="1.0" transform="rotate(130 1002 520)"/><rect x="665" y="679" width="9" height="4" fill="#ffb8b8" opacity="0.8" transform="rotate(153 665 679)"/><rect x="1116" y="411" width="8" height="4" fill="#f0f0ff" opacity="0.6" transform="rotate(41 1116 411)"/><rect x="948" y="233" width="12" height="4" fill="#ffffff" opacity="0.7" transform="rotate(175 948 233)"/><rect x="884" y="504" width="8" height="3" fill="#ffe0e8" opacity="0.9" transform="rotate(66 884 504)"/><rect x="1439" y="787" width="10" height="4" fill="#ffe0e8" opacity="0.8" transform="rotate(167 1439 787)"/><rect x="958" y="582" width="10" height="4" fill="#ffe0e8" opacity="0.6" transform="rotate(35 958 582)"/><rect x="957" y="245" width="11" height="3" fill="#c8ffd8" opacity="0.7" transform="rotate(69 957 245)"/><rect x="1142" y="17" width="9" height="4" fill="#ffb8b8" opacity="1.0" transform="rotate(8 1142 17)"/><rect x="842" y="550" width="10" height="4" fill="#ffb8b8" opacity="0.9" transform="rotate(146 842 550)"/><rect x="956" y="100" width="8" height="4" fill="#ffb8b8" opacity="1.0" transform="rotate(55 956 100)"/><rect x="912" y="326" width="10" height="4" fill="#ffffff" opacity="0.9" transform="rotate(10 912 326)"/><rect x="1445" y="455" width="11" height="4" fill="#ffd0a0" opacity="0.7" transform="rotate(8 1445 455)"/><rect x="848" y="341" width="8" height="4" fill="#c8ffd8" opacity="0.6" transform="rotate(29 848 341)"/><rect x="985" y="673" width="10" height="4" fill="#ffe0e8" opacity="0.8" transform="rotate(167 985 673)"/><rect x="738" y="452" width="11" height="4" fill="#ffffff" opacity="0.7" transform="rotate(129 738 452)"/><rect x="1271" y="549" width="12" height="4" fill="#ffffff" opacity="0.9" transform="rotate(177 1271 549)"/><rect x="1467" y="547" width="10" height="4" fill="#c8ffd8" opacity="0.8" transform="rotate(117 1467 547)"/><rect x="887" y="563" width="9" height="3" fill="#ffffff" opacity="0.6" transform="rotate(85 887 563)"/><rect x="1066" y="170" width="12" height="3" fill="#c8ecff" opacity="0.9" transform="rotate(114 1066 170)"/><rect x="726" y="610" width="11" height="4" fill="#ffd0a0" opacity="0.9" transform="rotate(71 726 610)"/><rect x="970" y="195" width="9" height="4" fill="#f0f0ff" opacity="0.8" transform="rotate(10 970 195)"/><rect x="952" y="496" width="11" height="4" fill="#c8ffd8" opacity="0.8" transform="rotate(73 952 496)"/><rect x="996" y="65" width="9" height="3" fill="#f0f0ff" opacity="0.8" transform="rotate(57 996 65)"/><rect x="844" y="405" width="11" height="4" fill="#fff0b0" opacity="0.6" transform="rotate(102 844 405)"/><rect x="735" y="561" width="11" height="4" fill="#fff0b0" opacity="0.7" transform="rotate(137 735 561)"/><rect x="1008" y="444" width="10" height="3" fill="#e8d8ff" opacity="0.7" transform="rotate(60 1008 444)"/><rect x="932" y="626" width="9" height="4" fill="#302838" opacity="0.7" transform="rotate(31 932 626)"/><rect x="815" y="735" width="11" height="4" fill="#ffe0e8" opacity="0.6" transform="rotate(106 815 735)"/><rect x="722" y="698" width="10" height="4" fill="#ffd0a0" opacity="0.9" transform="rotate(156 722 698)"/><rect x="1098" y="451" width="11" height="4" fill="#ffb8b8" opacity="0.9" transform="rotate(44 1098 451)"/><rect x="1036" y="588" width="11" height="3" fill="#ffd0a0" opacity="0.9" transform="rotate(132 1036 588)"/><rect x="697" y="296" width="9" height="4" fill="#fff0b0" opacity="0.8" transform="rotate(145 697 296)"/><rect x="896" y="173" width="8" height="3" fill="#302838" opacity="0.8" transform="rotate(9 896 173)"/><rect x="974" y="389" width="10" height="4" fill="#ffffff" opacity="0.9" transform="rotate(123 974 389)"/><rect x="1101" y="264" width="11" height="3" fill="#ffd0a0" opacity="0.8" transform="rotate(107 1101 264)"/><rect x="1007" y="388" width="11" height="3" fill="#e8d8ff" opacity="0.7" transform="rotate(102 1007 388)"/><rect x="1010" y="790" width="9" height="4" fill="#302838" opacity="0.6" transform="rotate(152 1010 790)"/><rect x="788" y="536" width="10" height="4" fill="#ffffff" opacity="0.8" transform="rotate(69 788 536)"/><rect x="893" y="354" width="7" height="3" fill="#ffe0e8" opacity="0.7" transform="rotate(169 893 354)"/><rect x="586" y="324" width="8" height="3" fill="#ffffff" opacity="0.8" transform="rotate(77 586 324)"/><rect x="1065" y="120" width="11" height="4" fill="#fff0b0" opacity="0.8" transform="rotate(31 1065 120)"/><rect x="1369" y="228" width="9" height="4" fill="#f0f0ff" opacity="0.8" transform="rotate(43 1369 228)"/><rect x="1149" y="146" width="7" height="4" fill="#ffe0e8" opacity="0.6" transform="rotate(84 1149 146)"/><rect x="1315" y="146" width="11" height="3" fill="#f0f0ff" opacity="0.6" transform="rotate(163 1315 146)"/><rect x="1179" y="765" width="8" height="4" fill="#ffe0e8" opacity="0.7" transform="rotate(145 1179 765)"/><rect x="1485" y="703" width="10" height="4" fill="#302838" opacity="0.7" transform="rotate(70 1485 703)"/><rect x="932" y="191" width="10" height="4" fill="#ffffff" opacity="0.8" transform="rotate(118 932 191)"/><rect x="1133" y="88" width="9" height="4" fill="#ffb8b8" opacity="0.7" transform="rotate(54 1133 88)"/><rect x="783" y="420" width="9" height="4" fill="#ffd0a0" opacity="0.7" transform="rotate(62 783 420)"/><rect x="1165" y="574" width="9" height="4" fill="#c8ffd8" opacity="0.7" transform="rotate(6 1165 574)"/><rect x="1274" y="368" width="10" height="4" fill="#f0f0ff" opacity="0.8" transform="rotate(0 1274 368)"/><rect x="733" y="351" width="7" height="3" fill="#f0f0ff" opacity="1.0" transform="rotate(19 733 351)"/><rect x="830" y="305" width="8" height="4" fill="#c8ffd8" opacity="0.6" transform="rotate(113 830 305)"/><rect x="1022" y="225" width="9" height="4" fill="#302838" opacity="0.6" transform="rotate(163 1022 225)"/><rect x="937" y="74" width="9" height="4" fill="#c8ecff" opacity="0.7" transform="rotate(18 937 74)"/><rect x="971" y="286" width="11" height="4" fill="#ffffff" opacity="0.9" transform="rotate(70 971 286)"/><rect x="1298" y="662" width="8" height="4" fill="#e8d8ff" opacity="0.6" transform="rotate(59 1298 662)"/><rect x="1209" y="277" width="10" height="4" fill="#ffffff" opacity="1.0" transform="rotate(62 1209 277)"/><rect x="812" y="268" width="11" height="4" fill="#f0f0ff" opacity="0.7" transform="rotate(122 812 268)"/><rect x="1032" y="356" width="12" height="4" fill="#c8ffd8" opacity="0.7" transform="rotate(92 1032 356)"/><rect x="804" y="555" width="11" height="4" fill="#ffd0a0" opacity="0.7" transform="rotate(111 804 555)"/><rect x="866" y="512" width="11" height="4" fill="#ffd0a0" opacity="1.0" transform="rotate(58 866 512)"/><rect x="886" y="97" width="7" height="3" fill="#ffd0a0" opacity="0.8" transform="rotate(3 886 97)"/><rect x="926" y="348" width="11" height="4" fill="#fff0b0" opacity="0.8" transform="rotate(107 926 348)"/><rect x="990" y="200" width="10" height="4" fill="#c8ffd8" opacity="1.0" transform="rotate(109 990 200)"/><rect x="697" y="356" width="8" height="4" fill="#ffffff" opacity="0.8" transform="rotate(129 697 356)"/><rect x="1034" y="392" width="11" height="3" fill="#ffb8b8" opacity="0.9" transform="rotate(93 1034 392)"/><rect x="1098" y="511" width="8" height="3" fill="#ffffff" opacity="0.7" transform="rotate(52 1098 511)"/><rect x="979" y="540" width="8" height="4" fill="#ffffff" opacity="0.7" transform="rotate(85 979 540)"/><rect x="1253" y="533" width="12" height="4" fill="#ffe0e8" opacity="0.6" transform="rotate(19 1253 533)"/><rect x="1062" y="281" width="9" height="4" fill="#ffffff" opacity="0.9" transform="rotate(34 1062 281)"/><rect x="1242" y="523" width="11" height="3" fill="#f0f0ff" opacity="0.9" transform="rotate(91 1242 523)"/><rect x="1004" y="343" width="8" height="4" fill="#ffffff" opacity="1.0" transform="rotate(33 1004 343)"/><rect x="971" y="420" width="12" height="4" fill="#f0f0ff" opacity="0.7" transform="rotate(157 971 420)"/><rect x="895" y="303" width="11" height="4" fill="#ffffff" opacity="1.0" transform="rotate(74 895 303)"/><rect x="960" y="656" width="11" height="3" fill="#ffffff" opacity="0.9" transform="rotate(48 960 656)"/><rect x="827" y="193" width="9" height="3" fill="#ffd0a0" opacity="0.9" transform="rotate(130 827 193)"/><rect x="1066" y="98" width="9" height="3" fill="#f0f0ff" opacity="1.0" transform="rotate(69 1066 98)"/><rect x="1096" y="195" width="10" height="4" fill="#ffd0a0" opacity="0.9" transform="rotate(136 1096 195)"/><rect x="1113" y="301" width="8" height="4" fill="#f0f0ff" opacity="1.0" transform="rotate(137 1113 301)"/><rect x="1126" y="349" width="9" height="4" fill="#c8ecff" opacity="0.7" transform="rotate(142 1126 349)"/><rect x="1152" y="166" width="9" height="4" fill="#f0f0ff" opacity="1.0" transform="rotate(56 1152 166)"/><rect x="840" y="327" width="11" height="4" fill="#ffffff" opacity="0.7" transform="rotate(166 840 327)"/><rect x="1026" y="534" width="10" height="4" fill="#c8ecff" opacity="0.8" transform="rotate(146 1026 534)"/><rect x="972" y="546" width="7" height="4" fill="#fff0b0" opacity="0.7" transform="rotate(135 972 546)"/><rect x="1302" y="795" width="9" height="4" fill="#ffb8b8" opacity="0.8" transform="rotate(178 1302 795)"/><rect x="1058" y="183" width="9" height="4" fill="#ffe0e8" opacity="0.8" transform="rotate(53 1058 183)"/><rect x="812" y="245" width="10" height="4" fill="#c8ffd8" opacity="0.9" transform="rotate(60 812 245)"/><rect x="956" y="267" width="11" height="4" fill="#e8d8ff" opacity="0.7" transform="rotate(156 956 267)"/><rect x="802" y="291" width="9" height="3" fill="#ffffff" opacity="0.8" transform="rotate(138 802 291)"/><rect x="1199" y="159" width="10" height="4" fill="#c8ffd8" opacity="0.8" transform="rotate(132 1199 159)"/><rect x="1040" y="774" width="11" height="4" fill="#c8ecff" opacity="0.8" transform="rotate(62 1040 774)"/><rect x="868" y="369" width="11" height="4" fill="#302838" opacity="0.8" transform="rotate(134 868 369)"/><rect x="1370" y="364" width="10" height="4" fill="#c8ecff" opacity="0.9" transform="rotate(131 1370 364)"/><rect x="839" y="609" width="8" height="4" fill="#f0f0ff" opacity="0.7" transform="rotate(157 839 609)"/><rect x="1496" y="620" width="10" height="3" fill="#f0f0ff" opacity="0.8" transform="rotate(55 1496 620)"/><rect x="1053" y="142" width="7" height="3" fill="#ffb8b8" opacity="0.8" transform="rotate(114 1053 142)"/><rect x="755" y="582" width="8" height="4" fill="#ffd0a0" opacity="0.7" transform="rotate(117 755 582)"/><rect x="1161" y="191" width="7" height="4" fill="#ffffff" opacity="0.8" transform="rotate(29 1161 191)"/><rect x="964" y="172" width="9" height="4" fill="#c8ecff" opacity="0.9" transform="rotate(137 964 172)"/><rect x="635" y="572" width="11" height="3" fill="#f0f0ff" opacity="0.7" transform="rotate(19 635 572)"/><rect x="1042" y="276" width="9" height="3" fill="#ffffff" opacity="0.9" transform="rotate(43 1042 276)"/><rect x="1135" y="345" width="8" height="4" fill="#ffffff" opacity="0.8" transform="rotate(73 1135 345)"/><rect x="1325" y="170" width="9" height="3" fill="#f0f0ff" opacity="0.7" transform="rotate(168 1325 170)"/><rect x="1024" y="177" width="7" height="4" fill="#c8ffd8" opacity="0.7" transform="rotate(125 1024 177)"/><rect x="1002" y="732" width="8" height="4" fill="#ffffff" opacity="0.7" transform="rotate(98 1002 732)"/><rect x="1045" y="176" width="10" height="4" fill="#fff0b0" opacity="0.9" transform="rotate(25 1045 176)"/><rect x="1139" y="526" width="12" height="3" fill="#ffffff" opacity="0.7" transform="rotate(107 1139 526)"/><rect x="1207" y="297" width="10" height="4" fill="#c8ffd8" opacity="0.7" transform="rotate(48 1207 297)"/><rect x="1233" y="346" width="8" height="3" fill="#fff0b0" opacity="0.8" transform="rotate(28 1233 346)"/><rect x="1216" y="25" width="11" height="4" fill="#ffe0e8" opacity="0.8" transform="rotate(76 1216 25)"/><rect x="1017" y="136" width="7" height="4" fill="#fff0b0" opacity="0.9" transform="rotate(122 1017 136)"/><rect x="1211" y="667" width="9" height="3" fill="#f0f0ff" opacity="0.8" transform="rotate(4 1211 667)"/><rect x="989" y="640" width="9" height="4" fill="#ffb8b8" opacity="0.8" transform="rotate(142 989 640)"/><rect x="1076" y="554" width="7" height="4" fill="#ffd0a0" opacity="0.8" transform="rotate(71 1076 554)"/><rect x="1200" y="579" width="10" height="3" fill="#ffb8b8" opacity="0.8" transform="rotate(84 1200 579)"/><rect x="873" y="545" width="7" height="4" fill="#fff0b0" opacity="0.8" transform="rotate(177 873 545)"/><rect x="1001" y="233" width="9" height="4" fill="#302838" opacity="0.6" transform="rotate(74 1001 233)"/><rect x="522" y="744" width="10" height="4" fill="#c8ffd8" opacity="0.8" transform="rotate(29 522 744)"/><rect x="694" y="715" width="10" height="4" fill="#c8ffd8" opacity="0.6" transform="rotate(67 694 715)"/><rect x="613" y="494" width="10" height="4" fill="#fff0b0" opacity="0.9" transform="rotate(110 613 494)"/><rect x="1206" y="453" width="8" height="4" fill="#c8ffd8" opacity="0.7" transform="rotate(139 1206 453)"/><rect x="847" y="476" width="12" height="3" fill="#e8d8ff" opacity="0.8" transform="rotate(8 847 476)"/><rect x="691" y="516" width="10" height="4" fill="#302838" opacity="0.8" transform="rotate(64 691 516)"/><rect x="881" y="454" width="8" height="3" fill="#ffffff" opacity="0.9" transform="rotate(35 881 454)"/><rect x="890" y="94" width="10" height="3" fill="#f0f0ff" opacity="0.9" transform="rotate(8 890 94)"/><rect x="1213" y="341" width="11" height="3" fill="#ffffff" opacity="0.6" transform="rotate(172 1213 341)"/><rect x="1211" y="46" width="12" height="4" fill="#ffb8b8" opacity="1.0" transform="rotate(172 1211 46)"/><rect x="947" y="107" width="12" height="4" fill="#e8d8ff" opacity="0.9" transform="rotate(83 947 107)"/><rect x="696" y="734" width="8" height="3" fill="#ffe0e8" opacity="0.7" transform="rotate(157 696 734)"/><rect x="1093" y="456" width="9" height="3" fill="#ffb8b8" opacity="0.9" transform="rotate(21 1093 456)"/><rect x="856" y="770" width="9" height="4" fill="#ffd0a0" opacity="0.9" transform="rotate(164 856 770)"/><rect x="927" y="566" width="11" height="4" fill="#e8d8ff" opacity="1.0" transform="rotate(72 927 566)"/><rect x="1080" y="434" width="11" height="4" fill="#c8ffd8" opacity="0.7" transform="rotate(160 1080 434)"/><rect x="867" y="20" width="8" height="4" fill="#ffffff" opacity="0.9" transform="rotate(175 867 20)"/><rect x="824" y="294" width="10" height="4" fill="#c8ecff" opacity="0.7" transform="rotate(142 824 294)"/><rect x="1098" y="255" width="11" height="3" fill="#ffe0e8" opacity="0.9" transform="rotate(175 1098 255)"/><rect x="910" y="618" width="8" height="4" fill="#c8ffd8" opacity="0.8" transform="rotate(48 910 618)"/><rect x="1373" y="762" width="9" height="4" fill="#ffd0a0" opacity="0.9" transform="rotate(131 1373 762)"/><rect x="953" y="153" width="7" height="4" fill="#ffe0e8" opacity="0.8" transform="rotate(67 953 153)"/><rect x="1080" y="443" width="8" height="4" fill="#f0f0ff" opacity="1.0" transform="rotate(75 1080 443)"/><rect x="1209" y="784" width="10" height="3" fill="#ffd0a0" opacity="0.9" transform="rotate(87 1209 784)"/><rect x="906" y="410" width="8" height="3" fill="#c8ffd8" opacity="0.6" transform="rotate(51 906 410)"/><rect x="1065" y="69" width="8" height="4" fill="#ffb8b8" opacity="0.6" transform="rotate(52 1065 69)"/><rect x="1221" y="544" width="8" height="4" fill="#ffffff" opacity="0.7" transform="rotate(67 1221 544)"/><rect x="1207" y="532" width="9" height="4" fill="#c8ffd8" opacity="0.8" transform="rotate(120 1207 532)"/><rect x="873" y="244" width="8" height="4" fill="#e8d8ff" opacity="0.7" transform="rotate(135 873 244)"/><rect x="1330" y="496" width="11" height="3" fill="#302838" opacity="1.0" transform="rotate(48 1330 496)"/><rect x="875" y="331" width="11" height="4" fill="#302838" opacity="0.9" transform="rotate(106 875 331)"/><rect x="931" y="654" width="7" height="3" fill="#ffd0a0" opacity="0.8" transform="rotate(74 931 654)"/><rect x="1009" y="389" width="8" height="4" fill="#ffffff" opacity="0.6" transform="rotate(99 1009 389)"/><rect x="1097" y="533" width="9" height="4" fill="#ffb8b8" opacity="0.8" transform="rotate(119 1097 533)"/><rect x="779" y="287" width="8" height="4" fill="#c8ffd8" opacity="0.9" transform="rotate(53 779 287)"/><rect x="579" y="633" width="10" height="3" fill="#c8ecff" opacity="0.9" transform="rotate(179 579 633)"/><rect x="1143" y="612" width="7" height="4" fill="#ffffff" opacity="0.6" transform="rotate(4 1143 612)"/><rect x="1023" y="110" width="10" height="4" fill="#e8d8ff" opacity="0.9" transform="rotate(103 1023 110)"/><rect x="1004" y="106" width="7" height="3" fill="#c8ffd8" opacity="0.9" transform="rotate(127 1004 106)"/><rect x="818" y="192" width="8" height="3" fill="#f0f0ff" opacity="0.8" transform="rotate(14 818 192)"/><rect x="1171" y="564" width="9" height="4" fill="#f0f0ff" opacity="1.0" transform="rotate(5 1171 564)"/><rect x="1074" y="300" width="8" height="3" fill="#f0f0ff" opacity="0.9" transform="rotate(117 1074 300)"/><rect x="940" y="699" width="9" height="4" fill="#ffe0e8" opacity="0.7" transform="rotate(75 940 699)"/><rect x="917" y="517" width="8" height="4" fill="#ffe0e8" opacity="0.6" transform="rotate(174 917 517)"/><rect x="1245" y="186" width="12" height="4" fill="#e8d8ff" opacity="0.7" transform="rotate(91 1245 186)"/><rect x="686" y="758" width="9" height="4" fill="#f0f0ff" opacity="0.8" transform="rotate(92 686 758)"/><rect x="1211" y="528" width="12" height="4" fill="#fff0b0" opacity="0.7" transform="rotate(51 1211 528)"/><rect x="892" y="173" width="11" height="3" fill="#f0f0ff" opacity="0.7" transform="rotate(117 892 173)"/><rect x="530" y="656" width="10" height="4" fill="#c8ecff" opacity="0.7" transform="rotate(94 530 656)"/><rect x="978" y="775" width="8" height="4" fill="#c8ffd8" opacity="0.7" transform="rotate(56 978 775)"/><rect x="1123" y="700" width="11" height="3" fill="#ffe0e8" opacity="0.9" transform="rotate(88 1123 700)"/><rect x="963" y="386" width="8" height="4" fill="#302838" opacity="0.8" transform="rotate(120 963 386)"/><rect x="977" y="148" width="12" height="3" fill="#ffb8b8" opacity="0.8" transform="rotate(7 977 148)"/><rect x="1038" y="348" width="10" height="4" fill="#ffffff" opacity="0.6" transform="rotate(174 1038 348)"/><rect x="435" y="748" width="10" height="4" fill="#e8d8ff" opacity="1.0" transform="rotate(154 435 748)"/><rect x="881" y="271" width="11" height="4" fill="#fff0b0" opacity="0.9" transform="rotate(54 881 271)"/><rect x="1143" y="637" width="10" height="3" fill="#ffffff" opacity="0.7" transform="rotate(54 1143 637)"/><rect x="658" y="556" width="10" height="3" fill="#ffe0e8" opacity="0.9" transform="rotate(55 658 556)"/><rect x="1081" y="772" width="10" height="4" fill="#ffd0a0" opacity="0.9" transform="rotate(71 1081 772)"/><rect x="1129" y="184" width="10" height="4" fill="#ffffff" opacity="0.7" transform="rotate(165 1129 184)"/><rect x="992" y="315" width="7" height="4" fill="#e8d8ff" opacity="0.7" transform="rotate(162 992 315)"/><rect x="798" y="607" width="8" height="4" fill="#f0f0ff" opacity="1.0" transform="rotate(105 798 607)"/><rect x="746" y="375" width="8" height="3" fill="#c8ffd8" opacity="0.6" transform="rotate(16 746 375)"/><rect x="483" y="707" width="8" height="4" fill="#302838" opacity="0.9" transform="rotate(43 483 707)"/><rect x="1107" y="691" width="10" height="4" fill="#fff0b0" opacity="0.7" transform="rotate(84 1107 691)"/><rect x="1136" y="250" width="9" height="4" fill="#c8ffd8" opacity="0.8" transform="rotate(69 1136 250)"/><rect x="1147" y="577" width="9" height="4" fill="#ffffff" opacity="0.7" transform="rotate(41 1147 577)"/><rect x="960" y="88" width="10" height="3" fill="#e8d8ff" opacity="0.8" transform="rotate(16 960 88)"/><rect x="1111" y="306" width="10" height="4" fill="#ffffff" opacity="1.0" transform="rotate(25 1111 306)"/><rect x="1054" y="293" width="10" height="4" fill="#ffffff" opacity="0.7" transform="rotate(59 1054 293)"/><rect x="732" y="388" width="8" height="4" fill="#f0f0ff" opacity="0.7" transform="rotate(53 732 388)"/><rect x="1114" y="535" width="10" height="4" fill="#c8ecff" opacity="0.8" transform="rotate(86 1114 535)"/></g>
<g>
<ellipse cx="633" cy="572" rx="17" ry="22" fill="#b0a0a8"/>
<path d="M612 565 Q606 528 634 524 Q662 528 656 565 Q634 552 612 565 Z" fill="#7a7888"/>
<path d="M580 760 Q578 628 612 602 L656 600 Q694 626 690 760 Z" fill="#161628"/>
<path d="M600 700 L780 612 Q792 606 796 616 L790 624 L612 726 Z" fill="#1a1420"/>
<path d="M770 606 L800 598 L806 612 L784 622 Z" fill="#e0e0e8"/>
<ellipse cx="652" cy="704" rx="30" ry="20" fill="#3a2030" transform="rotate(-25 652 704)"/>
<path d="M958 585 Q955 545 986 540 Q1016 544 1014 588 Q1018 628 1004 650 Q990 630 984 612 Q974 636 962 648 Q950 620 958 585 Z" fill="#c8b8a8" opacity="0.7"/>
<ellipse cx="988" cy="586" rx="15" ry="20" fill="#a89088" opacity="0.9"/>
<path d="M955 760 Q948 650 985 625 Q1022 650 1018 760 Z" fill="#5a4a68" opacity="0.9"/>
<path d="M1006 626 L1028 500 Q1034 488 1042 496 L1022 630 Z" fill="#d8c0c0"/>
<path d="M960 700 L1010 700 L1016 780 L956 780 Z" fill="#b04060" opacity="0.6"/>
<path d="M1144 552 Q1146 528 1166 526 Q1188 528 1186 552 Z" fill="#d8c8a8"/>
<ellipse cx="1165" cy="566" rx="18" ry="22" fill="#c8b0a8"/>
<path d="M1122 760 Q1120 626 1150 598 L1182 598 Q1212 626 1208 760 Z" fill="#3a3a58"/>
<path d="M1132 690 L1262 566 Q1270 558 1276 566 L1146 704 Z" fill="#8a6a50"/>
<path d="M1258 560 L1276 548 L1284 560 L1270 572 Z" fill="#d0c0a0"/>
</g>
<g><g transform="rotate(25 947 778)" fill="#0c0d1e"><rect x="943" y="663" width="9" height="123" rx="4"/><ellipse cx="947" cy="661" rx="7" ry="9"/><path d="M941 657 L939 646 M945 654 L945 643 M949 654 L950 643 M952 657 L955 647 M953 664 L959 659" stroke="#0c0d1e" stroke-width="3" stroke-linecap="round"/></g><g transform="rotate(-19 997 784)" fill="#0c0d1e"><rect x="993" y="666" width="9" height="126" rx="4"/><ellipse cx="997" cy="664" rx="7" ry="9"/><path d="M991 660 L989 649 M995 657 L995 646 M999 657 L1000 646 M1002 660 L1005 650 M1003 667 L1009 662" stroke="#0c0d1e" stroke-width="3" stroke-linecap="round"/></g><g transform="rotate(-24 1107 795)" fill="#0c0d1e"><rect x="1102" y="692" width="9" height="111" rx="4"/><ellipse cx="1107" cy="690" rx="7" ry="9"/><path d="M1101 686 L1099 675 M1105 683 L1105 672 M1109 683 L1110 672 M1112 686 L1115 676 M1113 693 L1119 688" stroke="#0c0d1e" stroke-width="3" stroke-linecap="round"/></g><g transform="rotate(12 622 779)" fill="#0c0d1e"><rect x="617" y="694" width="9" height="93" rx="4"/><ellipse cx="622" cy="692" rx="7" ry="9"/><path d="M616 688 L614 677 M620 685 L620 674 M624 685 L625 674 M627 688 L630 678 M628 695 L634 690" stroke="#0c0d1e" stroke-width="3" stroke-linecap="round"/></g><g transform="rotate(9 1424 839)" fill="#0c0d1e"><rect x="1419" y="714" width="9" height="133" rx="4"/><ellipse cx="1424" cy="712" rx="7" ry="9"/><path d="M1418 708 L1416 697 M1422 705 L1422 694 M1426 705 L1427 694 M1429 708 L1432 698 M1430 715 L1436 710" stroke="#0c0d1e" stroke-width="3" stroke-linecap="round"/></g><g transform="rotate(2 682 681)" fill="#0c0d1e"><rect x="677" y="595" width="9" height="94" rx="4"/><ellipse cx="682" cy="593" rx="7" ry="9"/><path d="M676 589 L674 578 M680 586 L680 575 M684 586 L685 575 M687 589 L690 579 M688 596 L694 591" stroke="#0c0d1e" stroke-width="3" stroke-linecap="round"/></g><g transform="rotate(-28 711 738)" fill="#0c0d1e"><rect x="707" y="623" width="9" height="122" rx="4"/><ellipse cx="711" cy="621" rx="7" ry="9"/><path d="M705 617 L703 606 M709 614 L709 603 M713 614 L714 603 M716 617 L719 607 M717 624 L723 619" stroke="#0c0d1e" stroke-width="3" stroke-linecap="round"/></g><g transform="rotate(1 936 825)" fill="#0c0d1e"><rect x="932" y="698" width="9" height="135" rx="4"/><ellipse cx="936" cy="696" rx="7" ry="9"/><path d="M930 692 L928 681 M934 689 L934 678 M938 689 L939 678 M941 692 L944 682 M942 699 L948 694" stroke="#0c0d1e" stroke-width="3" stroke-linecap="round"/></g><g transform="rotate(-3 990 777)" fill="#0c0d1e"><rect x="985" y="676" width="9" height="109" rx="4"/><ellipse cx="990" cy="674" rx="7" ry="9"/><path d="M984 670 L982 659 M988 667 L988 656 M992 667 L993 656 M995 670 L998 660 M996 677 L1002 672" stroke="#0c0d1e" stroke-width="3" stroke-linecap="round"/></g><g transform="rotate(20 1438 849)" fill="#0c0d1e"><rect x="1433" y="717" width="9" height="140" rx="4"/><ellipse cx="1438" cy="715" rx="7" ry="9"/><path d="M1432 711 L1430 700 M1436 708 L1436 697 M1440 708 L1441 697 M1443 711 L1446 701 M1444 718 L1450 713" stroke="#0c0d1e" stroke-width="3" stroke-linecap="round"/></g><g transform="rotate(-13 824 709)" fill="#0c0d1e"><rect x="819" y="622" width="9" height="95" rx="4"/><ellipse cx="824" cy="620" rx="7" ry="9"/><path d="M818 616 L816 605 M822 613 L822 602 M826 613 L827 602 M829 616 L832 606 M830 623 L836 618" stroke="#0c0d1e" stroke-width="3" stroke-linecap="round"/></g><g transform="rotate(21 1230 752)" fill="#0c0d1e"><rect x="1225" y="643" width="9" height="117" rx="4"/><ellipse cx="1230" cy="641" rx="7" ry="9"/><path d="M1224 637 L1222 626 M1228 634 L1228 623 M1232 634 L1233 623 M1235 637 L1238 627 M1236 644 L1242 639" stroke="#0c0d1e" stroke-width="3" stroke-linecap="round"/></g><g transform="rotate(-30 1402 796)" fill="#0c0d1e"><rect x="1398" y="699" width="9" height="105" rx="4"/><ellipse cx="1402" cy="697" rx="7" ry="9"/><path d="M1396 693 L1394 682 M1400 690 L1400 679 M1404 690 L1405 679 M1407 693 L1410 683 M1408 700 L1414 695" stroke="#0c0d1e" stroke-width="3" stroke-linecap="round"/></g><g transform="rotate(29 1359 762)" fill="#0c0d1e"><rect x="1355" y="652" width="9" height="118" rx="4"/><ellipse cx="1359" cy="650" rx="7" ry="9"/><path d="M1353 646 L1351 635 M1357 643 L1357 632 M1361 643 L1362 632 M1364 646 L1367 636 M1365 653 L1371 648" stroke="#0c0d1e" stroke-width="3" stroke-linecap="round"/></g><g transform="rotate(17 606 773)" fill="#0c0d1e"><rect x="601" y="672" width="9" height="109" rx="4"/><ellipse cx="606" cy="670" rx="7" ry="9"/><path d="M600 666 L598 655 M604 663 L604 652 M608 663 L609 652 M611 666 L614 656 M612 673 L618 668" stroke="#0c0d1e" stroke-width="3" stroke-linecap="round"/></g><g transform="rotate(28 618 770)" fill="#0c0d1e"><rect x="614" y="635" width="9" height="143" rx="4"/><ellipse cx="618" cy="633" rx="7" ry="9"/><path d="M612 629 L610 618 M616 626 L616 615 M620 626 L621 615 M623 629 L626 619 M624 636 L630 631" stroke="#0c0d1e" stroke-width="3" stroke-linecap="round"/></g><g transform="rotate(-24 646 710)" fill="#0c0d1e"><rect x="642" y="624" width="9" height="94" rx="4"/><ellipse cx="646" cy="622" rx="7" ry="9"/><path d="M640 618 L638 607 M644 615 L644 604 M648 615 L649 604 M651 618 L654 608 M652 625 L658 620" stroke="#0c0d1e" stroke-width="3" stroke-linecap="round"/></g><g transform="rotate(4 1257 729)" fill="#0c0d1e"><rect x="1253" y="615" width="9" height="121" rx="4"/><ellipse cx="1257" cy="613" rx="7" ry="9"/><path d="M1251 609 L1249 598 M1255 606 L1255 595 M1259 606 L1260 595 M1262 609 L1265 599 M1263 616 L1269 611" stroke="#0c0d1e" stroke-width="3" stroke-linecap="round"/></g><g transform="rotate(-22 712 812)" fill="#0c0d1e"><rect x="707" y="684" width="9" height="135" rx="4"/><ellipse cx="712" cy="682" rx="7" ry="9"/><path d="M706 678 L704 667 M710 675 L710 664 M714 675 L715 664 M717 678 L720 668 M718 685 L724 680" stroke="#0c0d1e" stroke-width="3" stroke-linecap="round"/></g><g transform="rotate(-17 645 746)" fill="#0c0d1e"><rect x="640" y="646" width="9" height="109" rx="4"/><ellipse cx="645" cy="644" rx="7" ry="9"/><path d="M639 640 L637 629 M643 637 L643 626 M647 637 L648 626 M650 640 L653 630 M651 647 L657 642" stroke="#0c0d1e" stroke-width="3" stroke-linecap="round"/></g><g transform="rotate(-12 1414 837)" fill="#0c0d1e"><rect x="1409" y="693" width="9" height="152" rx="4"/><ellipse cx="1414" cy="691" rx="7" ry="9"/><path d="M1408 687 L1406 676 M1412 684 L1412 673 M1416 684 L1417 673 M1419 687 L1422 677 M1420 694 L1426 689" stroke="#0c0d1e" stroke-width="3" stroke-linecap="round"/></g><g transform="rotate(21 730 769)" fill="#0c0d1e"><rect x="725" y="642" width="9" height="135" rx="4"/><ellipse cx="730" cy="640" rx="7" ry="9"/><path d="M724 636 L722 625 M728 633 L728 622 M732 633 L733 622 M735 636 L738 626 M736 643 L742 638" stroke="#0c0d1e" stroke-width="3" stroke-linecap="round"/></g><g transform="rotate(-17 630 817)" fill="#0c0d1e"><rect x="626" y="717" width="9" height="108" rx="4"/><ellipse cx="630" cy="715" rx="7" ry="9"/><path d="M624 711 L622 700 M628 708 L628 697 M632 708 L633 697 M635 711 L638 701 M636 718 L642 713" stroke="#0c0d1e" stroke-width="3" stroke-linecap="round"/></g><g transform="rotate(-12 1235 721)" fill="#0c0d1e"><rect x="1231" y="634" width="9" height="95" rx="4"/><ellipse cx="1235" cy="632" rx="7" ry="9"/><path d="M1229 628 L1227 617 M1233 625 L1233 614 M1237 625 L1238 614 M1240 628 L1243 618 M1241 635 L1247 630" stroke="#0c0d1e" stroke-width="3" stroke-linecap="round"/></g><g transform="rotate(-15 621 790)" fill="#0c0d1e"><rect x="617" y="666" width="9" height="132" rx="4"/><ellipse cx="621" cy="664" rx="7" ry="9"/><path d="M615 660 L613 649 M619 657 L619 646 M623 657 L624 646 M626 660 L629 650 M627 667 L633 662" stroke="#0c0d1e" stroke-width="3" stroke-linecap="round"/></g><g transform="rotate(28 875 766)" fill="#0c0d1e"><rect x="870" y="650" width="9" height="124" rx="4"/><ellipse cx="875" cy="648" rx="7" ry="9"/><path d="M869 644 L867 633 M873 641 L873 630 M877 641 L878 630 M880 644 L883 634 M881 651 L887 646" stroke="#0c0d1e" stroke-width="3" stroke-linecap="round"/></g><g transform="rotate(-19 1057 794)" fill="#0c0d1e"><rect x="1053" y="701" width="9" height="101" rx="4"/><ellipse cx="1057" cy="699" rx="7" ry="9"/><path d="M1051 695 L1049 684 M1055 692 L1055 681 M1059 692 L1060 681 M1062 695 L1065 685 M1063 702 L1069 697" stroke="#0c0d1e" stroke-width="3" stroke-linecap="round"/></g><g transform="rotate(-15 1358 791)" fill="#0c0d1e"><rect x="1353" y="695" width="9" height="103" rx="4"/><ellipse cx="1358" cy="693" rx="7" ry="9"/><path d="M1352 689 L1350 678 M1356 686 L1356 675 M1360 686 L1361 675 M1363 689 L1366 679 M1364 696 L1370 691" stroke="#0c0d1e" stroke-width="3" stroke-linecap="round"/></g><g transform="rotate(-18 1205 859)" fill="#0c0d1e"><rect x="1201" y="711" width="9" height="157" rx="4"/><ellipse cx="1205" cy="709" rx="7" ry="9"/><path d="M1199 705 L1197 694 M1203 702 L1203 691 M1207 702 L1208 691 M1210 705 L1213 695 M1211 712 L1217 707" stroke="#0c0d1e" stroke-width="3" stroke-linecap="round"/></g><g transform="rotate(-5 1334 758)" fill="#0c0d1e"><rect x="1329" y="668" width="9" height="97" rx="4"/><ellipse cx="1334" cy="666" rx="7" ry="9"/><path d="M1328 662 L1326 651 M1332 659 L1332 648 M1336 659 L1337 648 M1339 662 L1342 652 M1340 669 L1346 664" stroke="#0c0d1e" stroke-width="3" stroke-linecap="round"/></g><g transform="rotate(-16 575 845)" fill="#0c0d1e"><rect x="570" y="713" width="9" height="139" rx="4"/><ellipse cx="575" cy="711" rx="7" ry="9"/><path d="M569 707 L567 696 M573 704 L573 693 M577 704 L578 693 M580 707 L583 697 M581 714 L587 709" stroke="#0c0d1e" stroke-width="3" stroke-linecap="round"/></g><g transform="rotate(6 771 799)" fill="#0c0d1e"><rect x="767" y="696" width="9" height="111" rx="4"/><ellipse cx="771" cy="694" rx="7" ry="9"/><path d="M765 690 L763 679 M769 687 L769 676 M773 687 L774 676 M776 690 L779 680 M777 697 L783 692" stroke="#0c0d1e" stroke-width="3" stroke-linecap="round"/></g><g transform="rotate(-26 698 781)" fill="#0c0d1e"><rect x="693" y="683" width="9" height="106" rx="4"/><ellipse cx="698" cy="681" rx="7" ry="9"/><path d="M692 677 L690 666 M696 674 L696 663 M700 674 L701 663 M703 677 L706 667 M704 684 L710 679" stroke="#0c0d1e" stroke-width="3" stroke-linecap="round"/></g><g transform="rotate(7 1043 801)" fill="#0c0d1e"><rect x="1039" y="700" width="9" height="110" rx="4"/><ellipse cx="1043" cy="698" rx="7" ry="9"/><path d="M1037 694 L1035 683 M1041 691 L1041 680 M1045 691 L1046 680 M1048 694 L1051 684 M1049 701 L1055 696" stroke="#0c0d1e" stroke-width="3" stroke-linecap="round"/></g><g transform="rotate(-29 1366 719)" fill="#0c0d1e"><rect x="1361" y="618" width="9" height="109" rx="4"/><ellipse cx="1366" cy="616" rx="7" ry="9"/><path d="M1360 612 L1358 601 M1364 609 L1364 598 M1368 609 L1369 598 M1371 612 L1374 602 M1372 619 L1378 614" stroke="#0c0d1e" stroke-width="3" stroke-linecap="round"/></g><g transform="rotate(-19 941 708)" fill="#0c0d1e"><rect x="937" y="601" width="9" height="116" rx="4"/><ellipse cx="941" cy="599" rx="7" ry="9"/><path d="M935 595 L933 584 M939 592 L939 581 M943 592 L944 581 M946 595 L949 585 M947 602 L953 597" stroke="#0c0d1e" stroke-width="3" stroke-linecap="round"/></g></g>
<g><ellipse cx="-16" cy="836" rx="26" ry="30" fill="#0c0d1e"/><rect x="-53" y="854" width="74" height="1131" rx="26" fill="#0c0d1e"/><ellipse cx="38" cy="838" rx="29" ry="32" fill="url(#hd)"/><rect x="-2" y="858" width="81" height="1131" rx="29" fill="#0c0d1e"/><ellipse cx="85" cy="827" rx="23" ry="26" fill="url(#hd)"/><rect x="53" y="843" width="65" height="1131" rx="23" fill="#0c0d1e"/><ellipse cx="125" cy="809" rx="27" ry="31" fill="url(#hd)"/><rect x="86" y="828" width="77" height="1131" rx="27" fill="#0c0d1e"/><ellipse cx="175" cy="800" rx="28" ry="31" fill="url(#hd)"/><rect x="137" y="820" width="78" height="1131" rx="28" fill="#0c0d1e"/><ellipse cx="238" cy="790" rx="28" ry="31" fill="url(#hd)"/><rect x="199" y="809" width="78" height="1131" rx="28" fill="#0c0d1e"/><ellipse cx="290" cy="782" rx="23" ry="26" fill="url(#hd)"/><rect x="258" y="798" width="65" height="1131" rx="23" fill="#0c0d1e"/><ellipse cx="339" cy="788" rx="27" ry="31" fill="#0c0d1e"/><rect x="301" y="807" width="77" height="1131" rx="27" fill="#0c0d1e"/><ellipse cx="387" cy="785" rx="28" ry="31" fill="#0c0d1e"/><rect x="348" y="804" width="78" height="1131" rx="28" fill="#0c0d1e"/><ellipse cx="437" cy="764" rx="26" ry="29" fill="#0c0d1e"/><rect x="401" y="782" width="72" height="1131" rx="26" fill="#0c0d1e"/><ellipse cx="487" cy="763" rx="27" ry="30" fill="url(#hd)"/><rect x="450" y="782" width="75" height="1131" rx="27" fill="#0c0d1e"/><ellipse cx="546" cy="770" rx="25" ry="28" fill="url(#hd)"/><rect x="511" y="787" width="69" height="1131" rx="25" fill="#0c0d1e"/><ellipse cx="601" cy="749" rx="23" ry="26" fill="#0c0d1e"/><rect x="568" y="765" width="65" height="1131" rx="23" fill="#0c0d1e"/><ellipse cx="639" cy="756" rx="33" ry="37" fill="#0c0d1e"/><rect x="594" y="779" width="92" height="1131" rx="33" fill="#0c0d1e"/><ellipse cx="704" cy="756" rx="30" ry="34" fill="#0c0d1e"/><rect x="661" y="778" width="85" height="1131" rx="30" fill="#0c0d1e"/><ellipse cx="759" cy="757" rx="26" ry="29" fill="#0c0d1e"/><rect x="724" y="775" width="71" height="1131" rx="26" fill="#0c0d1e"/><ellipse cx="805" cy="745" rx="30" ry="33" fill="#0c0d1e"/><rect x="764" y="766" width="83" height="1131" rx="30" fill="#0c0d1e"/><ellipse cx="861" cy="739" rx="31" ry="35" fill="url(#hd)"/><rect x="818" y="761" width="87" height="1131" rx="31" fill="#0c0d1e"/><ellipse cx="928" cy="756" rx="24" ry="27" fill="url(#hd)"/><rect x="895" y="773" width="66" height="1131" rx="24" fill="#0c0d1e"/><ellipse cx="976" cy="742" rx="23" ry="26" fill="url(#hd)"/><rect x="944" y="758" width="65" height="1131" rx="23" fill="#0c0d1e"/><ellipse cx="1018" cy="750" rx="31" ry="35" fill="#0c0d1e"/><rect x="975" y="772" width="86" height="1131" rx="31" fill="#0c0d1e"/><ellipse cx="1078" cy="749" rx="31" ry="35" fill="url(#hd)"/><rect x="1035" y="770" width="86" height="1131" rx="31" fill="#0c0d1e"/><ellipse cx="1147" cy="739" rx="33" ry="37" fill="#0c0d1e"/><rect x="1101" y="762" width="92" height="1131" rx="33" fill="#0c0d1e"/><ellipse cx="1213" cy="754" rx="28" ry="31" fill="#0c0d1e"/><rect x="1173" y="773" width="78" height="1131" rx="28" fill="#0c0d1e"/><ellipse cx="1264" cy="764" rx="24" ry="26" fill="#0c0d1e"/><rect x="1231" y="780" width="66" height="1131" rx="24" fill="#0c0d1e"/><ellipse cx="1317" cy="748" rx="25" ry="28" fill="url(#hd)"/><rect x="1282" y="765" width="70" height="1131" rx="25" fill="#0c0d1e"/><ellipse cx="1373" cy="768" rx="26" ry="29" fill="url(#hd)"/><rect x="1336" y="787" width="74" height="1131" rx="26" fill="#0c0d1e"/><ellipse cx="1425" cy="771" rx="28" ry="31" fill="url(#hd)"/><rect x="1386" y="790" width="78" height="1131" rx="28" fill="#0c0d1e"/><ellipse cx="1471" cy="776" rx="24" ry="27" fill="url(#hd)"/><rect x="1437" y="793" width="68" height="1131" rx="24" fill="#0c0d1e"/><ellipse cx="1512" cy="765" rx="28" ry="32" fill="#0c0d1e"/><rect x="1473" y="785" width="79" height="1131" rx="28" fill="#0c0d1e"/><ellipse cx="1571" cy="790" rx="28" ry="31" fill="#0c0d1e"/><rect x="1532" y="809" width="78" height="1131" rx="28" fill="#0c0d1e"/><ellipse cx="1627" cy="779" rx="28" ry="32" fill="#0c0d1e"/><rect x="1587" y="799" width="79" height="1131" rx="28" fill="#0c0d1e"/><ellipse cx="1676" cy="801" rx="33" ry="37" fill="#0c0d1e"/><rect x="1629" y="825" width="93" height="1131" rx="33" fill="#0c0d1e"/><ellipse cx="1734" cy="803" rx="28" ry="31" fill="#0c0d1e"/><rect x="1694" y="822" width="78" height="1131" rx="28" fill="#0c0d1e"/><ellipse cx="1790" cy="810" rx="30" ry="34" fill="url(#hd)"/><rect x="1747" y="831" width="84" height="1131" rx="30" fill="#0c0d1e"/><ellipse cx="1846" cy="830" rx="33" ry="37" fill="url(#hd)"/><rect x="1801" y="853" width="92" height="1131" rx="33" fill="#0c0d1e"/><ellipse cx="1902" cy="828" rx="32" ry="35" fill="#0c0d1e"/><rect x="1858" y="851" width="88" height="1131" rx="32" fill="#0c0d1e"/><ellipse cx="1959" cy="834" rx="29" ry="33" fill="#0c0d1e"/><rect x="1918" y="855" width="82" height="1131" rx="29" fill="#0c0d1e"/><ellipse cx="2012" cy="857" rx="25" ry="28" fill="url(#hd)"/><rect x="1977" y="874" width="70" height="1131" rx="25" fill="#0c0d1e"/><ellipse cx="-32" cy="911" rx="41" ry="46" fill="#0a0b1a"/><rect x="-90" y="940" width="116" height="1131" rx="41" fill="#0a0b1a"/><ellipse cx="34" cy="898" rx="43" ry="48" fill="#0a0b1a"/><rect x="-26" y="929" width="120" height="1131" rx="43" fill="#0a0b1a"/><ellipse cx="129" cy="878" rx="34" ry="38" fill="url(#hd)"/><rect x="82" y="902" width="94" height="1131" rx="34" fill="#0a0b1a"/><ellipse cx="197" cy="855" rx="44" ry="50" fill="#0a0b1a"/><rect x="135" y="886" width="124" height="1131" rx="44" fill="#0a0b1a"/><ellipse cx="273" cy="858" rx="44" ry="49" fill="url(#hd)"/><rect x="212" y="889" width="123" height="1131" rx="44" fill="#0a0b1a"/><ellipse cx="350" cy="832" rx="44" ry="49" fill="url(#hd)"/><rect x="288" y="863" width="123" height="1131" rx="44" fill="#0a0b1a"/><ellipse cx="444" cy="822" rx="37" ry="41" fill="#0a0b1a"/><rect x="393" y="848" width="102" height="1131" rx="37" fill="#0a0b1a"/><ellipse cx="512" cy="833" rx="40" ry="45" fill="url(#hd)"/><rect x="456" y="861" width="112" height="1131" rx="40" fill="#0a0b1a"/><ellipse cx="599" cy="829" rx="38" ry="42" fill="url(#hd)"/><rect x="546" y="855" width="106" height="1131" rx="38" fill="#0a0b1a"/><ellipse cx="676" cy="827" rx="38" ry="42" fill="url(#hd)"/><rect x="623" y="853" width="106" height="1131" rx="38" fill="#0a0b1a"/><ellipse cx="739" cy="798" rx="45" ry="50" fill="url(#hd)"/><rect x="676" y="829" width="126" height="1131" rx="45" fill="#0a0b1a"/><ellipse cx="821" cy="807" rx="38" ry="43" fill="url(#hd)"/><rect x="767" y="833" width="107" height="1131" rx="38" fill="#0a0b1a"/><ellipse cx="882" cy="812" rx="43" ry="48" fill="url(#hd)"/><rect x="822" y="842" width="121" height="1131" rx="43" fill="#0a0b1a"/><ellipse cx="974" cy="802" rx="33" ry="37" fill="url(#hd)"/><rect x="927" y="825" width="93" height="1131" rx="33" fill="#0a0b1a"/><ellipse cx="1028" cy="817" rx="43" ry="48" fill="#0a0b1a"/><rect x="968" y="847" width="119" height="1131" rx="43" fill="#0a0b1a"/><ellipse cx="1114" cy="804" rx="40" ry="44" fill="#0a0b1a"/><rect x="1059" y="832" width="111" height="1131" rx="40" fill="#0a0b1a"/><ellipse cx="1200" cy="802" rx="44" ry="50" fill="#0a0b1a"/><rect x="1138" y="833" width="124" height="1131" rx="44" fill="#0a0b1a"/><ellipse cx="1296" cy="812" rx="44" ry="49" fill="#0a0b1a"/><rect x="1234" y="843" width="123" height="1131" rx="44" fill="#0a0b1a"/><ellipse cx="1390" cy="830" rx="37" ry="41" fill="#0a0b1a"/><rect x="1339" y="855" width="102" height="1131" rx="37" fill="#0a0b1a"/><ellipse cx="1474" cy="842" rx="31" ry="35" fill="url(#hd)"/><rect x="1430" y="863" width="87" height="1131" rx="31" fill="#0a0b1a"/><ellipse cx="1530" cy="827" rx="37" ry="41" fill="url(#hd)"/><rect x="1479" y="852" width="102" height="1131" rx="37" fill="#0a0b1a"/><ellipse cx="1608" cy="859" rx="31" ry="34" fill="#0a0b1a"/><rect x="1565" y="881" width="86" height="1131" rx="31" fill="#0a0b1a"/><ellipse cx="1663" cy="849" rx="31" ry="35" fill="url(#hd)"/><rect x="1619" y="870" width="87" height="1131" rx="31" fill="#0a0b1a"/><ellipse cx="1715" cy="851" rx="44" ry="49" fill="#0a0b1a"/><rect x="1653" y="882" width="124" height="1131" rx="44" fill="#0a0b1a"/><ellipse cx="1816" cy="877" rx="46" ry="51" fill="#0a0b1a"/><rect x="1752" y="909" width="127" height="1131" rx="46" fill="#0a0b1a"/><ellipse cx="1891" cy="891" rx="42" ry="47" fill="url(#hd)"/><rect x="1832" y="920" width="117" height="1131" rx="42" fill="#0a0b1a"/><ellipse cx="1963" cy="901" rx="33" ry="37" fill="url(#hd)"/><rect x="1917" y="924" width="92" height="1131" rx="33" fill="#0a0b1a"/><ellipse cx="2017" cy="926" rx="37" ry="41" fill="#0a0b1a"/><rect x="1965" y="952" width="103" height="1131" rx="37" fill="#0a0b1a"/><ellipse cx="-14" cy="980" rx="51" ry="57" fill="#080915"/><rect x="-86" y="1016" width="143" height="1131" rx="51" fill="#080915"/><ellipse cx="89" cy="960" rx="48" ry="54" fill="#080915"/><rect x="21" y="993" width="135" height="1131" rx="48" fill="#080915"/><ellipse cx="168" cy="934" rx="48" ry="54" fill="#080915"/><rect x="100" y="967" width="134" height="1131" rx="48" fill="#080915"/><ellipse cx="269" cy="918" rx="56" ry="63" fill="#080915"/><rect x="190" y="958" width="157" height="1131" rx="56" fill="#080915"/><ellipse cx="379" cy="929" rx="54" ry="61" fill="#080915"/><rect x="302" y="967" width="152" height="1131" rx="54" fill="#080915"/><ellipse cx="503" cy="910" rx="52" ry="58" fill="#080915"/><rect x="430" y="947" width="146" height="1131" rx="52" fill="#080915"/><ellipse cx="599" cy="876" rx="47" ry="53" fill="#080915"/><rect x="533" y="909" width="132" height="1131" rx="47" fill="#080915"/><ellipse cx="689" cy="895" rx="51" ry="57" fill="#080915"/><rect x="618" y="930" width="142" height="1131" rx="51" fill="#080915"/><ellipse cx="804" cy="887" rx="45" ry="50" fill="#080915"/><rect x="741" y="919" width="125" height="1131" rx="45" fill="#080915"/><ellipse cx="884" cy="883" rx="51" ry="57" fill="#080915"/><rect x="812" y="919" width="144" height="1131" rx="51" fill="#080915"/><ellipse cx="988" cy="885" rx="44" ry="49" fill="#080915"/><rect x="927" y="916" width="123" height="1131" rx="44" fill="#080915"/><ellipse cx="1060" cy="866" rx="49" ry="54" fill="#080915"/><rect x="993" y="900" width="136" height="1131" rx="49" fill="#080915"/><ellipse cx="1142" cy="879" rx="41" ry="46" fill="#080915"/><rect x="1083" y="908" width="116" height="1131" rx="41" fill="#080915"/><ellipse cx="1222" cy="875" rx="47" ry="52" fill="#080915"/><rect x="1156" y="908" width="131" height="1131" rx="47" fill="#080915"/><ellipse cx="1301" cy="900" rx="56" ry="63" fill="#080915"/><rect x="1223" y="939" width="157" height="1131" rx="56" fill="#080915"/><ellipse cx="1423" cy="908" rx="55" ry="62" fill="#080915"/><rect x="1345" y="947" width="155" height="1131" rx="55" fill="#080915"/><ellipse cx="1541" cy="902" rx="43" ry="48" fill="#080915"/><rect x="1480" y="932" width="120" height="1131" rx="43" fill="#080915"/><ellipse cx="1637" cy="915" rx="47" ry="53" fill="#080915"/><rect x="1571" y="948" width="133" height="1131" rx="47" fill="#080915"/><ellipse cx="1729" cy="939" rx="46" ry="51" fill="#080915"/><rect x="1665" y="971" width="129" height="1131" rx="46" fill="#080915"/><ellipse cx="1805" cy="932" rx="53" ry="60" fill="#080915"/><rect x="1730" y="969" width="149" height="1131" rx="53" fill="#080915"/><ellipse cx="1923" cy="953" rx="53" ry="60" fill="#080915"/><rect x="1849" y="990" width="149" height="1131" rx="53" fill="#080915"/><ellipse cx="2042" cy="981" rx="49" ry="55" fill="#080915"/><rect x="1973" y="1015" width="137" height="1131" rx="49" fill="#080915"/><ellipse cx="-44" cy="1054" rx="65" ry="73" fill="#070811"/><rect x="-135" y="1099" width="181" height="1131" rx="65" fill="#070811"/><ellipse cx="80" cy="1027" rx="76" ry="85" fill="#070811"/><rect x="-26" y="1080" width="213" height="1131" rx="76" fill="#070811"/><ellipse cx="229" cy="995" rx="72" ry="81" fill="#070811"/><rect x="128" y="1046" width="203" height="1131" rx="72" fill="#070811"/><ellipse cx="374" cy="1012" rx="65" ry="73" fill="#070811"/><rect x="283" y="1057" width="182" height="1131" rx="65" fill="#070811"/><ellipse cx="504" cy="966" rx="71" ry="79" fill="#070811"/><rect x="405" y="1016" width="198" height="1131" rx="71" fill="#070811"/><ellipse cx="630" cy="948" rx="64" ry="72" fill="#070811"/><rect x="540" y="993" width="180" height="1131" rx="64" fill="#070811"/><ellipse cx="759" cy="989" rx="68" ry="76" fill="#070811"/><rect x="664" y="1036" width="190" height="1131" rx="68" fill="#070811"/><ellipse cx="871" cy="964" rx="71" ry="80" fill="#070811"/><rect x="771" y="1014" width="200" height="1131" rx="71" fill="#070811"/><ellipse cx="986" cy="968" rx="54" ry="60" fill="#070811"/><rect x="911" y="1005" width="150" height="1131" rx="54" fill="#070811"/><ellipse cx="1088" cy="972" rx="64" ry="71" fill="#070811"/><rect x="999" y="1017" width="178" height="1131" rx="64" fill="#070811"/><ellipse cx="1205" cy="963" rx="60" ry="67" fill="#070811"/><rect x="1121" y="1005" width="168" height="1131" rx="60" fill="#070811"/><ellipse cx="1315" cy="953" rx="64" ry="71" fill="#070811"/><rect x="1226" y="997" width="178" height="1131" rx="64" fill="#070811"/><ellipse cx="1420" cy="985" rx="52" ry="59" fill="#070811"/><rect x="1347" y="1022" width="147" height="1131" rx="52" fill="#070811"/><ellipse cx="1540" cy="984" rx="51" ry="57" fill="#070811"/><rect x="1469" y="1020" width="144" height="1131" rx="51" fill="#070811"/><ellipse cx="1626" cy="1000" rx="65" ry="73" fill="#070811"/><rect x="1535" y="1045" width="182" height="1131" rx="65" fill="#070811"/><ellipse cx="1749" cy="1001" rx="70" ry="79" fill="#070811"/><rect x="1651" y="1050" width="196" height="1131" rx="70" fill="#070811"/><ellipse cx="1880" cy="1024" rx="56" ry="63" fill="#070811"/><rect x="1801" y="1063" width="158" height="1131" rx="56" fill="#070811"/><ellipse cx="1982" cy="1084" rx="53" ry="59" fill="#070811"/><rect x="1908" y="1121" width="148" height="1131" rx="53" fill="#070811"/><ellipse cx="-52" cy="1179" rx="70" ry="78" fill="#05060d"/><rect x="-149" y="1228" width="195" height="1131" rx="70" fill="#05060d"/><ellipse cx="75" cy="1118" rx="75" ry="85" fill="#05060d"/><rect x="-31" y="1170" width="211" height="1131" rx="75" fill="#05060d"/><ellipse cx="228" cy="1110" rx="80" ry="90" fill="#05060d"/><rect x="115" y="1166" width="225" height="1131" rx="80" fill="#05060d"/><ellipse cx="406" cy="1082" rx="93" ry="104" fill="#05060d"/><rect x="276" y="1147" width="261" height="1131" rx="93" fill="#05060d"/><ellipse cx="596" cy="1098" rx="82" ry="91" fill="#05060d"/><rect x="482" y="1155" width="229" height="1131" rx="82" fill="#05060d"/><ellipse cx="754" cy="1054" rx="95" ry="106" fill="#05060d"/><rect x="622" y="1120" width="265" height="1131" rx="95" fill="#05060d"/><ellipse cx="957" cy="1029" rx="92" ry="103" fill="#05060d"/><rect x="829" y="1093" width="256" height="1131" rx="92" fill="#05060d"/><ellipse cx="1117" cy="1033" rx="90" ry="100" fill="#05060d"/><rect x="992" y="1096" width="251" height="1131" rx="90" fill="#05060d"/><ellipse cx="1310" cy="1083" rx="89" ry="100" fill="#05060d"/><rect x="1186" y="1146" width="250" height="1131" rx="89" fill="#05060d"/><ellipse cx="1481" cy="1064" rx="77" ry="87" fill="#05060d"/><rect x="1373" y="1118" width="217" height="1131" rx="77" fill="#05060d"/><ellipse cx="1628" cy="1114" rx="69" ry="77" fill="#05060d"/><rect x="1532" y="1162" width="192" height="1131" rx="69" fill="#05060d"/><ellipse cx="1776" cy="1095" rx="88" ry="98" fill="#05060d"/><rect x="1654" y="1156" width="246" height="1131" rx="88" fill="#05060d"/><ellipse cx="1949" cy="1120" rx="82" ry="92" fill="#05060d"/><rect x="1833" y="1178" width="230" height="1131" rx="82" fill="#05060d"/><ellipse cx="-26" cy="1273" rx="80" ry="89" fill="#04050a"/><rect x="-137" y="1328" width="223" height="1131" rx="80" fill="#04050a"/><ellipse cx="128" cy="1262" rx="98" ry="110" fill="#04050a"/><rect x="-10" y="1331" width="275" height="1131" rx="98" fill="#04050a"/><ellipse cx="306" cy="1222" rx="92" ry="103" fill="#04050a"/><rect x="178" y="1287" width="257" height="1131" rx="92" fill="#04050a"/><ellipse cx="459" cy="1207" rx="84" ry="94" fill="#04050a"/><rect x="341" y="1266" width="235" height="1131" rx="84" fill="#04050a"/><ellipse cx="624" cy="1142" rx="108" ry="121" fill="#04050a"/><rect x="473" y="1217" width="301" height="1131" rx="108" fill="#04050a"/><ellipse cx="820" cy="1125" rx="88" ry="98" fill="#04050a"/><rect x="697" y="1187" width="245" height="1131" rx="88" fill="#04050a"/><ellipse cx="1004" cy="1144" rx="102" ry="114" fill="#04050a"/><rect x="861" y="1216" width="286" height="1131" rx="102" fill="#04050a"/><ellipse cx="1176" cy="1155" rx="109" ry="122" fill="#04050a"/><rect x="1023" y="1231" width="305" height="1131" rx="109" fill="#04050a"/><ellipse cx="1386" cy="1156" rx="80" ry="90" fill="#04050a"/><rect x="1274" y="1212" width="225" height="1131" rx="80" fill="#04050a"/><ellipse cx="1563" cy="1215" rx="103" ry="116" fill="#04050a"/><rect x="1418" y="1287" width="289" height="1131" rx="103" fill="#04050a"/><ellipse cx="1739" cy="1222" rx="112" ry="125" fill="#04050a"/><rect x="1583" y="1300" width="313" height="1131" rx="112" fill="#04050a"/><ellipse cx="1992" cy="1277" rx="97" ry="109" fill="#04050a"/><rect x="1856" y="1345" width="272" height="1131" rx="97" fill="#04050a"/><ellipse cx="-61" cy="1383" rx="101" ry="113" fill="#030408"/><rect x="-202" y="1453" width="282" height="1131" rx="101" fill="#030408"/><ellipse cx="107" cy="1300" rx="90" ry="101" fill="#030408"/><rect x="-20" y="1364" width="253" height="1131" rx="90" fill="#030408"/><ellipse cx="297" cy="1274" rx="104" ry="116" fill="#030408"/><rect x="151" y="1347" width="291" height="1131" rx="104" fill="#030408"/><ellipse cx="506" cy="1242" rx="96" ry="108" fill="#030408"/><rect x="371" y="1309" width="269" height="1131" rx="96" fill="#030408"/><ellipse cx="715" cy="1299" rx="92" ry="103" fill="#030408"/><rect x="586" y="1364" width="259" height="1131" rx="92" fill="#030408"/><ellipse cx="889" cy="1214" rx="104" ry="116" fill="#030408"/><rect x="744" y="1287" width="290" height="1131" rx="104" fill="#030408"/><ellipse cx="1127" cy="1282" rx="115" ry="129" fill="#030408"/><rect x="966" y="1363" width="322" height="1131" rx="115" fill="#030408"/><ellipse cx="1312" cy="1251" rx="101" ry="113" fill="#030408"/><rect x="1170" y="1322" width="283" height="1131" rx="101" fill="#030408"/><ellipse cx="1481" cy="1270" rx="108" ry="121" fill="#030408"/><rect x="1330" y="1345" width="304" height="1131" rx="108" fill="#030408"/><ellipse cx="1718" cy="1319" rx="93" ry="104" fill="#030408"/><rect x="1587" y="1384" width="261" height="1131" rx="93" fill="#030408"/><ellipse cx="1926" cy="1349" rx="102" ry="114" fill="#030408"/><rect x="1783" y="1420" width="285" height="1131" rx="102" fill="#030408"/><ellipse cx="2098" cy="1399" rx="129" ry="145" fill="#030408"/><rect x="1918" y="1489" width="361" height="1131" rx="129" fill="#030408"/></g>
<g filter="url(#b3)"><path d="M11 827 A29 32 0 0 1 34 806" fill="none" stroke="#2f5ad8" stroke-opacity="0.36" stroke-width="3.3" stroke-linecap="round"/><path d="M134 780 A27 31 0 0 1 152 809" fill="none" stroke="#2f5ad8" stroke-opacity="0.29" stroke-width="4.9" stroke-linecap="round"/><path d="M282 757 A23 26 0 0 1 309 767" fill="none" stroke="#2f5ad8" stroke-opacity="0.47" stroke-width="3.5" stroke-linecap="round"/><path d="M349 759 A27 31 0 0 1 364 775" fill="none" stroke="#2f5ad8" stroke-opacity="0.43" stroke-width="3.7" stroke-linecap="round"/><path d="M413 754 A26 29 0 0 1 438 735" fill="none" stroke="#2f5ad8" stroke-opacity="0.35" stroke-width="4.8" stroke-linecap="round"/><path d="M537 744 A25 28 0 0 1 559 746" fill="none" stroke="#2f5ad8" stroke-opacity="0.29" stroke-width="3.4" stroke-linecap="round"/><path d="M989 738 A31 35 0 0 1 1010 717" fill="none" stroke="#2f5ad8" stroke-opacity="0.35" stroke-width="4.2" stroke-linecap="round"/><path d="M1136 704 A33 37 0 0 1 1165 707" fill="none" stroke="#2f5ad8" stroke-opacity="0.52" stroke-width="2.5" stroke-linecap="round"/><path d="M1308 721 A25 28 0 0 1 1334 728" fill="none" stroke="#2f5ad8" stroke-opacity="0.49" stroke-width="3.3" stroke-linecap="round"/><path d="M1545 779 A28 31 0 0 1 1566 759" fill="none" stroke="#2f5ad8" stroke-opacity="0.42" stroke-width="4.6" stroke-linecap="round"/><path d="M1636 750 A28 32 0 0 1 1654 773" fill="none" stroke="#2f5ad8" stroke-opacity="0.50" stroke-width="4.8" stroke-linecap="round"/><path d="M1707 792 A28 31 0 0 1 1730 771" fill="none" stroke="#2f5ad8" stroke-opacity="0.37" stroke-width="4.5" stroke-linecap="round"/><path d="M1932 823 A29 33 0 0 1 1947 804" fill="none" stroke="#2f5ad8" stroke-opacity="0.30" stroke-width="2.5" stroke-linecap="round"/><path d="M335 786 A44 49 0 0 1 371 789" fill="none" stroke="#2f5ad8" stroke-opacity="0.50" stroke-width="3.6" stroke-linecap="round"/><path d="M410 808 A37 41 0 0 1 441 782" fill="none" stroke="#2f5ad8" stroke-opacity="0.36" stroke-width="4.6" stroke-linecap="round"/><path d="M640 812 A38 42 0 0 1 679 784" fill="none" stroke="#2f5ad8" stroke-opacity="0.55" stroke-width="4.8" stroke-linecap="round"/><path d="M1378 791 A37 41 0 0 1 1411 797" fill="none" stroke="#2f5ad8" stroke-opacity="0.28" stroke-width="4.7" stroke-linecap="round"/><path d="M1543 788 A37 41 0 0 1 1566 834" fill="none" stroke="#2f5ad8" stroke-opacity="0.44" stroke-width="4.3" stroke-linecap="round"/><path d="M3 926 A51 57 0 0 1 37 981" fill="none" stroke="#2f5ad8" stroke-opacity="0.26" stroke-width="4.4" stroke-linecap="round"/><path d="M288 860 A56 63 0 0 1 324 909" fill="none" stroke="#2f5ad8" stroke-opacity="0.54" stroke-width="3.1" stroke-linecap="round"/><path d="M521 856 A52 58 0 0 1 554 900" fill="none" stroke="#2f5ad8" stroke-opacity="0.29" stroke-width="4.7" stroke-linecap="round"/><path d="M583 826 A47 53 0 0 1 630 836" fill="none" stroke="#2f5ad8" stroke-opacity="0.33" stroke-width="4.0" stroke-linecap="round"/><path d="M788 840 A45 50 0 0 1 839 857" fill="none" stroke="#2f5ad8" stroke-opacity="0.44" stroke-width="3.4" stroke-linecap="round"/><path d="M1003 839 A44 49 0 0 1 1032 891" fill="none" stroke="#2f5ad8" stroke-opacity="0.51" stroke-width="2.6" stroke-linecap="round"/><path d="M1156 836 A41 46 0 0 1 1181 864" fill="none" stroke="#2f5ad8" stroke-opacity="0.32" stroke-width="5.0" stroke-linecap="round"/><path d="M1555 857 A43 48 0 0 1 1582 891" fill="none" stroke="#2f5ad8" stroke-opacity="0.41" stroke-width="4.4" stroke-linecap="round"/><path d="M1621 865 A47 53 0 0 1 1659 868" fill="none" stroke="#2f5ad8" stroke-opacity="0.27" stroke-width="3.9" stroke-linecap="round"/><path d="M1787 876 A53 60 0 0 1 1841 888" fill="none" stroke="#2f5ad8" stroke-opacity="0.48" stroke-width="3.3" stroke-linecap="round"/><path d="M254 919 A72 81 0 0 1 300 979" fill="none" stroke="#2f5ad8" stroke-opacity="0.37" stroke-width="3.0" stroke-linecap="round"/><path d="M804 936 A71 80 0 0 1 852 887" fill="none" stroke="#2f5ad8" stroke-opacity="0.28" stroke-width="3.3" stroke-linecap="round"/><path d="M1603 931 A65 73 0 0 1 1675 953" fill="none" stroke="#2f5ad8" stroke-opacity="0.49" stroke-width="3.6" stroke-linecap="round"/><path d="M-76 1106 A70 78 0 0 1 -22 1109" fill="none" stroke="#2f5ad8" stroke-opacity="0.39" stroke-width="4.5" stroke-linecap="round"/><path d="M1227 1049 A89 100 0 0 1 1320 984" fill="none" stroke="#2f5ad8" stroke-opacity="0.51" stroke-width="4.8" stroke-linecap="round"/><path d="M1871 1089 A82 92 0 0 1 1954 1028" fill="none" stroke="#2f5ad8" stroke-opacity="0.50" stroke-width="4.6" stroke-linecap="round"/><path d="M969 1037 A102 114 0 0 1 1080 1069" fill="none" stroke="#2f5ad8" stroke-opacity="0.47" stroke-width="4.5" stroke-linecap="round"/><path d="M1901 1240 A97 109 0 0 1 1962 1173" fill="none" stroke="#2f5ad8" stroke-opacity="0.47" stroke-width="3.3" stroke-linecap="round"/><path d="M415 1205 A96 108 0 0 1 489 1136" fill="none" stroke="#2f5ad8" stroke-opacity="0.48" stroke-width="3.4" stroke-linecap="round"/><path d="M628 1264 A92 103 0 0 1 721 1196" fill="none" stroke="#2f5ad8" stroke-opacity="0.37" stroke-width="3.3" stroke-linecap="round"/></g>
<ellipse cx="1750" cy="980" rx="260" ry="120" fill="#2a48c0" opacity="0.18" filter="url(#b60)"/>
<ellipse cx="150" cy="900" rx="200" ry="140" fill="#2a48c0" opacity="0.15" filter="url(#b60)"/>
</g><rect width="1996" height="1131" fill="#1f1f23" opacity="0.5"/></svg>
</div>
<!-- cast pill -->
<div class="a" style="left:651.5px;top:1601.5px;width:981px;height:121px;border-radius:60.5px;background:#212226"></div>
<svg style="left:717.7px;top:1635.2px" width="54.5" height="54.5" viewBox="0 0 24 24"><path d="M1 18v3h3c0-1.66-1.34-3-3-3zm0-4v2c2.76 0 5 2.24 5 5h2c0-3.870-3.13-7-7-7zm0-4v2c4.97 0 9 4.03 9 9h2c0-6.08-4.93-11-11-11zm20-7H3c-1.1 0-2 .9-2 2v3h2V5h18v14h-7v2h7c1.1 0 2-.9 2-2V5c0-1.1-.9-2-2-2z" fill="#fff"/></svg>
<div class="t" id="cast" style="left:803.5px;top:1643.7px;font-size:37.4px;color:#ffffff;letter-spacing:0.1px;-webkit-text-stroke:0.25px #ffffff">Воспроизводится на телевизоре в гостиной</div>
<div class="t" id="title" style="left:616.4px;top:1793.3px;font-size:41px;color:#242528;letter-spacing:0.42px;-webkit-text-stroke:0.3px #242528">Концерт – Палм-Спрингс</div>
<!-- sidebar -->
<div class="a" style="left:0;top:0;width:3840px;height:1880px;overflow:hidden"><div class="a" style="left:2648px;top:880px;width:287px;height:166px;border-radius:12px;background:#848587"></div>
<div class="a" style="left:2648px;top:1063px;width:287px;height:166px;border-radius:12px;background:#848587"></div><div class="a" style="left:2943px;top:1067px;width:287px;height:32px;border-radius:16.0px;background:#88898b"></div><div class="a" style="left:2943px;top:1104px;width:342px;height:32px;border-radius:16.0px;background:#88898b"></div><div class="a" style="left:2943px;top:1141px;width:152px;height:26px;border-radius:13.0px;background:#88898b"></div><div class="a" style="left:2943px;top:1172px;width:229px;height:26px;border-radius:13.0px;background:#88898b"></div>
<div class="a" style="left:2648px;top:1242px;width:287px;height:166px;border-radius:12px;background:#848587"></div><div class="a" style="left:2943px;top:1242px;width:287px;height:31px;border-radius:15.5px;background:#88898b"></div><div class="a" style="left:2943px;top:1280px;width:342px;height:32px;border-radius:16.0px;background:#88898b"></div><div class="a" style="left:2943px;top:1322px;width:152px;height:24px;border-radius:12.0px;background:#88898b"></div><div class="a" style="left:2943px;top:1355px;width:251px;height:25px;border-radius:12.5px;background:#88898b"></div>
<div class="a" style="left:2648px;top:1422px;width:287px;height:166px;border-radius:12px;background:#848587"></div><div class="a" style="left:2943px;top:1433px;width:287px;height:31px;border-radius:15.5px;background:#88898b"></div><div class="a" style="left:2943px;top:1469px;width:208px;height:26px;border-radius:13.0px;background:#88898b"></div>
<div class="a" style="left:2648px;top:1601px;width:287px;height:166px;border-radius:12px;background:#848587"></div><div class="a" style="left:2943px;top:1607px;width:355px;height:31px;border-radius:15.5px;background:#88898b"></div><div class="a" style="left:2943px;top:1644px;width:307px;height:32px;border-radius:16.0px;background:#88898b"></div><div class="a" style="left:2943px;top:1683px;width:152px;height:25px;border-radius:12.5px;background:#88898b"></div><div class="a" style="left:2943px;top:1713px;width:334px;height:26px;border-radius:13.0px;background:#88898b"></div>
<div class="a" style="left:2648px;top:1776px;width:287px;height:166px;border-radius:12px;background:#848587"></div><div class="a" style="left:2943px;top:1777px;width:334px;height:32px;border-radius:16.0px;background:#88898b"></div><div class="a" style="left:2943px;top:1814px;width:307px;height:33px;border-radius:16.5px;background:#88898b"></div><div class="a" style="left:2943px;top:1853px;width:152px;height:26px;border-radius:13.0px;background:#88898b"></div></div>
<!-- popup -->
<div class="a" id="popup" style="left:2508px;top:557px;width:801px;height:471px;border-radius:20px;overflow:hidden;background:#fff;box-shadow:0 12px 40px rgba(0,0,0,0.45)">
  <div class="a" style="left:0;top:0;width:801px;height:264.5px;background:#060914"></div>
  <svg style="left:435px;top:0;overflow:hidden" width="366" height="264.5" viewBox="354 72 1279 924" preserveAspectRatio="none"><use href="#scene"/></svg>
  <div class="a" style="left:430px;top:0;width:20px;height:265px;background:linear-gradient(90deg,#060914,rgba(6,9,20,0))"></div>
  <div class="a" style="left:40.5px;top:39px;width:57px;height:16px;border-radius:8px;background:#cdd2fa"></div>
  <div class="a" style="left:40.5px;top:88px;width:257px;height:16px;border-radius:8px;background:#cdd2fa"></div>
  <div class="a" style="left:40.5px;top:115px;width:133.5px;height:17px;border-radius:8.5px;background:#cdd2fa"></div>
  <svg style="left:0;top:0" width="400" height="264"><g fill="#cdd2fa" stroke="#cdd2fa" stroke-width="3" stroke-linejoin="round">
    <path d="M50.3 203.5 L66 193.6 L66 213.4 Z"/>
    <path d="M70.5 203.5 L85 193.6 L85 213.4 Z"/>
    <path d="M138.5 191.3 L138.5 215.7 L160 203.5 Z"/>
    <path d="M208.5 193.6 L208.5 213.4 L223.5 203.5 Z"/>
    <path d="M229.5 193.6 L229.5 213.4 L243.5 203.5 Z"/>
  </g><rect x="276" y="178.6" width="4" height="50" rx="2" fill="#cdd2fa"/>
  <g fill="none" stroke="#cdd2fa" stroke-width="3.6"><path d="M327 183.8 H350.8 V202"/><path d="M308.8 201 V216.8 H330"/><path d="M308.5 183.5 L322 197"/><path d="M308.5 197.5 H322.6 V184"/></g>
  <rect x="333" y="206" width="19.6" height="12.6" fill="#cdd2fa"/></svg>
  <!-- menu rows -->
  <svg style="left:46px;top:298.5px" width="48" height="38"><rect x="2.2" y="1.6" width="42.5" height="33.3" rx="2.5" fill="none" stroke="#111" stroke-width="3.2"/><path d="M10.5 17.5H13.2 M16 17.5H37 M10.5 24.5H30.7 M34 24.5H37" stroke="#111" stroke-width="3.2"/></svg>
  <div class="t" id="m1" style="left:124px;top:299.6px;font-size:34.7px;color:#1b1b1c;-webkit-text-stroke:0.35px #1b1b1c">Автоматические субтитры</div>
  <svg style="left:706.5px;top:304px" width="52" height="30"><rect x="2.2" y="2.2" width="45" height="22.5" rx="11.25" fill="none" stroke="#111" stroke-width="4.4"/><circle cx="15" cy="13.5" r="6.6" fill="#111"/></svg>
  <div class="a" style="left:0;top:369px;width:801px;height:1.2px;background:#7d87c0"></div>
  <svg style="left:46px;top:397px" width="48" height="48" id="gear"><path d="M18.43 7.98 L19.75 2.43 L28.25 2.43 L29.57 7.98 L34.48 10.81 L39.95 9.19 L44.20 16.54 L40.05 20.47 L40.05 26.13 L44.20 30.06 L39.95 37.41 L34.48 35.79 L29.57 38.62 L28.25 44.17 L19.75 44.17 L18.43 38.62 L13.52 35.79 L8.05 37.41 L3.80 30.06 L7.95 26.13 L7.95 20.47 L3.80 16.54 L8.05 9.19 L13.52 10.81 Z" fill="none" stroke="#111" stroke-width="2.8" stroke-linejoin="miter"/><circle cx="24" cy="23.3" r="7.2" fill="#111"/></svg>
  <div class="t" id="m2" style="left:122.8px;top:402.5px;font-size:34.9px;color:#1b1b1c;-webkit-text-stroke:0.35px #1b1b1c">Настройки субтитров</div>
  <svg style="left:726px;top:400.5px" width="44" height="44"><g fill="none" stroke="#111" stroke-width="3.1"><path d="M20 2.2 H2.2 V39.3 H39 V22"/><path d="M23.5 2.2 H39 V18"/><path d="M38 3.5 L14 27"/></g></svg>
</div>
<!-- corner notches -->
<div class="a" style="left:496px;top:280px;width:8px;height:16px;background:#000"></div>
<div class="a" style="left:3336px;top:280px;width:8px;height:16px;background:#000"></div>
<div class="a" style="left:496px;top:1864px;width:8px;height:16px;background:#000"></div>
<div class="a" style="left:504px;top:1872px;width:8px;height:8px;background:#000"></div>
<div class="a" style="left:3336px;top:1864px;width:8px;height:16px;background:#000"></div>
<div class="a" style="left:3328px;top:1872px;width:8px;height:8px;background:#000"></div>
</body></html>
